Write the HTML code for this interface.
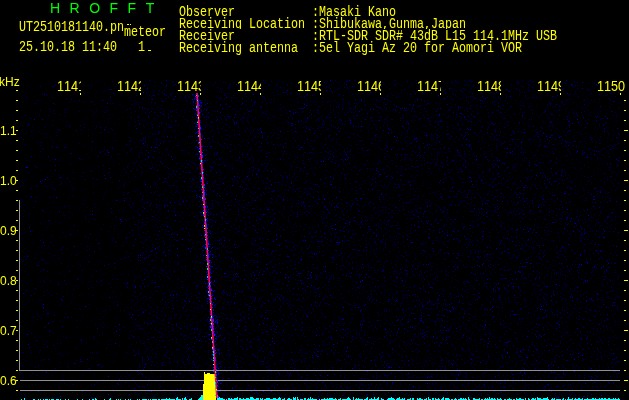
<!DOCTYPE html>
<html lang="en"><head><meta charset="utf-8"><title>HROFFT</title>
<style>
html,body{margin:0;padding:0;background:#000}
body{position:relative;width:629px;height:400px;overflow:hidden;color:#ff0;font-family:"Liberation Mono",monospace}
.m{position:absolute;height:13px;overflow:hidden;color:#ff0}
.m span{position:absolute;left:0;top:1px;display:block;white-space:pre;font:12px/12px "Liberation Mono",monospace;transform:scale(0.9722,1.2651);transform-origin:0 0}
#txt{position:absolute;left:0;top:0;width:629px;height:400px;will-change:transform}
.lb{background:#000;height:13px}
.lb span{font:14px/14px "Liberation Sans",sans-serif;font-kerning:none;transform:scale(.9,1);top:0}
.a{position:absolute;font:12px/12px "Liberation Sans",sans-serif;margin-top:-5px;white-space:pre}
.h{position:absolute;top:0;font:14px/16px "Liberation Sans",sans-serif;color:#0f0;letter-spacing:2.8px;white-space:pre;font-kerning:none}
.dot{position:absolute;height:1px;background:#ff0}
</style></head><body>
<svg width="629" height="400" viewBox="0 0 629 400" shape-rendering="crispEdges" style="position:absolute;left:0;top:0">
<g transform="translate(0,0.5)" fill="none" stroke-width="1">
<path d="M141 80h1m3 0h1m45 0h1m110 0h1m62 0h1m7 0h1m20 0h1m26 0h1m2 0h1m30 0h1m15 0h1m11 0h1m4 0h1m33 0h1m21 0h1m57 0h1m13 0h1M117 81h1m19 0h1m16 0h1m18 0h1m2 0h1m73 0h1m128 0h1m34 0h1m8 0h1m69 0h1m25 0h1m3 0h1m27 0h1m19 0h1m28 0h1M178 82h1m86 0h1m32 0h1m14 0h1m22 0h1m40 0h1m57 0h1m12 0h1m22 0h1m8 0h1m83 0h1m50 0h1M69 83h1m127 0h1m80 0h1m47 0h1m84 0h1m19 0h1m74 0h1m97 0h1M91 84h1m44 0h1m52 0h1m10 0h1m75 0h1m67 0h1m13 0h1m30 0h1m105 0h1m1 0h1M163 85h1m86 0h1m36 0h1m240 0h1m9 0h1m30 0h1m37 0h1m7 0h1m2 0h1M76 86h1m38 0h1m28 0h1m20 0h1m25 0h1m13 0h1m42 0h1m46 0h1m44 0h1m68 0h1m33 0h1m2 0h1m3 0h1m9 0h1m12 0h1m98 0h1M279 87h1m3 0h1m18 0h1m189 0h1m18 0h1m11 0h1m8 0h1m41 0h1m19 0h1m15 0h1M27 88h1m50 0h1m9 0h1m155 0h1m45 0h1m57 0h1m122 0h1m117 0h1M114 89h1m81 0h1m77 0h1m170 0h1m8 0h1m64 0h1m81 0h1M214 90h1m47 0h1m14 0h1m138 0h1m38 0h1m15 0h1m8 0h1m98 0h1M54 91h1m13 0h1m40 0h1m41 0h1m37 0h1m2 0h1m8 0h1m15 0h1m39 0h1m45 0h1m14 0h1m44 0h1m56 0h1m14 0h1m16 0h1m16 0h1m78 0h1m15 0h1m37 0h1M221 92h1m30 0h1m23 0h1m43 0h1m54 0h1m3 0h1m47 0h1m96 0h1m12 0h1m21 0h1m51 0h1m1 0h1M103 93h1m49 0h1m92 0h1m5 0h1m6 0h1m26 0h1m31 0h1m34 0h1m37 0h1m7 0h1m93 0h1m4 0h1m48 0h1m27 0h1m14 0h1M178 94h1m112 0h1m7 0h1m23 0h1m72 0h1m14 0h1m43 0h1m4 0h1m11 0h1m3 0h1m63 0h1m35 0h1m30 0h1M39 95h1m112 0h1m157 0h1m39 0h1m55 0h1m75 0h1m36 0h1m26 0h1m35 0h1m20 0h1M95 96h1m55 0h1m16 0h1m77 0h1m113 0h1m50 0h1m54 0h1m5 0h1m33 0h1m47 0h1M130 97h1m101 0h1m1 0h1m39 0h1m23 0h1m1 0h1m3 0h1m10 0h1m66 0h1m91 0h1m20 0h1m2 0h1m7 0h1m25 0h1m8 0h1m35 0h1M23 98h1m77 0h1m118 0h1m27 0h1m16 0h1m38 0h1m67 0h1m70 0h1m32 0h1m20 0h1M221 99h1m56 0h1m61 0h1m42 0h1m2 0h1m66 0h1m18 0h1m54 0h1m56 0h1m9 0h1m22 0h1M133 100h1m51 0h1m36 0h1m23 0h1m112 0h1m16 0h1m5 0h1m93 0h1m28 0h1m54 0h1m1 0h1m47 0h1M93 101h1m94 0h1m42 0h1m5 0h1h1m92 0h1m45 0h1m117 0h1m9 0h1M45 102h1m88 0h1m13 0h1m112 0h1m50 0h1m25 0h1m6 0h1m141 0h1m78 0h1m31 0h1M113 103h1m9 0h1m17 0h1m144 0h1m17 0h1m134 0h1m76 0h1m34 0h1M119 104h1m158 0h1m1 0h1m29 0h1M150 105h1m129 0h1m13 0h1m16 0h1m71 0h1m55 0h1m30 0h1m6 0h1m17 0h1m35 0h1m23 0h1M156 106h1m163 0h1m96 0h1m131 0h1M34 107h1m116 0h1m15 0h1m228 0h1m65 0h1m89 0h1m32 0h1M207 108h1m53 0h1m45 0h1m35 0h1m4 0h1m53 0h1m5 0h1m49 0h1m88 0h1M56 109h1m72 0h1m104 0h1m8 0h1m121 0h1m28 0h1h1m62 0h1m8 0h1m30 0h1m32 0h1m55 0h1m7 0h1M159 110h1m8 0h1m5 0h1m80 0h1m57 0h1m4 0h1m73 0h1m16 0h1m26 0h1m56 0h1m77 0h1M64 111h1m37 0h1m2 0h1m75 0h1m31 0h1m88 0h1h1m9 0h1m41 0h1m15 0h1m24 0h1m127 0h1m29 0h1m19 0h1M155 112h1m50 0h1m2 0h1m59 0h1m74 0h1m9 0h1m188 0h1M33 113h1m5 0h1m225 0h1m235 0h1h1m46 0h1m56 0h1M103 114h1m37 0h1m4 0h1m60 0h1m20 0h1m15 0h1m16 0h1m18 0h1m47 0h1m2 0h1m78 0h1m85 0h1m49 0h1m40 0h1M96 115h1m83 0h1m92 0h1m25 0h1m39 0h1m13 0h1m33 0h1m26 0h1m47 0h1m45 0h1m28 0h1m31 0h1m49 0h1M64 116h1m28 0h1m110 0h1m15 0h1m15 0h1m12 0h1m1 0h1m20 0h1m21 0h1m60 0h1m11 0h1m13 0h1m5 0h1m24 0h1m3 0h1m33 0h1m18 0h1m68 0h1M143 117h1m94 0h1m2 0h1m26 0h1m94 0h1m91 0h1m32 0h1h1m6 0h1m5 0h1m7 0h1m28 0h1m29 0h1M244 118h1m22 0h1m3 0h1m16 0h1m30 0h1m2 0h1m34 0h1m61 0h1m1 0h1m49 0h1m98 0h1M119 119h1m14 0h1m106 0h1m176 0h1m181 0h1M144 120h1m81 0h1m20 0h1m53 0h1m17 0h1m55 0h1h1m165 0h1m25 0h1h1M63 121h1m41 0h1m128 0h1m59 0h1m6 0h1m12 0h1m14 0h1m113 0h1m14 0h1m8 0h1m40 0h1m85 0h1M128 122h1m35 0h1m78 0h1m13 0h1m21 0h1m69 0h1m53 0h1m73 0h1m9 0h1h1m39 0h1m53 0h1M166 123h1m118 0h1m53 0h1m1 0h1m9 0h1m6 0h1m78 0h1h1m37 0h1m22 0h1m53 0h1M136 124h1m34 0h1m12 0h1m3 0h1m20 0h1m25 0h1m2 0h1m78 0h1m186 0h1m27 0h1M135 125h1m11 0h1m56 0h1m2 0h1m9 0h1m107 0h1m15 0h1m27 0h1m50 0h1m36 0h1m102 0h1M27 126h1m144 0h1m16 0h1m15 0h1m17 0h1m6 0h1m8 0h1m64 0h1m50 0h1m125 0h1m17 0h1m40 0h1m13 0h1M44 127h1m99 0h1m18 0h1m28 0h1m85 0h1m3 0h1m12 0h1m22 0h1m32 0h1m15 0h1h1m11 0h1m27 0h1m13 0h1m26 0h1m4 0h1m12 0h1m20 0h1h1m119 0h1M152 128h1m124 0h1m34 0h1h1m3 0h1h1m85 0h1m12 0h1m39 0h1m3 0h1m37 0h1m9 0h1m8 0h1M22 129h1m143 0h1m22 0h1m54 0h1m83 0h1m25 0h1m11 0h1m38 0h1m61 0h1m25 0h1m11 0h1m17 0h1m26 0h1M164 130h1m9 0h1m70 0h1m27 0h1m19 0h1m20 0h1m4 0h1m71 0h1m15 0h1m87 0h1m66 0h1m5 0h1M26 131h1m130 0h1m52 0h1m30 0h1m47 0h1m6 0h1m3 0h1m13 0h1m47 0h1m48 0h1m40 0h1m86 0h1m24 0h1M219 132h1m148 0h1m38 0h1m16 0h1m75 0h1M41 133h1m8 0h1m29 0h1m11 0h1m56 0h1m4 0h1m82 0h1m110 0h1m1 0h1m36 0h1m10 0h1m68 0h1m89 0h1M320 134h1m84 0h1m6 0h1m85 0h1m59 0h1m41 0h1M73 135h1m104 0h1m10 0h1m44 0h1m133 0h1m16 0h1m75 0h1h1m14 0h1m96 0h1M148 136h1m15 0h1m65 0h1m2 0h1m14 0h1m8 0h1m9 0h1h1m12 0h1m46 0h1m29 0h1m80 0h1m3 0h1m142 0h1m8 0h1M20 137h1m91 0h1m95 0h1m26 0h1m65 0h1m15 0h1m30 0h1m11 0h1m51 0h1m3 0h1m14 0h1m46 0h1m114 0h1m13 0h1M32 138h1m98 0h1m144 0h1m9 0h1m46 0h1m37 0h1m61 0h1m21 0h1m2 0h1m93 0h1m9 0h1m25 0h1m13 0h1M157 139h1m54 0h1m11 0h1m18 0h1m92 0h1m196 0h1m1 0h1m54 0h1m8 0h1M52 140h1m64 0h1m55 0h1m56 0h1m4 0h1m55 0h1m9 0h1m110 0h1m4 0h1m51 0h1m4 0h1m90 0h1m41 0h1M215 141h1m43 0h1m145 0h1h1m34 0h1m11 0h1m10 0h1m14 0h1m19 0h1m33 0h1m27 0h1m22 0h1m11 0h1M145 142h1m17 0h1m14 0h1m77 0h1m2 0h1m11 0h1m28 0h1m126 0h1m57 0h1m53 0h1m39 0h1M163 143h1m14 0h1m15 0h1m53 0h1m18 0h1m53 0h1m52 0h1m32 0h1m59 0h1m28 0h1M27 144h1m37 0h1m118 0h1m85 0h1m78 0h1m27 0h1m74 0h1m38 0h1m29 0h1M20 145h1m31 0h1m166 0h1m8 0h1m111 0h1m190 0h1m29 0h1m10 0h1h1M104 146h1m7 0h1m22 0h1h1m166 0h1m90 0h1m68 0h1m33 0h1m18 0h1m89 0h1M139 147h1m7 0h1m6 0h1m69 0h1m26 0h1m8 0h1m14 0h1m21 0h1m2 0h1m156 0h1m2 0h1m85 0h1h1m22 0h1M155 148h1m26 0h1m120 0h1m23 0h1m47 0h1m26 0h1m7 0h1m145 0h1m21 0h1M233 149h1m74 0h1m35 0h1m23 0h1m88 0h1M59 150h1m107 0h1m13 0h1m66 0h1m48 0h1m30 0h1m189 0h1m88 0h1M265 151h1m27 0h1m43 0h1m5 0h1m93 0h1m20 0h1m63 0h1m24 0h1m34 0h1M142 152h1m50 0h1m27 0h1m17 0h1m30 0h1m26 0h1m22 0h1m118 0h1m2 0h1m63 0h1m63 0h1m20 0h1M98 153h1m63 0h1m22 0h1m121 0h1m5 0h1m14 0h1m15 0h1m93 0h1m17 0h1m7 0h1m27 0h1m18 0h1m28 0h1m8 0h1M214 154h1m1 0h1m41 0h1m25 0h1m59 0h1m24 0h1m5 0h1m25 0h1m58 0h1m3 0h1m34 0h1m14 0h1m72 0h1m14 0h1m10 0h1M147 155h1m20 0h1m47 0h1m30 0h1m21 0h1m31 0h1m15 0h1m105 0h1m7 0h1m11 0h1m21 0h1m8 0h1m71 0h1m40 0h1M98 156h1m12 0h1m30 0h1m16 0h1m15 0h1m91 0h1m26 0h1m20 0h1m5 0h1m2 0h1m11 0h1m124 0h1m12 0h1m19 0h1m25 0h1m28 0h1m11 0h1m4 0h1m14 0h1m31 0h1M71 157h1m38 0h1m50 0h1m60 0h1m80 0h1m19 0h1m18 0h1m53 0h1m40 0h1m47 0h1m32 0h1m13 0h1m22 0h1m41 0h1m7 0h1M119 158h1m33 0h1m251 0h1m18 0h1m26 0h1m18 0h1m27 0h1m57 0h1M45 159h1m86 0h1m32 0h1m41 0h1h1m17 0h1m51 0h1m4 0h1m40 0h1m1 0h1m51 0h1m5 0h1m28 0h1m22 0h1h1m31 0h1m52 0h1m51 0h1m1 0h1m14 0h1M238 160h1m23 0h1m6 0h1m44 0h1m5 0h1m71 0h1m28 0h1m15 0h1m13 0h1m13 0h1h1m56 0h1m5 0h1m6 0h1m12 0h1m1 0h1m4 0h1m30 0h1M61 161h1m8 0h1m86 0h1m65 0h1m63 0h1m117 0h1m40 0h1m135 0h1m14 0h1m21 0h1M113 162h1m27 0h1m18 0h1m21 0h1m6 0h1m61 0h1m53 0h1m82 0h1m41 0h1m5 0h1m31 0h1m70 0h1m14 0h1m50 0h1M134 163h1m12 0h1m28 0h1m16 0h1m81 0h1m67 0h1m48 0h1m22 0h1m28 0h1m37 0h1m48 0h1m75 0h1M194 164h1m22 0h1m2 0h1m49 0h1m17 0h1m2 0h1m116 0h1m59 0h1m35 0h1m55 0h1M69 165h1m112 0h1m35 0h1m202 0h1m26 0h1m64 0h1m23 0h1M86 166h1m94 0h1m6 0h1m20 0h1m14 0h1m38 0h1m2 0h1m40 0h1m29 0h1m17 0h1m72 0h1m25 0h1m1 0h1m10 0h1M25 167h1m115 0h1m45 0h1m25 0h1m82 0h1m28 0h1m208 0h1m9 0h1m64 0h1m6 0h1M137 168h1m31 0h1m103 0h1m82 0h1m20 0h1m30 0h1m20 0h1m43 0h1m14 0h1m23 0h1m62 0h1m4 0h1m17 0h1M21 169h1h1m50 0h1m62 0h1m137 0h1m15 0h1m11 0h1m32 0h1m54 0h1m30 0h1m36 0h1m2 0h1m77 0h1m22 0h1m37 0h1M131 170h1m79 0h1m3 0h1m23 0h1m11 0h1m29 0h1m43 0h1h1m16 0h1m23 0h1m12 0h1m8 0h1m57 0h1m49 0h1m29 0h1m50 0h1M166 171h1m14 0h1m75 0h1m40 0h1m35 0h1m65 0h1m27 0h1m2 0h1m45 0h1m111 0h1m4 0h1M98 172h1m89 0h1m31 0h1m37 0h1m71 0h1m54 0h1m72 0h1m1 0h1m143 0h1m10 0h1M103 173h1m49 0h1m59 0h1m16 0h1m12 0h1m9 0h1m26 0h1m82 0h1m44 0h1m22 0h1m43 0h1m101 0h1M114 174h1m41 0h1m6 0h1m4 0h1m178 0h1m93 0h1m51 0h1m7 0h1m2 0h1m56 0h1m54 0h1M120 175h1m49 0h1m24 0h1m90 0h1m91 0h1m49 0h1m57 0h1m78 0h1m15 0h1m11 0h1M51 176h1m76 0h1m43 0h1m40 0h1m27 0h1m50 0h1m13 0h1m26 0h1m39 0h1m37 0h1m151 0h1M33 177h1m25 0h1m268 0h1m15 0h1m10 0h1m59 0h1m43 0h1m13 0h1m33 0h1m62 0h1m5 0h1M164 178h1m60 0h1m23 0h1m5 0h1m27 0h1m2 0h1h1m97 0h1m140 0h1M26 179h1m106 0h1m56 0h1m1 0h1m52 0h1m2 0h1m96 0h1m111 0h1m5 0h1m17 0h1m3 0h1m30 0h1m11 0h1M21 180h1m101 0h1m91 0h1m45 0h1m34 0h1m8 0h1m87 0h1m6 0h1m100 0h1m73 0h1M20 181h1m40 0h1m78 0h1m13 0h1m2 0h1m98 0h1m1 0h1m32 0h1m41 0h1m28 0h1m50 0h1m113 0h1m12 0h1m8 0h1m3 0h1h1m33 0h1M65 182h1m154 0h1m66 0h1m39 0h1m26 0h1m53 0h1m20 0h1m140 0h1M49 183h1m217 0h1m36 0h1m5 0h1m5 0h1m29 0h1m30 0h1m23 0h1m13 0h1m65 0h1m18 0h1m71 0h1M51 184h1m166 0h1m5 0h1m30 0h1m25 0h1m39 0h1m80 0h1m2 0h1m25 0h1m62 0h1m1 0h1m107 0h1M48 185h1m18 0h1m129 0h1m13 0h1m82 0h1m29 0h1m76 0h1m60 0h1m25 0h1m23 0h1m66 0h1m34 0h1M120 186h1m145 0h1m60 0h1m16 0h1m30 0h1m8 0h1m69 0h1m15 0h1m147 0h1M172 187h1m15 0h1m7 0h1m72 0h1m4 0h1m72 0h1m45 0h1m88 0h1m10 0h1m46 0h1M73 188h1h1m44 0h1m56 0h1m119 0h1m17 0h1m73 0h1m24 0h1m156 0h1m24 0h1M111 189h1m193 0h1m3 0h1m148 0h1m41 0h1m82 0h1m17 0h1m9 0h1m4 0h1M37 190h1m68 0h1m84 0h1m20 0h1m71 0h1m1 0h1m18 0h1m45 0h1m5 0h1m12 0h1m8 0h1m21 0h1h1m17 0h1m102 0h1m59 0h1M80 191h1m57 0h1m16 0h1m16 0h1m125 0h1m138 0h1h1m12 0h1m40 0h1m50 0h1m4 0h1M179 192h1m133 0h1m25 0h1m94 0h1m1 0h1m115 0h1m9 0h1m25 0h1h1M31 193h1m13 0h1m107 0h1m57 0h1m85 0h1m5 0h1m3 0h1m50 0h1m23 0h1m3 0h1m53 0h1m15 0h1m13 0h1m11 0h1m27 0h1m59 0h1m6 0h1h1m12 0h1M53 194h1m15 0h1m70 0h1m119 0h1h1m8 0h1m27 0h1m27 0h1m112 0h1h1m143 0h1M26 195h1m204 0h1m4 0h1m17 0h1m79 0h1m128 0h1m27 0h1m11 0h1m66 0h1m12 0h1m14 0h1M38 196h1m44 0h1m189 0h1m9 0h1m26 0h1m7 0h1m60 0h1m18 0h1m81 0h1m30 0h1M85 197h1m103 0h1m67 0h1m42 0h1m91 0h1m24 0h1m22 0h1m15 0h1m23 0h1m1 0h1m59 0h1m62 0h1m1 0h1m9 0h1M117 198h1m6 0h1m14 0h1m135 0h1m137 0h1m1 0h1M97 199h1m49 0h1m17 0h1m217 0h1m73 0h1m84 0h1M83 200h1m33 0h1m44 0h1m4 0h1m15 0h1m31 0h1m135 0h1m35 0h1m48 0h1m23 0h1m2 0h1h1m17 0h1m37 0h1m10 0h1m7 0h1M119 201h1m58 0h1m37 0h1m12 0h1m30 0h1m149 0h1m6 0h1m11 0h1m31 0h1h1m14 0h1m42 0h1m9 0h1m14 0h1m7 0h1m56 0h1M107 202h1m75 0h1m47 0h1m77 0h1m134 0h1m6 0h1m11 0h1m74 0h1m53 0h1M48 203h1m10 0h1m213 0h1m80 0h1m52 0h1m50 0h1m2 0h1m39 0h1m51 0h1M63 204h1m43 0h1m104 0h1m33 0h1m55 0h1m15 0h1m34 0h1m24 0h1m20 0h1m87 0h1m4 0h1m5 0h1m120 0h1M25 205h1m57 0h1m68 0h1m81 0h1h1m11 0h1m1 0h1m55 0h1m9 0h1m101 0h1m54 0h1m70 0h1m5 0h1m20 0h1M61 206h1m79 0h1m46 0h1m95 0h1m7 0h1m18 0h1m27 0h1m22 0h1m41 0h1m21 0h1m54 0h1M53 207h1m11 0h1m21 0h1m68 0h1m63 0h1m23 0h1m84 0h1m33 0h1m57 0h1m119 0h1m5 0h1m33 0h1M70 208h1m67 0h1m144 0h1m40 0h1m15 0h1m36 0h1m39 0h1m100 0h1m72 0h1m6 0h1M140 209h1m10 0h1m8 0h1m103 0h1m61 0h1m30 0h1m78 0h1m16 0h1m32 0h1m23 0h1m50 0h1m57 0h1M85 210h1m4 0h1m176 0h1m67 0h1m37 0h1m67 0h1m135 0h1M122 211h1m49 0h1m74 0h1m1 0h1m28 0h1m2 0h1m17 0h1m7 0h1m15 0h1m68 0h1m35 0h1m15 0h1m108 0h1m9 0h1m15 0h1m26 0h1M57 212h1m90 0h1m71 0h1m31 0h1m40 0h1m30 0h1m66 0h1m19 0h1m29 0h1m98 0h1m30 0h1m18 0h1M219 213h1m25 0h1m4 0h1m14 0h1m16 0h1m22 0h1m2 0h1h1m33 0h1m36 0h1m16 0h1m60 0h1m20 0h1m1 0h1m12 0h1m19 0h1m10 0h1m31 0h1M72 214h1m153 0h1m66 0h1m64 0h1m19 0h1m69 0h1m25 0h1m55 0h1m2 0h1m26 0h1m4 0h1m6 0h1m35 0h1m4 0h1M146 215h1m51 0h1m15 0h1m45 0h1m46 0h1m9 0h1h1m25 0h1m125 0h1m5 0h1m14 0h1m16 0h1m3 0h1m33 0h1m2 0h1m19 0h1m29 0h1m17 0h1M115 216h1m65 0h1m79 0h1m8 0h1m13 0h1m107 0h1m84 0h1m9 0h1m91 0h1m36 0h1M30 217h1m115 0h1m1 0h1m113 0h1m21 0h1m55 0h1m106 0h1m8 0h1m56 0h1m7 0h1m85 0h1M65 218h1m28 0h1m163 0h1m29 0h1m52 0h1m11 0h1m56 0h1h1m1 0h1m22 0h1m170 0h1M122 219h1m29 0h1m4 0h1m9 0h1m91 0h1m12 0h1m58 0h1m5 0h1m74 0h1m40 0h1m161 0h1M150 220h1m85 0h1m49 0h1m68 0h1m80 0h1m119 0h1m4 0h1m8 0h1m40 0h1m1 0h1M55 221h1m124 0h1m4 0h1m40 0h1m18 0h1m18 0h1m153 0h1m28 0h1m26 0h1m81 0h1m3 0h1M157 222h1m39 0h1m13 0h1m56 0h1m20 0h1m128 0h1m8 0h1m26 0h1m88 0h1m62 0h1M20 223h1m179 0h1m27 0h1m16 0h1m19 0h1m57 0h1m22 0h1m13 0h1m8 0h1m127 0h1m3 0h1M49 224h1m84 0h1m98 0h1m39 0h1m9 0h1m9 0h1m86 0h1m7 0h1m25 0h1m48 0h1m61 0h1m20 0h1m3 0h1m10 0h1M152 225h1m11 0h1m7 0h1m61 0h1m55 0h1m40 0h1m42 0h1m11 0h1m131 0h1m29 0h1m17 0h1m28 0h1m5 0h1M186 226h1m43 0h1m15 0h1m3 0h1m61 0h1m163 0h1m26 0h1m20 0h1m84 0h1m4 0h1M140 227h1m1 0h1m14 0h1m53 0h1m128 0h1m43 0h1m115 0h1m4 0h1m67 0h1m7 0h1m5 0h1m22 0h1M236 228h1m2 0h1m82 0h1m6 0h1m38 0h1m15 0h1m12 0h1m86 0h1m19 0h1m76 0h1m17 0h1m11 0h1M190 229h1m62 0h1m4 0h1m17 0h1m26 0h1h1m66 0h1m15 0h1m18 0h1m30 0h1m16 0h1m70 0h1m2 0h1M177 230h1m106 0h1m35 0h1m68 0h1m49 0h1m148 0h1m3 0h1M52 231h1m113 0h1m17 0h1m76 0h1m8 0h1m4 0h1m20 0h1m11 0h1m19 0h1m78 0h1m22 0h1m23 0h1m26 0h1m67 0h1m6 0h1m35 0h1M24 232h1m14 0h1m58 0h1m33 0h1m60 0h1m4 0h1m91 0h1m22 0h1m2 0h1m13 0h1m6 0h1m1 0h1m162 0h1m10 0h1m10 0h1m1 0h1m37 0h1m16 0h1m4 0h1M22 233h1m151 0h1m37 0h1m57 0h1m52 0h1m37 0h1m23 0h1m30 0h1m146 0h1m2 0h1m8 0h1m19 0h1M21 234h1m29 0h1m66 0h1m48 0h1m31 0h1m156 0h1m8 0h1m20 0h1m9 0h1m9 0h1m11 0h1m41 0h1m7 0h1m111 0h1h1m6 0h1m12 0h1M108 235h1m129 0h1m27 0h1m189 0h1m7 0h1m6 0h1m47 0h1m9 0h1m5 0h1m82 0h1M64 236h1h1m8 0h1m67 0h1m102 0h1m137 0h1m5 0h1m6 0h1m5 0h1m56 0h1m26 0h1m82 0h1m5 0h1M85 237h1m43 0h1m19 0h1m74 0h1m31 0h1m3 0h1m12 0h1m67 0h1m56 0h1m42 0h1m94 0h1m19 0h1m2 0h1m20 0h1h1M96 238h1m213 0h1m5 0h1m48 0h1m27 0h1m44 0h1m19 0h1m7 0h1m36 0h1m91 0h1M308 239h1m77 0h1m30 0h1m39 0h1m18 0h1m6 0h1m39 0h1m87 0h1m6 0h1M173 240h1m40 0h1m36 0h1m34 0h1m231 0h1m4 0h1m18 0h1m16 0h1M22 241h1m148 0h1m24 0h1m38 0h1m4 0h1h1m2 0h1m27 0h1m67 0h1m27 0h1m24 0h1m66 0h1m7 0h1m31 0h1m47 0h1M42 242h1m44 0h1m22 0h1m23 0h1m115 0h1m10 0h1m42 0h1m8 0h1m83 0h1m43 0h1m7 0h1m16 0h1m49 0h1m47 0h1m22 0h1m20 0h1M80 243h1m111 0h1m26 0h1m69 0h1m37 0h1m53 0h1m1 0h1m55 0h1m45 0h1m50 0h1m6 0h1m22 0h1M81 244h1m89 0h1m63 0h1m21 0h1m79 0h1m21 0h1m14 0h1m25 0h1m67 0h1m3 0h1m29 0h1m6 0h1m59 0h1M153 245h1m64 0h1m49 0h1m16 0h1m51 0h1m31 0h1m1 0h1m121 0h1m32 0h1m19 0h1m36 0h1M100 246h1m47 0h1m78 0h1m10 0h1m54 0h1m60 0h1m15 0h1m114 0h1m42 0h1m4 0h1m20 0h1m7 0h1M27 247h1m33 0h1m105 0h1m69 0h1m71 0h1m16 0h1m21 0h1m22 0h1m46 0h1m6 0h1m36 0h1m16 0h1m85 0h1m28 0h1M133 248h1m13 0h1m119 0h1h1m12 0h1m97 0h1m3 0h1m29 0h1m121 0h1m42 0h1m11 0h1M185 249h1m2 0h1m61 0h1h1m92 0h1m85 0h1m33 0h1m7 0h1m19 0h1m27 0h1m33 0h1m36 0h1M107 250h1m30 0h1m38 0h1m41 0h1m55 0h1m99 0h1m21 0h1m41 0h1m21 0h1m45 0h1m51 0h1m3 0h1m53 0h1M59 251h1m85 0h1m13 0h1m61 0h1m9 0h1m34 0h1m69 0h1m143 0h1m7 0h1m14 0h1m10 0h1m8 0h1m1 0h1m8 0h1m25 0h1m16 0h1m7 0h1m25 0h1M110 252h1m16 0h1m43 0h1m19 0h1m106 0h1m4 0h1m53 0h1m105 0h1m42 0h1m25 0h1m23 0h1m58 0h1M36 253h1m104 0h1m23 0h1m2 0h1m30 0h1m71 0h1h1m21 0h1m8 0h1m75 0h1m40 0h1h1m97 0h1M26 254h1m9 0h1m34 0h1m72 0h1m6 0h1m61 0h1m1 0h1m40 0h1m74 0h1m2 0h1m2 0h1m18 0h1m137 0h1m89 0h1M55 255h1m267 0h1h1m98 0h1m35 0h1m49 0h1m4 0h1m47 0h1m42 0h1M60 256h1m167 0h1m16 0h1m12 0h1m1 0h1m13 0h1m14 0h1m46 0h1m5 0h1m137 0h1m33 0h1m16 0h1m23 0h1m60 0h1M143 257h1m13 0h1m68 0h1m286 0h1m20 0h1M35 258h1m51 0h1m25 0h1m6 0h1m68 0h1m25 0h1m81 0h1m34 0h1m18 0h1m10 0h1m35 0h1m8 0h1m71 0h1m29 0h1m53 0h1m12 0h1m13 0h1M25 259h1m218 0h1m96 0h1m156 0h1m84 0h1m18 0h1m4 0h1m1 0h1M168 260h1m82 0h1m114 0h1m3 0h1m42 0h1m55 0h1m18 0h1m18 0h1m13 0h1m52 0h1m11 0h1M116 261h1m101 0h1m81 0h1m51 0h1m7 0h1m90 0h1h1m25 0h1m23 0h1m74 0h1m30 0h1M38 262h1m10 0h1m164 0h1m34 0h1m41 0h1m41 0h1m46 0h1m27 0h1m33 0h1m136 0h1M100 263h1m9 0h1m109 0h1m131 0h1m15 0h1m64 0h1m72 0h1m16 0h1M50 264h1m28 0h1m14 0h1m188 0h1m29 0h1m36 0h1m50 0h1m11 0h1m41 0h1m11 0h1m82 0h1m56 0h1M123 265h1m44 0h1m9 0h1m110 0h1m76 0h1m77 0h1m13 0h1M67 266h1m92 0h1m4 0h1m3 0h1m103 0h1m49 0h1m197 0h1m52 0h1m4 0h1M84 267h1m69 0h1m1 0h1m60 0h1m13 0h1m33 0h1m6 0h1h1m49 0h1m49 0h1m97 0h1M78 268h1m63 0h1m4 0h1m4 0h1m4 0h1m24 0h1m37 0h1m92 0h1m4 0h1m59 0h1m103 0h1m127 0h1M91 269h1m49 0h1m18 0h1m89 0h1m106 0h1m19 0h1m33 0h1m89 0h1m91 0h1m12 0h1M164 270h1m84 0h1m68 0h1m85 0h1m15 0h1m116 0h1m27 0h1M25 271h1m37 0h1m77 0h1m12 0h1m15 0h1m81 0h1m6 0h1m13 0h1m14 0h1m35 0h1m58 0h1m43 0h1m10 0h1m36 0h1m9 0h1m3 0h1m102 0h1M38 272h1m120 0h1m5 0h1m50 0h1m13 0h1m159 0h1m9 0h1h1m75 0h1m17 0h1m62 0h1m34 0h1M133 273h1m23 0h1m9 0h1m33 0h1m48 0h1m12 0h1m62 0h1m75 0h1m13 0h1m54 0h1m5 0h1m3 0h1m48 0h1M120 274h1m50 0h1m19 0h1m63 0h1m63 0h1m37 0h1m24 0h1m11 0h1m96 0h1m36 0h1m18 0h1m24 0h1M112 275h1m26 0h1h1m49 0h1m37 0h1m61 0h1m16 0h1m14 0h1m3 0h1m15 0h1m27 0h1m50 0h1m26 0h1m72 0h1m71 0h1M251 276h1m47 0h1m11 0h1m57 0h1m21 0h1m2 0h1m41 0h1m165 0h1M234 277h1m57 0h1m8 0h1m18 0h1m1 0h1m148 0h1m12 0h1m25 0h1m10 0h1M138 278h1m94 0h1m76 0h1m28 0h1m10 0h1m4 0h1m41 0h1m3 0h1m74 0h1m5 0h1m17 0h1m20 0h1m2 0h1m26 0h1M102 279h1m32 0h1m138 0h1m3 0h1m175 0h1m61 0h1h1m5 0h1m80 0h1M133 280h1m21 0h1m100 0h1m60 0h1m36 0h1m38 0h1m27 0h1m52 0h1m34 0h1m43 0h1m20 0h1m38 0h1M30 281h1m151 0h1m38 0h1m39 0h1m5 0h1m34 0h1m19 0h1m79 0h1m182 0h1m3 0h1m2 0h1M152 282h1m3 0h1m14 0h1m167 0h1m61 0h1m26 0h1m65 0h1m40 0h1m14 0h1m36 0h1m13 0h1m8 0h1M123 283h1m18 0h1m58 0h1m50 0h1m138 0h1m36 0h1m86 0h1m6 0h1m96 0h1M132 284h1m29 0h1m7 0h1m134 0h1m3 0h1m59 0h1m13 0h1m49 0h1m72 0h1m51 0h1m8 0h1M61 285h1m73 0h1m111 0h1m167 0h1m54 0h1m2 0h1m29 0h1m59 0h1M91 286h1m97 0h1m6 0h1m27 0h1m11 0h1m97 0h1m78 0h1m51 0h1m8 0h1m128 0h1M176 287h1m52 0h1m124 0h1m7 0h1m15 0h1m20 0h1m14 0h1m57 0h1m88 0h1M107 288h1m33 0h1m106 0h1m18 0h1m26 0h1m13 0h1m50 0h1m2 0h1m107 0h1m16 0h1m5 0h1m12 0h1m11 0h1M234 289h1m27 0h1m2 0h1m67 0h1m84 0h1m19 0h1m67 0h1m12 0h1m4 0h1m13 0h1m78 0h1M168 290h1m54 0h1m19 0h1m82 0h1m119 0h1m38 0h1m89 0h1m37 0h1M24 291h1m144 0h1m27 0h1m38 0h1m17 0h1h1m31 0h1m59 0h1m53 0h1m62 0h1m26 0h1m42 0h1m4 0h1m40 0h1m31 0h1M61 292h1m99 0h1m18 0h1m4 0h1m129 0h1m21 0h1m21 0h1m24 0h1m32 0h1m15 0h1m73 0h1m37 0h1m59 0h1m3 0h1M185 293h1m12 0h1m29 0h1m48 0h1m15 0h1m9 0h1m77 0h1m9 0h1m21 0h1m14 0h1m90 0h1m3 0h1m11 0h1m55 0h1m4 0h1h1M104 294h1m57 0h1m11 0h1m105 0h1m52 0h1m73 0h1m74 0h1m11 0h1m85 0h1m12 0h1m13 0h1m4 0h1M29 295h1m49 0h1m102 0h1m127 0h1m73 0h1m149 0h1M204 296h1h1m49 0h1m25 0h1m33 0h1m10 0h1m36 0h1m84 0h1m29 0h1m81 0h1m19 0h1m5 0h1M179 297h1m36 0h1m43 0h1m70 0h1m12 0h1m93 0h1m54 0h1m44 0h1m80 0h1M149 298h1m12 0h1m9 0h1m167 0h1m134 0h1m29 0h1m2 0h1m99 0h1M40 299h1m126 0h1m57 0h1m10 0h1m120 0h1m2 0h1m31 0h1m104 0h1m71 0h1m6 0h1m22 0h1M32 300h1m18 0h1m97 0h1m133 0h1m54 0h1m90 0h1m7 0h1m70 0h1m56 0h1h1m35 0h1M28 301h1m256 0h1m15 0h1m42 0h1m52 0h1m8 0h1m6 0h1h1m32 0h1m6 0h1m31 0h1m11 0h1m6 0h1m75 0h1M137 302h1m47 0h1m58 0h1m162 0h1m3 0h1m119 0h1m11 0h1m8 0h1m49 0h1M40 303h1m51 0h1m27 0h1m14 0h1m36 0h1m13 0h1m9 0h1m137 0h1m47 0h1m17 0h1m42 0h1m1 0h1m6 0h1m10 0h1m53 0h1m8 0h1m10 0h1m2 0h1m26 0h1M117 304h1m48 0h1m62 0h1m32 0h1m15 0h1m69 0h1m7 0h1m52 0h1m16 0h1M77 305h1m69 0h1m7 0h1m72 0h1m60 0h1m21 0h1m29 0h1m11 0h1m9 0h1m26 0h1M61 306h1m78 0h1m50 0h1m29 0h1m83 0h1m8 0h1m21 0h1m147 0h1m39 0h1m2 0h1m58 0h1M127 307h1m40 0h1m63 0h1m40 0h1m6 0h1m122 0h1m38 0h1m3 0h1m13 0h1m106 0h1m17 0h1M239 308h1m180 0h1m109 0h1m17 0h1M140 309h1m81 0h1m69 0h1m41 0h1m21 0h1m27 0h1m67 0h1m17 0h1m16 0h1m11 0h1m28 0h1M35 310h1m103 0h1m17 0h1m4 0h1m16 0h1m2 0h1m3 0h1m113 0h1m4 0h1m91 0h1m111 0h1m26 0h1m58 0h1m3 0h1M49 311h1m152 0h1m87 0h1m93 0h1m19 0h1m34 0h1m122 0h1M157 312h1m70 0h1m9 0h1m33 0h1m158 0h1m15 0h1m59 0h1m51 0h1m43 0h1M221 313h1m33 0h1m55 0h1m32 0h1m17 0h1m18 0h1M175 314h1m42 0h1m5 0h1m1 0h1m10 0h1m45 0h1m51 0h1m48 0h1m142 0h1m6 0h1m19 0h1m10 0h1m3 0h1m33 0h1M133 315h1m34 0h1m93 0h1m44 0h1m175 0h1m15 0h1m13 0h1M386 316h1m32 0h1m85 0h1m51 0h1m15 0h1M115 317h1m9 0h1m49 0h1m145 0h1m45 0h1m9 0h1m12 0h1m12 0h1m17 0h1m109 0h1m35 0h1h1M41 318h1m136 0h1m24 0h1m19 0h1m67 0h1m3 0h1m56 0h1m9 0h1h1m127 0h1m16 0h1m14 0h1m3 0h1m14 0h1m17 0h1m21 0h1m35 0h1M74 319h1m23 0h1m1 0h1m92 0h1m40 0h1m79 0h1m35 0h1m34 0h1m24 0h1m14 0h1m15 0h1m12 0h1m41 0h1m3 0h1m12 0h1m7 0h1m15 0h1m70 0h1M76 320h1m14 0h1m58 0h1m112 0h1m15 0h1m83 0h1m46 0h1m49 0h1m28 0h1M80 321h1m56 0h1m7 0h1m11 0h1m43 0h1m3 0h1m1 0h1m37 0h1m49 0h1m148 0h1m2 0h1m38 0h1m46 0h1m21 0h1m50 0h1M288 322h1m8 0h1m68 0h1m1 0h1m19 0h1m13 0h1m32 0h1m18 0h1m21 0h1m52 0h1M99 323h1m37 0h1m23 0h1m70 0h1m62 0h1m9 0h1m68 0h1m83 0h1m50 0h1m99 0h1M104 324h1m30 0h1m12 0h1m47 0h1m67 0h1m84 0h1m91 0h1m10 0h1m22 0h1m41 0h1h1m2 0h1m64 0h1m4 0h1m5 0h1m19 0h1M267 325h1m31 0h1m14 0h1m47 0h1m34 0h1m4 0h1m8 0h1m4 0h1m110 0h1m30 0h1m56 0h1M125 326h1m21 0h1m17 0h1m10 0h1m2 0h1m50 0h1h1m40 0h1m16 0h1m10 0h1m59 0h1m54 0h1m8 0h1m17 0h1m7 0h1m25 0h1m8 0h1m19 0h1m49 0h1m6 0h1m31 0h1M44 327h1m42 0h1m34 0h1h1m32 0h1m33 0h1m29 0h1m86 0h1m212 0h1m14 0h1m1 0h1h1m45 0h1M90 328h1m33 0h1m26 0h1m18 0h1m175 0h1m38 0h1m33 0h1m28 0h1m28 0h1m5 0h1h1m68 0h1M187 329h1m58 0h1m27 0h1m29 0h1m37 0h1m80 0h1m18 0h1h1m36 0h1M174 330h1m2 0h1m156 0h1m18 0h1m203 0h1M74 331h1m286 0h1m2 0h1m43 0h1m79 0h1m91 0h1M20 332h1m81 0h1m41 0h1m255 0h1m3 0h1m54 0h1m100 0h1m27 0h1M33 333h1m19 0h1m95 0h1m30 0h1m10 0h1m57 0h1m1 0h1m29 0h1m32 0h1m77 0h1m17 0h1m12 0h1m80 0h1m12 0h1M171 334h1m8 0h1h1h1m1 0h1m14 0h1m6 0h1m20 0h1m39 0h1m24 0h1m3 0h1m6 0h1m18 0h1m90 0h1m6 0h1h1m41 0h1m22 0h1m11 0h1m67 0h1m29 0h1M99 335h1m63 0h1m176 0h1m3 0h1m19 0h1m1 0h1m88 0h1m15 0h1m3 0h1m19 0h1m38 0h1m5 0h1m74 0h1M63 336h1m68 0h1m50 0h1m11 0h1m3 0h1m104 0h1m42 0h1m67 0h1m2 0h1m17 0h1m30 0h1m24 0h1m47 0h1m62 0h1m8 0h1M42 337h1m108 0h1m46 0h1m30 0h1m29 0h1m18 0h1m72 0h1m7 0h1m39 0h1m71 0h1m57 0h1m57 0h1m11 0h1M93 338h1m99 0h1m69 0h1m104 0h1m63 0h1m183 0h1M79 339h1m67 0h1m98 0h1h1m5 0h1m3 0h1m1 0h1m24 0h1m45 0h1h1m32 0h1m95 0h1m94 0h1m44 0h1M293 340h1m13 0h1m50 0h1m41 0h1m29 0h1m14 0h1m60 0h1m10 0h1m42 0h1m20 0h1M108 341h1m148 0h1m18 0h1m45 0h1m19 0h1m23 0h1h1m142 0h1m5 0h1m23 0h1M30 342h1m153 0h1m160 0h1m21 0h1m21 0h1m33 0h1m21 0h1m34 0h1M86 343h1m54 0h1m9 0h1m83 0h1m52 0h1m99 0h1m23 0h1m38 0h1m15 0h1m11 0h1m56 0h1m52 0h1M111 344h1m19 0h1m18 0h1m52 0h1m42 0h1m75 0h1m97 0h1m63 0h1m5 0h1m14 0h1m35 0h1M307 345h1m3 0h1m12 0h1m71 0h1m75 0h1m10 0h1m25 0h1m66 0h1M54 346h1m105 0h1m81 0h1m18 0h1m27 0h1m66 0h1m115 0h1m62 0h1m6 0h1m2 0h1m12 0h1m9 0h1M40 347h1m181 0h1m2 0h1m41 0h1m5 0h1m41 0h1m127 0h1m25 0h1m21 0h1m14 0h1M146 348h1m1 0h1m7 0h1m74 0h1m64 0h1m4 0h1m26 0h1m18 0h1m68 0h1m20 0h1m97 0h1M46 349h1m98 0h1m45 0h1m2 0h1m95 0h1m34 0h1m28 0h1m23 0h1m45 0h1m92 0h1m64 0h1M85 350h1m53 0h1m7 0h1m3 0h1m17 0h1m7 0h1m2 0h1m54 0h1m22 0h1m7 0h1m24 0h1m27 0h1m12 0h1m34 0h1m72 0h1m48 0h1m54 0h1m28 0h1M135 351h1m9 0h1m11 0h1m4 0h1m10 0h1m89 0h1m79 0h1m94 0h1m102 0h1M31 352h1m7 0h1m76 0h1m68 0h1m42 0h1m5 0h1m34 0h1m13 0h1m8 0h1m7 0h1m219 0h1m15 0h1m14 0h1m27 0h1m18 0h1M31 353h1m97 0h1m6 0h1m12 0h1m22 0h1m3 0h1m4 0h1m39 0h1m8 0h1m26 0h1m10 0h1h1m17 0h1m14 0h1m4 0h1m12 0h1m23 0h1m15 0h1m130 0h1m23 0h1m51 0h1m8 0h1m9 0h1m4 0h1M137 354h1m18 0h1m32 0h1m130 0h1m1 0h1m4 0h1m36 0h1m36 0h1m27 0h1m26 0h1m76 0h1M208 355h1m13 0h1m26 0h1m24 0h1m28 0h1h1m78 0h1m41 0h1m23 0h1m44 0h1m24 0h1m80 0h1M157 356h1m16 0h1m9 0h1m197 0h1m56 0h1h1m13 0h1m1 0h1m17 0h1m70 0h1m8 0h1m36 0h1M229 357h1m25 0h1m30 0h1m73 0h1m29 0h1m11 0h1h1m27 0h1m48 0h1m41 0h1m75 0h1m15 0h1M125 358h1m20 0h1m32 0h1m3 0h1m18 0h1m40 0h1m13 0h1m6 0h1m34 0h1m179 0h1m8 0h1M23 359h1m18 0h1m107 0h1m30 0h1m117 0h1m19 0h1m36 0h1m23 0h1m80 0h1m77 0h1m61 0h1M50 360h1m25 0h1m48 0h1m51 0h1m11 0h1m61 0h1m84 0h1m49 0h1m7 0h1m18 0h1m29 0h1m23 0h1m4 0h1m26 0h1m10 0h1m7 0h1m1 0h1m82 0h1m8 0h1M196 361h1m61 0h1m161 0h1m33 0h1m57 0h1m56 0h1M57 362h1m77 0h1m9 0h1m36 0h1m21 0h1m78 0h1m11 0h1m17 0h1m70 0h1m38 0h1m22 0h1m58 0h1M67 363h1m18 0h1m58 0h1m1 0h1m22 0h1m16 0h1m32 0h1m3 0h1m8 0h1m17 0h1m9 0h1m26 0h1m47 0h1m49 0h1m7 0h1m2 0h1m55 0h1m33 0h1m18 0h1M22 364h1m78 0h1m119 0h1m8 0h1m60 0h1m66 0h1m23 0h1m25 0h1m61 0h1m36 0h1M79 365h1m113 0h1m7 0h1m8 0h1m83 0h1m9 0h1m1 0h1m12 0h1m76 0h1m44 0h1m6 0h1m8 0h1m39 0h1m5 0h1m34 0h1M22 366h1m154 0h1m43 0h1m81 0h1m99 0h1m13 0h1m3 0h1h1m17 0h1m1 0h1h1M60 367h1m13 0h1m26 0h1m38 0h1m51 0h1m4 0h1m27 0h1m26 0h1m101 0h1m39 0h1m20 0h1m34 0h1m22 0h1m26 0h1m7 0h1m13 0h1m28 0h1m21 0h1m4 0h1m9 0h1M190 368h1m86 0h1m55 0h1m150 0h1m2 0h1m10 0h1m12 0h1m9 0h1m31 0h1m41 0h1M77 369h1m64 0h1m79 0h1m30 0h1m41 0h1m13 0h1m182 0h1m6 0h1m48 0h1m39 0h1m20 0h1M194 370h1m3 0h1m23 0h1m48 0h1m32 0h1m1 0h1m14 0h1m16 0h1m24 0h1m30 0h1m23 0h1m22 0h1m8 0h1m52 0h1m4 0h1m29 0h1m2 0h1m29 0h1M45 371h1m36 0h1m68 0h1m10 0h1m72 0h1m68 0h1m11 0h1m234 0h1m14 0h1m12 0h1m10 0h1M118 372h1m19 0h1m34 0h1m1 0h1m108 0h1m12 0h1m91 0h1m31 0h1m6 0h1m27 0h1m55 0h1m18 0h1m12 0h1M37 373h1m153 0h1m68 0h1m10 0h1m3 0h1m3 0h1m52 0h1m47 0h1m226 0h1m8 0h1m2 0h1M105 374h1m54 0h1m12 0h1m69 0h1m126 0h1m16 0h1m5 0h1h1m57 0h1m4 0h1h1m1 0h1m155 0h1M31 375h1m20 0h1m69 0h1m69 0h1m29 0h1m36 0h1m29 0h1m83 0h1m13 0h1m15 0h1m99 0h1m3 0h1M112 376h1m30 0h1m8 0h1m129 0h1m1 0h1m37 0h1m38 0h1m50 0h1m42 0h1m54 0h1M23 377h1m22 0h1m81 0h1m50 0h1m193 0h1m6 0h1m32 0h1m161 0h1M181 378h1m54 0h1m30 0h1m49 0h1m119 0h1m28 0h1m73 0h1m10 0h1m27 0h1M103 379h1m28 0h1m14 0h1m7 0h1m127 0h1m2 0h1m1 0h1m8 0h1m12 0h1m51 0h1m97 0h1m35 0h1m10 0h1M35 380h1m140 0h1m14 0h1m32 0h1m24 0h1m15 0h1m22 0h1m14 0h1m23 0h1m38 0h1m4 0h1m26 0h1m13 0h1m10 0h1m19 0h1m30 0h1m27 0h1m6 0h1m14 0h1M141 381h1m45 0h1m42 0h1m53 0h1m79 0h1m30 0h1m100 0h1m7 0h1m26 0h1h1m26 0h1M61 382h1m89 0h1m11 0h1m24 0h1m18 0h1m18 0h1m39 0h1m2 0h1m88 0h1m41 0h1m83 0h1m114 0h1M103 383h1m31 0h1m60 0h1m50 0h1m48 0h1m12 0h1m1 0h1m20 0h1m28 0h1m17 0h1m7 0h1m17 0h1m51 0h1m11 0h1m67 0h1m41 0h1m3 0h1M32 384h1m34 0h1m125 0h1m6 0h1m1 0h1m56 0h1m50 0h1m45 0h1m74 0h1m17 0h1m3 0h1m74 0h1m22 0h1m54 0h1M58 385h1m53 0h1m28 0h1m52 0h1m103 0h1m36 0h1m20 0h1m5 0h1m73 0h1m50 0h1m3 0h1m38 0h1m26 0h1m4 0h1m4 0h1m13 0h1M145 386h1m48 0h1m10 0h1m30 0h1m34 0h1m69 0h1m8 0h1m61 0h1m5 0h1m74 0h1m81 0h1m12 0h1M57 387h1m113 0h1m14 0h1m240 0h1m13 0h1m22 0h1m25 0h1m15 0h1M93 388h1m133 0h1m11 0h1m10 0h1m47 0h1m47 0h1m3 0h1m57 0h1m26 0h1m15 0h1m32 0h1m3 0h1m31 0h1m16 0h1M133 389h1m54 0h1m105 0h1m36 0h1m72 0h1m23 0h1m83 0h1m19 0h1M108 390h1m152 0h1m47 0h1m100 0h1m33 0h1m8 0h1m37 0h1m3 0h1m118 0h1M148 391h1m176 0h1m1 0h1m86 0h1m59 0h1m5 0h1m12 0h1m7 0h1m41 0h1M137 392h1m48 0h1m78 0h1m46 0h1m6 0h1m16 0h1m46 0h1m30 0h1m61 0h1m44 0h1m37 0h1M147 393h1m30 0h1m21 0h1m44 0h1m76 0h1m4 0h1m97 0h1m44 0h1m1 0h1m25 0h1m96 0h1M125 394h1m98 0h1m75 0h1m2 0h1m16 0h1m40 0h1m213 0h1M175 395h1m4 0h1m49 0h1m26 0h1m72 0h1m54 0h1m88 0h1m2 0h1m3 0h1m45 0h1m12 0h1m16 0h1m7 0h1h1m2 0h1M115 396h1m85 0h1m5 0h1m19 0h1m4 0h1m6 0h1m13 0h1m56 0h1m210 0h1m87 0h1M176 397h1m120 0h1m33 0h1m98 0h1m26 0h1m36 0h1m80 0h1M130 398h1m127 0h1m18 0h1m102 0h1m9 0h1m177 0h1m29 0h1M72 399h1m112 0h1m82 0h1m3 0h1m255 0h1m8 0h1" stroke="#000030"/>
<path d="M98 80h1m26 0h1m44 0h1m92 0h1m61 0h1m1 0h1m88 0h1m85 0h1M21 81h1m32 0h1m10 0h1m68 0h1m85 0h1m22 0h1m34 0h1m39 0h1m31 0h1m15 0h1m85 0h1m3 0h1m21 0h1m49 0h1m31 0h1m13 0h1M124 82h1m84 0h1m54 0h1m32 0h1m5 0h1m35 0h1m4 0h1m106 0h1m4 0h1m135 0h1m25 0h1M124 83h1m12 0h1m113 0h1m3 0h1m128 0h1m31 0h1m49 0h1m30 0h1m48 0h1m15 0h1M55 84h1m48 0h1m27 0h1m1 0h1m11 0h1m19 0h1m14 0h1m14 0h1m32 0h1m38 0h1m8 0h1m24 0h1m58 0h1m106 0h1m42 0h1m22 0h1m45 0h1m5 0h1m9 0h1m14 0h1m2 0h1M55 85h1m32 0h1m64 0h1m95 0h1m72 0h1m6 0h1m28 0h1m42 0h1m26 0h1m41 0h1m16 0h1m14 0h1m74 0h1m18 0h1M166 86h1m66 0h1m10 0h1m21 0h1m10 0h1m18 0h1m26 0h1m30 0h1m31 0h1m25 0h1m27 0h1m82 0h1m13 0h1m30 0h1M147 87h1m17 0h1m88 0h1m71 0h1m1 0h1m97 0h1m3 0h1m97 0h1m86 0h1M146 88h1m40 0h1m1 0h1m15 0h1m22 0h1m118 0h1m136 0h1m28 0h1m14 0h1m34 0h1m13 0h1m8 0h1M107 89h1m69 0h1h1m18 0h1m6 0h1m2 0h1m31 0h1m9 0h1m32 0h1m63 0h1m79 0h1m34 0h1m2 0h1m25 0h1m16 0h1m47 0h1M46 90h1m30 0h1m26 0h1m222 0h1m128 0h1m24 0h1m11 0h1m12 0h1m12 0h1m19 0h1m30 0h1m19 0h1M57 91h1m38 0h1m5 0h1m69 0h1m15 0h1m61 0h1m47 0h1m11 0h1m38 0h1m45 0h1m25 0h1m3 0h1m63 0h1m43 0h1m11 0h1M27 92h1m215 0h1m46 0h1m110 0h1m67 0h1m50 0h1m69 0h1M60 93h1m75 0h1m27 0h1m17 0h1m43 0h1m2 0h1m15 0h1m14 0h1m106 0h1m12 0h1m26 0h1m23 0h1m62 0h1m24 0h1m21 0h1M42 94h1m4 0h1m99 0h1m41 0h1m67 0h1m29 0h1m8 0h1m59 0h1m95 0h1m12 0h1m66 0h1m41 0h1m16 0h1M46 95h1m94 0h1m12 0h1m16 0h1m13 0h1m38 0h1m41 0h1m7 0h1m180 0h1m50 0h1m18 0h1m79 0h1h1M25 96h1m84 0h1m35 0h1m31 0h1m5 0h1m119 0h1m82 0h1m50 0h1m18 0h1m15 0h1m34 0h1m27 0h1M27 97h1m23 0h1m76 0h1m39 0h1m66 0h1m28 0h1m201 0h1m1 0h1m24 0h1m40 0h1M142 98h1h1m21 0h1m52 0h1m5 0h1m6 0h1m59 0h1m50 0h1h1m20 0h1m93 0h1m3 0h1m20 0h1m42 0h1m1 0h1m7 0h1m34 0h1m15 0h1m21 0h1M26 99h1m121 0h1m110 0h1m5 0h1m30 0h1m90 0h1m21 0h1m30 0h1m11 0h1m7 0h1m18 0h1m72 0h1m14 0h1h1M135 100h1m43 0h1m25 0h1m1 0h1m134 0h1h1m29 0h1m50 0h1m128 0h1m29 0h1h1m6 0h1M70 101h1m3 0h1m9 0h1m177 0h1m35 0h1m11 0h1m22 0h1m27 0h1m41 0h1m33 0h1m82 0h1m41 0h1m31 0h1M68 102h1m179 0h1m3 0h1m14 0h1m6 0h1m17 0h1m4 0h1m19 0h1m18 0h1m6 0h1m30 0h1m8 0h1m3 0h1m52 0h1m121 0h1M112 103h1m21 0h1m20 0h1m70 0h1m27 0h1m11 0h1m35 0h1m45 0h1m7 0h1m70 0h1h1m7 0h1m13 0h1m32 0h1m23 0h1m15 0h1m65 0h1M54 104h1m39 0h1m25 0h1m17 0h1m38 0h1m7 0h1m39 0h1h1m19 0h1m19 0h1m23 0h1m58 0h1m14 0h1m10 0h1m18 0h1m15 0h1m2 0h1m12 0h1m1 0h1m26 0h1m108 0h1m46 0h1M161 105h1m20 0h1m53 0h1m118 0h1h1m37 0h1m24 0h1m51 0h1m48 0h1m1 0h1m40 0h1m12 0h1m10 0h1M102 106h1m31 0h1m52 0h1m58 0h1m3 0h1m51 0h1m30 0h1m146 0h1m72 0h1m1 0h1m4 0h1m24 0h1M105 107h1m51 0h1m51 0h1m139 0h1m49 0h1m2 0h1m10 0h1m44 0h1m7 0h1m14 0h1m18 0h1m23 0h1m3 0h1m90 0h1M115 108h1m14 0h1m13 0h1m7 0h1m79 0h1m7 0h1m83 0h1m14 0h1m41 0h1m4 0h1m46 0h1m33 0h1m40 0h1m109 0h1M90 109h1m36 0h1m15 0h1m3 0h1h1m6 0h1m7 0h1m71 0h1m17 0h1m19 0h1m4 0h1m6 0h1m56 0h1m8 0h1m12 0h1m21 0h1m24 0h1m8 0h1m27 0h1m1 0h1m6 0h1m19 0h1m8 0h1m79 0h1m5 0h1m9 0h1M125 110h1m86 0h1m54 0h1m27 0h1m21 0h1m59 0h1m4 0h1m7 0h1m13 0h1m1 0h1m84 0h1m4 0h1m9 0h1m37 0h1m16 0h1m36 0h1m6 0h1M50 111h1m41 0h1m96 0h1m2 0h1m45 0h1m26 0h1m31 0h1m52 0h1m60 0h1m2 0h1m10 0h1h1m26 0h1m13 0h1m4 0h1m121 0h1m5 0h1m11 0h1M149 112h1m20 0h1m13 0h1m61 0h1m54 0h1m7 0h1m7 0h1m29 0h1m31 0h1m40 0h1m36 0h1m30 0h1m35 0h1m44 0h1m45 0h1M53 113h1m1 0h1m106 0h1h1m100 0h1m88 0h1m8 0h1m43 0h1m70 0h1m41 0h1m31 0h1M109 114h1m180 0h1m44 0h1m100 0h1m6 0h1h1m69 0h1h1m25 0h1m40 0h1M39 115h1m52 0h1m20 0h1m43 0h1m20 0h1m44 0h1m57 0h1m40 0h1m38 0h1m53 0h1m7 0h1m48 0h1m17 0h1m122 0h1m2 0h1M78 116h1m151 0h1m13 0h1m20 0h1m43 0h1m43 0h1m60 0h1m23 0h1m49 0h1m36 0h1m73 0h1M137 117h1h1m65 0h1m24 0h1m45 0h1m12 0h1m18 0h1m63 0h1m30 0h1m28 0h1m41 0h1m57 0h1m17 0h1m4 0h1m43 0h1M221 118h1m6 0h1m63 0h1m36 0h1m10 0h1m46 0h1m39 0h1m12 0h1m64 0h1m18 0h1m23 0h1m8 0h1m45 0h1m6 0h1M156 119h1m34 0h1m34 0h1m5 0h1m7 0h1m11 0h1m64 0h1m21 0h1m42 0h1m72 0h1m47 0h1m59 0h1m24 0h1M53 120h1m133 0h1m31 0h1m41 0h1m76 0h1m9 0h1m65 0h1m27 0h1m36 0h1M141 121h1m8 0h1m36 0h1m5 0h1m48 0h1m4 0h1m5 0h1m32 0h1m19 0h1h1m17 0h1m19 0h1m24 0h1m15 0h1m43 0h1m8 0h1m30 0h1m9 0h1m9 0h1m77 0h1m16 0h1m27 0h1M67 122h1m138 0h1m12 0h1m2 0h1m59 0h1m74 0h1m26 0h1m27 0h1m21 0h1m1 0h1m34 0h1m33 0h1m37 0h1m1 0h1m3 0h1M129 123h1m29 0h1m76 0h1m21 0h1m6 0h1m37 0h1m38 0h1m7 0h1m149 0h1m13 0h1m3 0h1m4 0h1m70 0h1m8 0h1m2 0h1m11 0h1M20 124h1m25 0h1m92 0h1m11 0h1h1m17 0h1m34 0h1m18 0h1m75 0h1m57 0h1m10 0h1m26 0h1m97 0h1m86 0h1M128 125h1m46 0h1m93 0h1m67 0h1m4 0h1m10 0h1m29 0h1m18 0h1m55 0h1m3 0h1m8 0h1m2 0h1m32 0h1h1m20 0h1m84 0h1M93 126h1m12 0h1m27 0h1m34 0h1m42 0h1m61 0h1m31 0h1m49 0h1m6 0h1m28 0h1m41 0h1m12 0h1m80 0h1m70 0h1m6 0h1M45 127h1m122 0h1m2 0h1m57 0h1m8 0h1m12 0h1m51 0h1m2 0h1m16 0h1m14 0h1m64 0h1m31 0h1m11 0h1m22 0h1m10 0h1m22 0h1h1M95 128h1m53 0h1m67 0h1h1m2 0h1h1m24 0h1m47 0h1m10 0h1m21 0h1m42 0h1m8 0h1m27 0h1m29 0h1m14 0h1m5 0h1m55 0h1m50 0h1M88 129h1m123 0h1m114 0h1m62 0h1m37 0h1m66 0h1m28 0h1m11 0h1m60 0h1M175 130h1m36 0h1m19 0h1m1 0h1m25 0h1m17 0h1m12 0h1m31 0h1m44 0h1m44 0h1m45 0h1m75 0h1m34 0h1m9 0h1m32 0h1M31 131h1m7 0h1m124 0h1m74 0h1m8 0h1m2 0h1m35 0h1m22 0h1m187 0h1m1 0h1m32 0h1m6 0h1m17 0h1m43 0h1M21 132h1m137 0h1m45 0h1m46 0h1m6 0h1m2 0h1m8 0h1m24 0h1m91 0h1m3 0h1m9 0h1m11 0h1m7 0h1m19 0h1m23 0h1m56 0h1m12 0h1m6 0h1m11 0h1m11 0h1m8 0h1M214 133h1m48 0h1m90 0h1m52 0h1m18 0h1m8 0h1m39 0h1m15 0h1m32 0h1m44 0h1M46 134h1m67 0h1m119 0h1m226 0h1m22 0h1m25 0h1m25 0h1h1m3 0h1m3 0h1h1m4 0h1h1m55 0h1m4 0h1M56 135h1m31 0h1m74 0h1m137 0h1m14 0h1m40 0h1m66 0h1m2 0h1m22 0h1m48 0h1M149 136h1m38 0h1m3 0h1m62 0h1m84 0h1m37 0h1m35 0h1m11 0h1m29 0h1m46 0h1m30 0h1M21 137h1m24 0h1m115 0h1m4 0h1m3 0h1m16 0h1m33 0h1m6 0h1m41 0h1m6 0h1m37 0h1m11 0h1m48 0h1m31 0h1m163 0h1m17 0h1M250 138h1m26 0h1h1m94 0h1m53 0h1m22 0h1m12 0h1m75 0h1m52 0h1M59 139h1m94 0h1m4 0h1m331 0h1m4 0h1m15 0h1m9 0h1m17 0h1M143 140h1m12 0h1m7 0h1m161 0h1m132 0h1m37 0h1m31 0h1m9 0h1m22 0h1M37 141h1m175 0h1m98 0h1m42 0h1m81 0h1m31 0h1m34 0h1m35 0h1m41 0h1m9 0h1M40 142h1m93 0h1m59 0h1m22 0h1m175 0h1m17 0h1m23 0h1m19 0h1m45 0h1m28 0h1m17 0h1M155 143h1m62 0h1m192 0h1m24 0h1m65 0h1m12 0h1m42 0h1m11 0h1m29 0h1M142 144h1m4 0h1m79 0h1m2 0h1h1m23 0h1m21 0h1m46 0h1m38 0h1m77 0h1m28 0h1m38 0h1h1m23 0h1m5 0h1m11 0h1m63 0h1M40 145h1m104 0h1m1 0h1m29 0h1m45 0h1m10 0h1m44 0h1m29 0h1m64 0h1m56 0h1m37 0h1m1 0h1m46 0h1m5 0h1m29 0h1m56 0h1M195 146h1m51 0h1m17 0h1m19 0h1m25 0h1m11 0h1m8 0h1m82 0h1m28 0h1m25 0h1m46 0h1m26 0h1m18 0h1m2 0h1m18 0h1m26 0h1h1M58 147h1m7 0h1m24 0h1m18 0h1m46 0h1m8 0h1m5 0h1m16 0h1m32 0h1m63 0h1m36 0h1m68 0h1m91 0h1m11 0h1m4 0h1M95 148h1m119 0h1m19 0h1m22 0h1m76 0h1m11 0h1m13 0h1m41 0h1m29 0h1m9 0h1m66 0h1m41 0h1m36 0h1M42 149h1m61 0h1m18 0h1m34 0h1m186 0h1m52 0h1m6 0h1m22 0h1m8 0h1m6 0h1m122 0h1m4 0h1M91 150h1m93 0h1m149 0h1m60 0h1m112 0h1m4 0h1m15 0h1m52 0h1m9 0h1m6 0h1M103 151h1m66 0h1m110 0h1m167 0h1m34 0h1m4 0h1m62 0h1m41 0h1m4 0h1M159 152h1m82 0h1m84 0h1h1m4 0h1m111 0h1m12 0h1h1m60 0h1h1m3 0h1M69 153h1m156 0h1m20 0h1m38 0h1m22 0h1m30 0h1m17 0h1m26 0h1m45 0h1m33 0h1m7 0h1m38 0h1m2 0h1m74 0h1m8 0h1M25 154h1m20 0h1m39 0h1m102 0h1m5 0h1m14 0h1m6 0h1m29 0h1h1m2 0h1m38 0h1m23 0h1m35 0h1m44 0h1m8 0h1h1h1h1m3 0h1m6 0h1m6 0h1m11 0h1m31 0h1m36 0h1m5 0h1m5 0h1m3 0h1m68 0h1M166 155h1m115 0h1m58 0h1m11 0h1m10 0h1m74 0h1m17 0h1m3 0h1m71 0h1m13 0h1m19 0h1M41 156h1m55 0h1m132 0h1m1 0h1m102 0h1m11 0h1m5 0h1m24 0h1m40 0h1m56 0h1m110 0h1M88 157h1m130 0h1m23 0h1m7 0h1h1m77 0h1m58 0h1m30 0h1m2 0h1m40 0h1m40 0h1m78 0h1m1 0h1M158 158h1m94 0h1m18 0h1m55 0h1m23 0h1m110 0h1m72 0h1m61 0h1m2 0h1M52 159h1m8 0h1m20 0h1m64 0h1m68 0h1m21 0h1m56 0h1m36 0h1m9 0h1m43 0h1m15 0h1m6 0h1m24 0h1m29 0h1m33 0h1m98 0h1M26 160h1m31 0h1m82 0h1m181 0h1m13 0h1m8 0h1m20 0h1m32 0h1m32 0h1m13 0h1m41 0h1m3 0h1m56 0h1m15 0h1M50 161h1m56 0h1m83 0h1m33 0h1m26 0h1m48 0h1m7 0h1m131 0h1m15 0h1m66 0h1m26 0h1M135 162h1m57 0h1m140 0h1m2 0h1m5 0h1m91 0h1m1 0h1m3 0h1m23 0h1m8 0h1m30 0h1m37 0h1m12 0h1M119 163h1m8 0h1m39 0h1m8 0h1m6 0h1m2 0h1m6 0h1m28 0h1m5 0h1m12 0h1m25 0h1m48 0h1m43 0h1m93 0h1m7 0h1m107 0h1m30 0h1M41 164h1m177 0h1m12 0h1m88 0h1m17 0h1m24 0h1m56 0h1m2 0h1m18 0h1m33 0h1m5 0h1m8 0h1m24 0h1m2 0h1m78 0h1m10 0h1m6 0h1M113 165h1m42 0h1m2 0h1m31 0h1m32 0h1m3 0h1m38 0h1m74 0h1m53 0h1m9 0h1m28 0h1h1m43 0h1m11 0h1m28 0h1m41 0h1M35 166h1m54 0h1m38 0h1m19 0h1m14 0h1m65 0h1m34 0h1m147 0h1m4 0h1m15 0h1m7 0h1m22 0h1m49 0h1m23 0h1M127 167h1m12 0h1m26 0h1m6 0h1m57 0h1m18 0h1m67 0h1m33 0h1m35 0h1m25 0h1m26 0h1m23 0h1m26 0h1m4 0h1m9 0h1m3 0h1m58 0h1m2 0h1m13 0h1m21 0h1M133 168h1m45 0h1m13 0h1m18 0h1m102 0h1m82 0h1m39 0h1m51 0h1m16 0h1m40 0h1m32 0h1M154 169h1m55 0h1m42 0h1m4 0h1m101 0h1m12 0h1m7 0h1m87 0h1M40 170h1m9 0h1m85 0h1m105 0h1m51 0h1m122 0h1m33 0h1m90 0h1m15 0h1m5 0h1M90 171h1m136 0h1m5 0h1m29 0h1m39 0h1m74 0h1m18 0h1m61 0h1m56 0h1m44 0h1m18 0h1m30 0h1M173 172h1m75 0h1m148 0h1m58 0h1m34 0h1m17 0h1m11 0h1m17 0h1m10 0h1M25 173h1m143 0h1m9 0h1m47 0h1m28 0h1m20 0h1m30 0h1m87 0h1m33 0h1m124 0h1m47 0h1h1M34 174h1m28 0h1m2 0h1m190 0h1m15 0h1m15 0h1m16 0h1m37 0h1m29 0h1m27 0h1m32 0h1m9 0h1m90 0h1m15 0h1m34 0h1m9 0h1m7 0h1M58 175h1m64 0h1m96 0h1m27 0h1m3 0h1m36 0h1m25 0h1m9 0h1m8 0h1m53 0h1m22 0h1m130 0h1m1 0h1m8 0h1M237 176h1m37 0h1m6 0h1m85 0h1m9 0h1m130 0h1m18 0h1m8 0h1m72 0h1M61 177h1m184 0h1m20 0h1m14 0h1h1m77 0h1m83 0h1m66 0h1m94 0h1M92 178h1m76 0h1m27 0h1m21 0h1m3 0h1m6 0h1m15 0h1m42 0h1m1 0h1m3 0h1m76 0h1m71 0h1m39 0h1m45 0h1m26 0h1m3 0h1m42 0h1M159 179h1m74 0h1m106 0h1m48 0h1m55 0h1m47 0h1m55 0h1m43 0h1m20 0h1M108 180h1m35 0h1m49 0h1m41 0h1m46 0h1m236 0h1M24 181h1m94 0h1m9 0h1m47 0h1m5 0h1m7 0h1m5 0h1m35 0h1m3 0h1m68 0h1m32 0h1m14 0h1m20 0h1m76 0h1m115 0h1m18 0h1M52 182h1m59 0h1m11 0h1h1m28 0h1m12 0h1m29 0h1m16 0h1m23 0h1m27 0h1m14 0h1m9 0h1m39 0h1m24 0h1m12 0h1m5 0h1m13 0h1m72 0h1h1m1 0h1m19 0h1m6 0h1m22 0h1M23 183h1m150 0h1m75 0h1m12 0h1m108 0h1m17 0h1m3 0h1m58 0h1m68 0h1m36 0h1M124 184h1m30 0h1m37 0h1m18 0h1m148 0h1m22 0h1m19 0h1m5 0h1m65 0h1m37 0h1m42 0h1m28 0h1M42 185h1m28 0h1m21 0h1h1m52 0h1m22 0h1m19 0h1m29 0h1m72 0h1m16 0h1m48 0h1m20 0h1h1m102 0h1m4 0h1m55 0h1m7 0h1m59 0h1M20 186h1m16 0h1m7 0h1m1 0h1m129 0h1m61 0h1m52 0h1m31 0h1m77 0h1m70 0h1M51 187h1m98 0h1m39 0h1m61 0h1m1 0h1m12 0h1m32 0h1m7 0h1m2 0h1m27 0h1m34 0h1m8 0h1m11 0h1m34 0h1m42 0h1m12 0h1m21 0h1m18 0h1m7 0h1m33 0h1m13 0h1m12 0h1m4 0h1M145 188h1m161 0h1m51 0h1h1m56 0h1m1 0h1m8 0h1m15 0h1m71 0h1m19 0h1m8 0h1m10 0h1m61 0h1M82 189h1m3 0h1m137 0h1m5 0h1m17 0h1m37 0h1m6 0h1m2 0h1m15 0h1m5 0h1m33 0h1m50 0h1m6 0h1m1 0h1m85 0h1m24 0h1m6 0h1m44 0h1M72 190h1m64 0h1m8 0h1m30 0h1m32 0h1m3 0h1m58 0h1m82 0h1m37 0h1m189 0h1m3 0h1m16 0h1m9 0h1M157 191h1m8 0h1m59 0h1m18 0h1m4 0h1m20 0h1m1 0h1m4 0h1m20 0h1m7 0h1m54 0h1m52 0h1m43 0h1m4 0h1m24 0h1m88 0h1m17 0h1M150 192h1h1m2 0h1m15 0h1m4 0h1m54 0h1m19 0h1m76 0h1m53 0h1m50 0h1m27 0h1m1 0h1m5 0h1m9 0h1m40 0h1m41 0h1M179 193h1m29 0h1m16 0h1m5 0h1m123 0h1m52 0h1m56 0h1m5 0h1m4 0h1m10 0h1m25 0h1m9 0h1m24 0h1m47 0h1m7 0h1m1 0h1M136 194h1m23 0h1m11 0h1m137 0h1m74 0h1m1 0h1m11 0h1m35 0h1m71 0h1m27 0h1m26 0h1M143 195h1m179 0h1m77 0h1m7 0h1m13 0h1m55 0h1m12 0h1m62 0h1m40 0h1M103 196h1m85 0h1m7 0h1m22 0h1m21 0h1m7 0h1m171 0h1m33 0h1m66 0h1m15 0h1m41 0h1M291 197h1m31 0h1m82 0h1m43 0h1m24 0h1m103 0h1m13 0h1m8 0h1M123 198h1m18 0h1m39 0h1m73 0h1m47 0h1m12 0h1m18 0h1m29 0h1m22 0h1m119 0h1m3 0h1m13 0h1m81 0h1M103 199h1m38 0h1m13 0h1m36 0h1m66 0h1m62 0h1m49 0h1m37 0h1m1 0h1m3 0h1m53 0h1m51 0h1m23 0h1m3 0h1m66 0h1M140 200h1m30 0h1m59 0h1m55 0h1m122 0h1m18 0h1m57 0h1m23 0h1m14 0h1m82 0h1h1M130 201h1m18 0h1m9 0h1m27 0h1m48 0h1m30 0h1m64 0h1m119 0h1m91 0h1m59 0h1M43 202h1m8 0h1m89 0h1m38 0h1m37 0h1m3 0h1m14 0h1m32 0h1m32 0h1m24 0h1m15 0h1m57 0h1m7 0h1m13 0h1m87 0h1m28 0h1m57 0h1h1M81 203h1m50 0h1m46 0h1m29 0h1m41 0h1m12 0h1m27 0h1m3 0h1m6 0h1m37 0h1m89 0h1m28 0h1m21 0h1m44 0h1m15 0h1M164 204h1m15 0h1m8 0h1m52 0h1m178 0h1m29 0h1m17 0h1m37 0h1m4 0h1m26 0h1m1 0h1m18 0h1m12 0h1M68 205h1m73 0h1m7 0h1m8 0h1m4 0h1m7 0h1m12 0h1m24 0h1m7 0h1m12 0h1m60 0h1m3 0h1m7 0h1m19 0h1m24 0h1m9 0h1m4 0h1m4 0h1m57 0h1m95 0h1m14 0h1m5 0h1M68 206h1m61 0h1m2 0h1m56 0h1m21 0h1m28 0h1m41 0h1m13 0h1m6 0h1m3 0h1m3 0h1m12 0h1m5 0h1m4 0h1m9 0h1m68 0h1m49 0h1m63 0h1m70 0h1M33 207h1m61 0h1m35 0h1m105 0h1m18 0h1m9 0h1m38 0h1m72 0h1m120 0h1m103 0h1M122 208h1m64 0h1m22 0h1m36 0h1m6 0h1m50 0h1m38 0h1m44 0h1m54 0h1m69 0h1m34 0h1m6 0h1m5 0h1m32 0h1M97 209h1m35 0h1m95 0h1h1m13 0h1m28 0h1m10 0h1m50 0h1m79 0h1h1m63 0h1m1 0h1m22 0h1m77 0h1M119 210h1m17 0h1m5 0h1m128 0h1m55 0h1m54 0h1m7 0h1h1m20 0h1m14 0h1m60 0h1m24 0h1m8 0h1m27 0h1m1 0h1m33 0h1M24 211h1m117 0h1m56 0h1m106 0h1m1 0h1m69 0h1m32 0h1h1m12 0h1h1m10 0h1m4 0h1m29 0h1h1m13 0h1m22 0h1m2 0h1m15 0h1m47 0h1m22 0h1M70 212h1m140 0h1m43 0h1m53 0h1m18 0h1m33 0h1m20 0h1m1 0h1m22 0h1m26 0h1m7 0h1m3 0h1m28 0h1m5 0h1m13 0h1m2 0h1m16 0h1m12 0h1m11 0h1m7 0h1m17 0h1m33 0h1m10 0h1M29 213h1m245 0h1m39 0h1m102 0h1m27 0h1m71 0h1m15 0h1m35 0h1m6 0h1M90 214h1m64 0h1m9 0h1m12 0h1m46 0h1m38 0h1m7 0h1m9 0h1m23 0h1m15 0h1m100 0h1m21 0h1m116 0h1M62 215h1m20 0h1m92 0h1m19 0h1m66 0h1m71 0h1m43 0h1m112 0h1m68 0h1M23 216h1m81 0h1m10 0h1m131 0h1m4 0h1m34 0h1m45 0h1m13 0h1m68 0h1m45 0h1m17 0h1m43 0h1m14 0h1m36 0h1m37 0h1M108 217h1m50 0h1m54 0h1m24 0h1m4 0h1m12 0h1m119 0h1m8 0h1m4 0h1m18 0h1m37 0h1m103 0h1m66 0h1M132 218h1m13 0h1m36 0h1m38 0h1m52 0h1m38 0h1m46 0h1m56 0h1m61 0h1m38 0h1m56 0h1M125 219h1m72 0h1m144 0h1m97 0h1m36 0h1m10 0h1m39 0h1m14 0h1m29 0h1m3 0h1m5 0h1m26 0h1M48 220h1m71 0h1m5 0h1m11 0h1m15 0h1m4 0h1m56 0h1m5 0h1m91 0h1m6 0h1m12 0h1m27 0h1m8 0h1m104 0h1m33 0h1m5 0h1m32 0h1m26 0h1m1 0h1m3 0h1m5 0h1m2 0h1M188 221h1m35 0h1m4 0h1m123 0h1m33 0h1m5 0h1m40 0h1h1m84 0h1m57 0h1m6 0h1m18 0h1m5 0h1M44 222h1m89 0h1m31 0h1m21 0h1m26 0h1m55 0h1m55 0h1m9 0h1m18 0h1m30 0h1m167 0h1m29 0h1m30 0h1M40 223h1m20 0h1m58 0h1m77 0h1m28 0h1m46 0h1m20 0h1m34 0h1m17 0h1m29 0h1m5 0h1m22 0h1m43 0h1m10 0h1m40 0h1m44 0h1m16 0h1m17 0h1m12 0h1m10 0h1M103 224h1m31 0h1m46 0h1m62 0h1m21 0h1m50 0h1m43 0h1m3 0h1m9 0h1m9 0h1m59 0h1m4 0h1m48 0h1M129 225h1m13 0h1m117 0h1m15 0h1m55 0h1m42 0h1m1 0h1m19 0h1m74 0h1m3 0h1m30 0h1m3 0h1m87 0h1m10 0h1M160 226h1m19 0h1m58 0h1m56 0h1m21 0h1m5 0h1m44 0h1m48 0h1h1m23 0h1m19 0h1m135 0h1M148 227h1m138 0h1m21 0h1m68 0h1h1m42 0h1m21 0h1m4 0h1m28 0h1m48 0h1m10 0h1m2 0h1m51 0h1m13 0h1M24 228h1m193 0h1m5 0h1m10 0h1m28 0h1m44 0h1m2 0h1m18 0h1m38 0h1m39 0h1m43 0h1m15 0h1m15 0h1m24 0h1M171 229h1m10 0h1m41 0h1m20 0h1m15 0h1m75 0h1m158 0h1m5 0h1m31 0h1M46 230h1m23 0h1m2 0h1m79 0h1m11 0h1m33 0h1m98 0h1m51 0h1m30 0h1m28 0h1m23 0h1m12 0h1m100 0h1m32 0h1m16 0h1m6 0h1M32 231h1m75 0h1m13 0h1m24 0h1m64 0h1m79 0h1m2 0h1m24 0h1m21 0h1m51 0h1m44 0h1m18 0h1m48 0h1m39 0h1m3 0h1m32 0h1m24 0h1M172 232h1m69 0h1m144 0h1m52 0h1m13 0h1m26 0h1m34 0h1m18 0h1m9 0h1m12 0h1m26 0h1M172 233h1m2 0h1m39 0h1m19 0h1m6 0h1m67 0h1m23 0h1m1 0h1m61 0h1m29 0h1h1m53 0h1m46 0h1m27 0h1m10 0h1m10 0h1m21 0h1h1M154 234h1m14 0h1m3 0h1m2 0h1m99 0h1m16 0h1m41 0h1m172 0h1m40 0h1M41 235h1m57 0h1m58 0h1m85 0h1h1m1 0h1m67 0h1m46 0h1m52 0h1m32 0h1h1m33 0h1m32 0h1m63 0h1M52 236h1m93 0h1m154 0h1h1m10 0h1m80 0h1m14 0h1m80 0h1m20 0h1m87 0h1m1 0h1M51 237h1m8 0h1m111 0h1m50 0h1m241 0h1m37 0h1m79 0h1M108 238h1m153 0h1m27 0h1m40 0h1m29 0h1m8 0h1m3 0h1m22 0h1m56 0h1m25 0h1m23 0h1m63 0h1M42 239h1m145 0h1m2 0h1m147 0h1m43 0h1m11 0h1m86 0h1m26 0h1M112 240h1m33 0h1m30 0h1h1m94 0h1m29 0h1m33 0h1m6 0h1m2 0h1h1h1m8 0h1m6 0h1m24 0h1m19 0h1m22 0h1m36 0h1m1 0h1m17 0h1m36 0h1h1m22 0h1m17 0h1m10 0h1m11 0h1M218 241h1m92 0h1m7 0h1m10 0h1m1 0h1m9 0h1m10 0h1m26 0h1m57 0h1m8 0h1m29 0h1m4 0h1M115 242h1m7 0h1m18 0h1m14 0h1m35 0h1m150 0h1m36 0h1m16 0h1m60 0h1m11 0h1M33 243h1m58 0h1m120 0h1m54 0h1m12 0h1m60 0h1m25 0h1m53 0h1m77 0h1m31 0h1m49 0h1M164 244h1m86 0h1m97 0h1m5 0h1m88 0h1m20 0h1m11 0h1m26 0h1M146 245h1m105 0h1m24 0h1m44 0h1h1m56 0h1m39 0h1m47 0h1m3 0h1m3 0h1m38 0h1M41 246h1m6 0h1m61 0h1m5 0h1m106 0h1m35 0h1m2 0h1m69 0h1m75 0h1m22 0h1m72 0h1m17 0h1m2 0h1m35 0h1m47 0h1M38 247h1m104 0h1m48 0h1m21 0h1m10 0h1m34 0h1m41 0h1m62 0h1m165 0h1m1 0h1m23 0h1m24 0h1M66 248h1m16 0h1m117 0h1m27 0h1m28 0h1m42 0h1m39 0h1m157 0h1m7 0h1m25 0h1m16 0h1M44 249h1m44 0h1m65 0h1m2 0h1m40 0h1m19 0h1m43 0h1h1m61 0h1m25 0h1h1m39 0h1m39 0h1m7 0h1m54 0h1m20 0h1m53 0h1M226 250h1m29 0h1m126 0h1m130 0h1M150 251h1m1 0h1m120 0h1m39 0h1m169 0h1h1m39 0h1m71 0h1M41 252h1m83 0h1m127 0h1m17 0h1m140 0h1m96 0h1M49 253h1m92 0h1m31 0h1m11 0h1m54 0h1m9 0h1m57 0h1m34 0h1m5 0h1m23 0h1m133 0h1m33 0h1m32 0h1M200 254h1m47 0h1m1 0h1m16 0h1m3 0h1m15 0h1m5 0h1m81 0h1m39 0h1m146 0h1M89 255h1m64 0h1m24 0h1m16 0h1m16 0h1m54 0h1m10 0h1m42 0h1m35 0h1m2 0h1m100 0h1m22 0h1m32 0h1m94 0h1m2 0h1M106 256h1m58 0h1m31 0h1m2 0h1m15 0h1m84 0h1m10 0h1m35 0h1m27 0h1m49 0h1m51 0h1m8 0h1m28 0h1m19 0h1M142 257h1m86 0h1m59 0h1m27 0h1m14 0h1m20 0h1m2 0h1m9 0h1m63 0h1m42 0h1m10 0h1m4 0h1m1 0h1m20 0h1m45 0h1m5 0h1M171 258h1m266 0h1m4 0h1m141 0h1M26 259h1m13 0h1m11 0h1m92 0h1m56 0h1m44 0h1m25 0h1m4 0h1m21 0h1m31 0h1m40 0h1m118 0h1m46 0h1h1m57 0h1M59 260h1m71 0h1m19 0h1m3 0h1m135 0h1m9 0h1m15 0h1m24 0h1m54 0h1m87 0h1m3 0h1m33 0h1M54 261h1m43 0h1m99 0h1m21 0h1m65 0h1m45 0h1m14 0h1m29 0h1m84 0h1m14 0h1m37 0h1m58 0h1m11 0h1m7 0h1M47 262h1m30 0h1m10 0h1m84 0h1m67 0h1m17 0h1m37 0h1m47 0h1m108 0h1m129 0h1M203 263h1m187 0h1m27 0h1m111 0h1m4 0h1m2 0h1m75 0h1M24 264h1m152 0h1m36 0h1m17 0h1m19 0h1m22 0h1m26 0h1m71 0h1m5 0h1m180 0h1m13 0h1m21 0h1M39 265h1m179 0h1m70 0h1m3 0h1m48 0h1m12 0h1m3 0h1m45 0h1m11 0h1M73 266h1m92 0h1m72 0h1m11 0h1m24 0h1m87 0h1m20 0h1m18 0h1m13 0h1m12 0h1m33 0h1m22 0h1m18 0h1m15 0h1m46 0h1m18 0h1M114 267h1h1m17 0h1m19 0h1m153 0h1m36 0h1m25 0h1m36 0h1m45 0h1m4 0h1m7 0h1m23 0h1m4 0h1m23 0h1m10 0h1m32 0h1M136 268h1m199 0h1m65 0h1m145 0h1m46 0h1h1M82 269h1m95 0h1m6 0h1m13 0h1m21 0h1m45 0h1m81 0h1m9 0h1m45 0h1m30 0h1m69 0h1m4 0h1m42 0h1m14 0h1M82 270h1m11 0h1m5 0h1m29 0h1m38 0h1m208 0h1m18 0h1m28 0h1m18 0h1m63 0h1m12 0h1m29 0h1m1 0h1m38 0h1M190 271h1m42 0h1m29 0h1m84 0h1m63 0h1m33 0h1m68 0h1m3 0h1h1m16 0h1m10 0h1m12 0h1m42 0h1m1 0h1M60 272h1m84 0h1m27 0h1m8 0h1m14 0h1m130 0h1m46 0h1m72 0h1m68 0h1m42 0h1m51 0h1M20 273h1m84 0h1m55 0h1m4 0h1m99 0h1m10 0h1m21 0h1m46 0h1m2 0h1m6 0h1m20 0h1m15 0h1m5 0h1m115 0h1m38 0h1m53 0h1M102 274h1m20 0h1m101 0h1m3 0h1m15 0h1m40 0h1m6 0h1m13 0h1m9 0h1m43 0h1m43 0h1m26 0h1m78 0h1m48 0h1m1 0h1h1M64 275h1m16 0h1m135 0h1m28 0h1m22 0h1m59 0h1m75 0h1m7 0h1h1m4 0h1m16 0h1m18 0h1m47 0h1m18 0h1m23 0h1m71 0h1M146 276h1m12 0h1m8 0h1m18 0h1m7 0h1m31 0h1m5 0h1m16 0h1m68 0h1m11 0h1m16 0h1m10 0h1m46 0h1m19 0h1m51 0h1m49 0h1m38 0h1m17 0h1M78 277h1m58 0h1m10 0h1m184 0h1m25 0h1m22 0h1m14 0h1m12 0h1m26 0h1m14 0h1m28 0h1M38 278h1m8 0h1m129 0h1m10 0h1m64 0h1m79 0h1h1m181 0h1m19 0h1m2 0h1m22 0h1m10 0h1m7 0h1m16 0h1M78 279h1m33 0h1m47 0h1m17 0h1m22 0h1m33 0h1m4 0h1m54 0h1m76 0h1m23 0h1m118 0h1m19 0h1m22 0h1m44 0h1m5 0h1m7 0h1M50 280h1m99 0h1m1 0h1m107 0h1m36 0h1m39 0h1m46 0h1m16 0h1m35 0h1m45 0h1m46 0h1M40 281h1m9 0h1m37 0h1m45 0h1m64 0h1m129 0h1m22 0h1m42 0h1m27 0h1m43 0h1m116 0h1M39 282h1m17 0h1h1m243 0h1m25 0h1m68 0h1m145 0h1m19 0h1M27 283h1m41 0h1m55 0h1m17 0h1m33 0h1m67 0h1m22 0h1m28 0h1m165 0h1h1m24 0h1m4 0h1m123 0h1M198 284h1m54 0h1m2 0h1m32 0h1m139 0h1m55 0h1m69 0h1m8 0h1m7 0h1m40 0h1M167 285h1m52 0h1m34 0h1m11 0h1m85 0h1m7 0h1m23 0h1m8 0h1M38 286h1m3 0h1m116 0h1m28 0h1m84 0h1m86 0h1m2 0h1m32 0h1h1m92 0h1m3 0h1m15 0h1m13 0h1m13 0h1m11 0h1m4 0h1M62 287h1m29 0h1m18 0h1m43 0h1m25 0h1m66 0h1m45 0h1m24 0h1m37 0h1m12 0h1m35 0h1m24 0h1h1m17 0h1m44 0h1m1 0h1m6 0h1M88 288h1m40 0h1m119 0h1m78 0h1m23 0h1m79 0h1m9 0h1m31 0h1m81 0h1M289 289h1m65 0h1m22 0h1m11 0h1m32 0h1m33 0h1m16 0h1M47 290h1m108 0h1m81 0h1m24 0h1m54 0h1m19 0h1m10 0h1m20 0h1m24 0h1m1 0h1m107 0h1m2 0h1m31 0h1m17 0h1m14 0h1m26 0h1h1M66 291h1m68 0h1m15 0h1m35 0h1m38 0h1m101 0h1m16 0h1m60 0h1m51 0h1m36 0h1m11 0h1m7 0h1m46 0h1m32 0h1M43 292h1m127 0h1m5 0h1m8 0h1m16 0h1m37 0h1m68 0h1m5 0h1m80 0h1m22 0h1m46 0h1m56 0h1m17 0h1m25 0h1m15 0h1m2 0h1M25 293h1m23 0h1m114 0h1m5 0h1m20 0h1m149 0h1m17 0h1m1 0h1m79 0h1m36 0h1m53 0h1M67 294h1m4 0h1m16 0h1m30 0h1m31 0h1m20 0h1m14 0h1m41 0h1m44 0h1m20 0h1h1m97 0h1m17 0h1m36 0h1m3 0h1m98 0h1M44 295h1m36 0h1m97 0h1m43 0h1m20 0h1m56 0h1m14 0h1m35 0h1m105 0h1m40 0h1m1 0h1m18 0h1m10 0h1m15 0h1m69 0h1M73 296h1m41 0h1m19 0h1m1 0h1m53 0h1m43 0h1m16 0h1m9 0h1m44 0h1m19 0h1m138 0h1m33 0h1m36 0h1m70 0h1m8 0h1h1M143 297h1m29 0h1m2 0h1m9 0h1m32 0h1m57 0h1m6 0h1m18 0h1m21 0h1m9 0h1m6 0h1m64 0h1m17 0h1m59 0h1m107 0h1m6 0h1m1 0h1m3 0h1M147 298h1m21 0h1m4 0h1m14 0h1m1 0h1m91 0h1m19 0h1m18 0h1m20 0h1m18 0h1m33 0h1m8 0h1m89 0h1m36 0h1m50 0h1m5 0h1m21 0h1M29 299h1m107 0h1m102 0h1m3 0h1m9 0h1m114 0h1m19 0h1m3 0h1m8 0h1m20 0h1m5 0h1m19 0h1m49 0h1m5 0h1m95 0h1M39 300h1m1 0h1m88 0h1m2 0h1m11 0h1m25 0h1m47 0h1m40 0h1m12 0h1m22 0h1m72 0h1m89 0h1m130 0h1m3 0h1M132 301h1m66 0h1m24 0h1m3 0h1m23 0h1m49 0h1m20 0h1m39 0h1m23 0h1m34 0h1m7 0h1m1 0h1m76 0h1m35 0h1h1m9 0h1m20 0h1M113 302h1m38 0h1m28 0h1m49 0h1m5 0h1m25 0h1m25 0h1m56 0h1m20 0h1m3 0h1m56 0h1m2 0h1m18 0h1m8 0h1m10 0h1m24 0h1m19 0h1m1 0h1m26 0h1m67 0h1M142 303h1m74 0h1m46 0h1m52 0h1m30 0h1m42 0h1m9 0h1m37 0h1m106 0h1m66 0h1M88 304h1m59 0h1m76 0h1m14 0h1m6 0h1m42 0h1m39 0h1m20 0h1m7 0h1m18 0h1m57 0h1m8 0h1m56 0h1m17 0h1m19 0h1m12 0h1m33 0h1M68 305h1m65 0h1m29 0h1m37 0h1m85 0h1m25 0h1m8 0h1m33 0h1m66 0h1m16 0h1m93 0h1M109 306h1m67 0h1m18 0h1m26 0h1m24 0h1m12 0h1m41 0h1m29 0h1m120 0h1m162 0h1M163 307h1m2 0h1m27 0h1m61 0h1m8 0h1m100 0h1m43 0h1m6 0h1m115 0h1m48 0h1m16 0h1m8 0h1M75 308h1m3 0h1m9 0h1m7 0h1m44 0h1m20 0h1m34 0h1m7 0h1m14 0h1h1m2 0h1m22 0h1m121 0h1m26 0h1m26 0h1m17 0h1m12 0h1m25 0h1m3 0h1m87 0h1m5 0h1h1m5 0h1m30 0h1M110 309h1m76 0h1m7 0h1m8 0h1m84 0h1m71 0h1m40 0h1m3 0h1m49 0h1m29 0h1m79 0h1M120 310h1m127 0h1m3 0h1m16 0h1h1m9 0h1m71 0h1m36 0h1m6 0h1m23 0h1m32 0h1m11 0h1m10 0h1m35 0h1m34 0h1m63 0h1M43 311h1m59 0h1m68 0h1m20 0h1m49 0h1m313 0h1m27 0h1h1m11 0h1M129 312h1m12 0h1m55 0h1m42 0h1m2 0h1m16 0h1m46 0h1m2 0h1m9 0h1m89 0h1m148 0h1m11 0h1M37 313h1m61 0h1m56 0h1m79 0h1m54 0h1m30 0h1m100 0h1m44 0h1m59 0h1m67 0h1M54 314h1m86 0h1m24 0h1m67 0h1m68 0h1m64 0h1m106 0h1m43 0h1m97 0h1M37 315h1m8 0h1m85 0h1m23 0h1m4 0h1m18 0h1m4 0h1m7 0h1m12 0h1m38 0h1m49 0h1m83 0h1m29 0h1m17 0h1m1 0h1m8 0h1m48 0h1m2 0h1m43 0h1m59 0h1m12 0h1M71 316h1m30 0h1m118 0h1m100 0h1m1 0h1m13 0h1m23 0h1m38 0h1m2 0h1m89 0h1m99 0h1h1M64 317h1m152 0h1m14 0h1m11 0h1m11 0h1m31 0h1m26 0h1m131 0h1m15 0h1m41 0h1m30 0h1m2 0h1m4 0h1m31 0h1M116 318h1m16 0h1m34 0h1m5 0h1m106 0h1m10 0h1m75 0h1m46 0h1m2 0h1m10 0h1m7 0h1h1m24 0h1m28 0h1m29 0h1m90 0h1M37 319h1m97 0h1m27 0h1m23 0h1m3 0h1m37 0h1m3 0h1m10 0h1m163 0h1m43 0h1m22 0h1m43 0h1m68 0h1m6 0h1m11 0h1M200 320h1m5 0h1m12 0h1m13 0h1m18 0h1m29 0h1m95 0h1m1 0h1m5 0h1m13 0h1M32 321h1m27 0h1m91 0h1m160 0h1m27 0h1m21 0h1m57 0h1m8 0h1m3 0h1h1m3 0h1m1 0h1m43 0h1m28 0h1m6 0h1M102 322h1m89 0h1m30 0h1m77 0h1h1m15 0h1m41 0h1m102 0h1m98 0h1m38 0h1M144 323h1m14 0h1m24 0h1m53 0h1m13 0h1m26 0h1m5 0h1h1m56 0h1m40 0h1m120 0h1m30 0h1m11 0h1m13 0h1m13 0h1m15 0h1M95 324h1m67 0h1m26 0h1m76 0h1m19 0h1m35 0h1m9 0h1m56 0h1m12 0h1m61 0h1M46 325h1m129 0h1m10 0h1m2 0h1m27 0h1m34 0h1m86 0h1m39 0h1m65 0h1m25 0h1m7 0h1m58 0h1m10 0h1m68 0h1M168 326h1m18 0h1m4 0h1m4 0h1m20 0h1m51 0h1m99 0h1m135 0h1m40 0h1m19 0h1M107 327h1m32 0h1m37 0h1m39 0h1m9 0h1m35 0h1m54 0h1m5 0h1m35 0h1m6 0h1m39 0h1m66 0h1m28 0h1m78 0h1m26 0h1M140 328h1m20 0h1m2 0h1m21 0h1m129 0h1m31 0h1m40 0h1m4 0h1m20 0h1m31 0h1m61 0h1m16 0h1m37 0h1M135 329h1m44 0h1m20 0h1m108 0h1m28 0h1m80 0h1m48 0h1m51 0h1m9 0h1m1 0h1m14 0h1m58 0h1m2 0h1M50 330h1m114 0h1m34 0h1m23 0h1m7 0h1m31 0h1m44 0h1m7 0h1m22 0h1m4 0h1m10 0h1m86 0h1m22 0h1m12 0h1m14 0h1m64 0h1m37 0h1m5 0h1M168 331h1m30 0h1m65 0h1m46 0h1m42 0h1m9 0h1m18 0h1m22 0h1m18 0h1m1 0h1m39 0h1m67 0h1m60 0h1M239 332h1m39 0h1m2 0h1m47 0h1m11 0h1m16 0h1m81 0h1m11 0h1m18 0h1m12 0h1m3 0h1m90 0h1M199 333h1m28 0h1m74 0h1m44 0h1m55 0h1m15 0h1m22 0h1m20 0h1m67 0h1M102 334h1m43 0h1m15 0h1m2 0h1m32 0h1m30 0h1m10 0h1m27 0h1m4 0h1m43 0h1m27 0h1m68 0h1h1m2 0h1m85 0h1m16 0h1m32 0h1m23 0h1M49 335h1m172 0h1m8 0h1m11 0h1m2 0h1m51 0h1m3 0h1m16 0h1m2 0h1m66 0h1m134 0h1m14 0h1m23 0h1m5 0h1m7 0h1M93 336h1m39 0h1h1m3 0h1m46 0h1m20 0h1m98 0h1m24 0h1m92 0h1m98 0h1m64 0h1M133 337h1m27 0h1m5 0h1m7 0h1m49 0h1m64 0h1m71 0h1m5 0h1m18 0h1m34 0h1m25 0h1m167 0h1M190 338h1m91 0h1m6 0h1m36 0h1m25 0h1m2 0h1m16 0h1m36 0h1m32 0h1m161 0h1M80 339h1m58 0h1m40 0h1m102 0h1m9 0h1m16 0h1m52 0h1m13 0h1m8 0h1m32 0h1m38 0h1m12 0h1m8 0h1m2 0h1m42 0h1m4 0h1m1 0h1m23 0h1M42 340h1m17 0h1m50 0h1m50 0h1h1m57 0h1m15 0h1m26 0h1m17 0h1m41 0h1m27 0h1m113 0h1m87 0h1m14 0h1m10 0h1M140 341h1m20 0h1m88 0h1m8 0h1m25 0h1m55 0h1m20 0h1m10 0h1m1 0h1m14 0h1m12 0h1m64 0h1m30 0h1m9 0h1m50 0h1M81 342h1m108 0h1m29 0h1m7 0h1m13 0h1m8 0h1m15 0h1m54 0h1m46 0h1m9 0h1m10 0h1m175 0h1M57 343h1m39 0h1m154 0h1m42 0h1m94 0h1m18 0h1m5 0h1m71 0h1m18 0h1m53 0h1m41 0h1M44 344h1m63 0h1m49 0h1m77 0h1m71 0h1m4 0h1h1m12 0h1m1 0h1m37 0h1m5 0h1m78 0h1m79 0h1m16 0h1M144 345h1m41 0h1m64 0h1m18 0h1m6 0h1m105 0h1m3 0h1m11 0h1m7 0h1m10 0h1m32 0h1m24 0h1m29 0h1m50 0h1M89 346h1m38 0h1m22 0h1m203 0h1m136 0h1m14 0h1m5 0h1m20 0h1m20 0h1m3 0h1M43 347h1m2 0h1m135 0h1m6 0h1m68 0h1m74 0h1m59 0h1m32 0h1m34 0h1m131 0h1m6 0h1M55 348h1m130 0h1m3 0h1m58 0h1m128 0h1m13 0h1m13 0h1m61 0h1m41 0h1m46 0h1M59 349h1m117 0h1m1 0h1m40 0h1m8 0h1m17 0h1m66 0h1m102 0h1m35 0h1m66 0h1m31 0h1h1m62 0h1M167 350h1m40 0h1h1m125 0h1m79 0h1m12 0h1m15 0h1m78 0h1m4 0h1m52 0h1M39 351h1m146 0h1m18 0h1m26 0h1m37 0h1m233 0h1m11 0h1m35 0h1m8 0h1h1m31 0h1m10 0h1M21 352h1m38 0h1m29 0h1m6 0h1m110 0h1m86 0h1m2 0h1m93 0h1m55 0h1m22 0h1m24 0h1m103 0h1M67 353h1m28 0h1m47 0h1m7 0h1m42 0h1m89 0h1m28 0h1m18 0h1m35 0h1m1 0h1m15 0h1m59 0h1m37 0h1m52 0h1m34 0h1m35 0h1m1 0h1M59 354h1m105 0h1m5 0h1m21 0h1m32 0h1m56 0h1m32 0h1m17 0h1m11 0h1m32 0h1m50 0h1m22 0h1m4 0h1m12 0h1h1m15 0h1m108 0h1M115 355h1m23 0h1m38 0h1m47 0h1m74 0h1m104 0h1m49 0h1m3 0h1m11 0h1m13 0h1m14 0h1m78 0h1M150 356h1m86 0h1m16 0h1h1m1 0h1m44 0h1m47 0h1m7 0h1m1 0h1m15 0h1m4 0h1m7 0h1m148 0h1m68 0h1M36 357h1m114 0h1m4 0h1m25 0h1m74 0h1m15 0h1m92 0h1m61 0h1m41 0h1m5 0h1m1 0h1m40 0h1m51 0h1M163 358h1m30 0h1m94 0h1m87 0h1m38 0h1m23 0h1h1m72 0h1m58 0h1m41 0h1M148 359h1m143 0h1m98 0h1m1 0h1m39 0h1m35 0h1m19 0h1m36 0h1m36 0h1m19 0h1m13 0h1m14 0h1h1M113 360h1m33 0h1m87 0h1m32 0h1m11 0h1m59 0h1m21 0h1m7 0h1m3 0h1m27 0h1m22 0h1m23 0h1m95 0h1m44 0h1M25 361h1m125 0h1m22 0h1m2 0h1m42 0h1m19 0h1m19 0h1m67 0h1m29 0h1m45 0h1m7 0h1m13 0h1m49 0h1m14 0h1m5 0h1m27 0h1m29 0h1M59 362h1m96 0h1m12 0h1h1m21 0h1h1m122 0h1m108 0h1m6 0h1m31 0h1m6 0h1m36 0h1m26 0h1m3 0h1m7 0h1m64 0h1M139 363h1m52 0h1m41 0h1m31 0h1m9 0h1m65 0h1m32 0h1m8 0h1m31 0h1m37 0h1m9 0h1m20 0h1m30 0h1M29 364h1m169 0h1m49 0h1m95 0h1m9 0h1m159 0h1m14 0h1m17 0h1m1 0h1h1m10 0h1m44 0h1m6 0h1M68 365h1m85 0h1m10 0h1m88 0h1m40 0h1m62 0h1h1m45 0h1m3 0h1m14 0h1m7 0h1m43 0h1m49 0h1m45 0h1M157 366h1m40 0h1m10 0h1m292 0h1m45 0h1m25 0h1m38 0h1M38 367h1m145 0h1m36 0h1m2 0h1m41 0h1m64 0h1m171 0h1m104 0h1m3 0h1M130 368h1m19 0h1m56 0h1m99 0h1m5 0h1m26 0h1m30 0h1m10 0h1m40 0h1m20 0h1m8 0h1m80 0h1m4 0h1m44 0h1M41 369h1m10 0h1m35 0h1m50 0h1m22 0h1m70 0h1h1m34 0h1m27 0h1m23 0h1m10 0h1m25 0h1m13 0h1m14 0h1m13 0h1m95 0h1m32 0h1m68 0h1m5 0h1m7 0h1M140 370h1m17 0h1m43 0h1m18 0h1m32 0h1m8 0h1m12 0h1m10 0h1m9 0h1m4 0h1m14 0h1m9 0h1m76 0h1m39 0h1h1m135 0h1m2 0h1m5 0h1M31 371h1m10 0h1m127 0h1m13 0h1m20 0h1m34 0h1m56 0h1m58 0h1m12 0h1m45 0h1m123 0h1h1m9 0h1M20 372h1m130 0h1m42 0h1m48 0h1m77 0h1m73 0h1m70 0h1m16 0h1m110 0h1m7 0h1M28 373h1m86 0h1m36 0h1m36 0h1m62 0h1m34 0h1m31 0h1m28 0h1m27 0h1m6 0h1m37 0h1m5 0h1m23 0h1m18 0h1m14 0h1m63 0h1M63 374h1m115 0h1h1m22 0h1m37 0h1m3 0h1m53 0h1m13 0h1m30 0h1m20 0h1m1 0h1m59 0h1m4 0h1m4 0h1m15 0h1m2 0h1m32 0h1m26 0h1m46 0h1M83 375h1m45 0h1m41 0h1m72 0h1m109 0h1m21 0h1m2 0h1m8 0h1m62 0h1m14 0h1m19 0h1m88 0h1m37 0h1M121 376h1m3 0h1m32 0h1m76 0h1m2 0h1m28 0h1m21 0h1m12 0h1m37 0h1m38 0h1m98 0h1m11 0h1m57 0h1m7 0h1m40 0h1m3 0h1M148 377h1m26 0h1m33 0h1m11 0h1m40 0h1m148 0h1m8 0h1m46 0h1m5 0h1m44 0h1m37 0h1m2 0h1m9 0h1m22 0h1h1M72 378h1m156 0h1m33 0h1m95 0h1h1m2 0h1h1m2 0h1m8 0h1m18 0h1m26 0h1m172 0h1M62 379h1m124 0h1m60 0h1m46 0h1m31 0h1m137 0h1m25 0h1h1m11 0h1h1m2 0h1m7 0h1m6 0h1m72 0h1m14 0h1M94 380h1m36 0h1m1 0h1m125 0h1m92 0h1m3 0h1m5 0h1m41 0h1m11 0h1m2 0h1m12 0h1m39 0h1m18 0h1m12 0h1m17 0h1m3 0h1m78 0h1M41 381h1m36 0h1m84 0h1m40 0h1m71 0h1m35 0h1m10 0h1m24 0h1m10 0h1m23 0h1m18 0h1m9 0h1m20 0h1m30 0h1m15 0h1m3 0h1m13 0h1m13 0h1m5 0h1m29 0h1m29 0h1m24 0h1M59 382h1m75 0h1m195 0h1m104 0h1m17 0h1m31 0h1m9 0h1M154 383h1m101 0h1m17 0h1m42 0h1m31 0h1m75 0h1m6 0h1m92 0h1m66 0h1m7 0h1M185 384h1m98 0h1m7 0h1m44 0h1m33 0h1m4 0h1m9 0h1m24 0h1m29 0h1m41 0h1M136 385h1m89 0h1m9 0h1m48 0h1m78 0h1m6 0h1m15 0h1m36 0h1m73 0h1m12 0h1m2 0h1m11 0h1m50 0h1m28 0h1m9 0h1M138 386h1m49 0h1m57 0h1m51 0h1m7 0h1m2 0h1m14 0h1m19 0h1m20 0h1m69 0h1m13 0h1m5 0h1m47 0h1m34 0h1m2 0h1m17 0h1M144 387h1m148 0h1m1 0h1m11 0h1m7 0h1m20 0h1m13 0h1m18 0h1m59 0h1m58 0h1m11 0h1m2 0h1m21 0h1m25 0h1m14 0h1m16 0h1M154 388h1m16 0h1m76 0h1m4 0h1m13 0h1m21 0h1m31 0h1m26 0h1m17 0h1m11 0h1m1 0h1m24 0h1m13 0h1m10 0h1m3 0h1m18 0h1m25 0h1m25 0h1M112 389h1m60 0h1m26 0h1m45 0h1m34 0h1m5 0h1m71 0h1m80 0h1m5 0h1m26 0h1m1 0h1M135 390h1m10 0h1m80 0h1m13 0h1m8 0h1h1m136 0h1m36 0h1m14 0h1m21 0h1m19 0h1m10 0h1m23 0h1m12 0h1m11 0h1m39 0h1M160 391h1m11 0h1m52 0h1m13 0h1m43 0h1m161 0h1m57 0h1h1m17 0h1M62 392h1m22 0h1m4 0h1m44 0h1m5 0h1m23 0h1m150 0h1m12 0h1m15 0h1m6 0h1m48 0h1h1m33 0h1m87 0h1m41 0h1M59 393h1m43 0h1m65 0h1h1m83 0h1m17 0h1m17 0h1m85 0h1m51 0h1m15 0h1m110 0h1m31 0h1m17 0h1M120 394h1m17 0h1m47 0h1m8 0h1m14 0h1m25 0h1m21 0h1m16 0h1m18 0h1m14 0h1m20 0h1m59 0h1m90 0h1m6 0h1m16 0h1M177 395h1m3 0h1m15 0h1m7 0h1m18 0h1m35 0h1m19 0h1m16 0h1m4 0h1m12 0h1m26 0h1h1m29 0h1m69 0h1m21 0h1m22 0h1m13 0h1m47 0h1m4 0h1m5 0h1m26 0h1m18 0h1M112 396h1m32 0h1m7 0h1m26 0h1m22 0h1m104 0h1m22 0h1m12 0h1m2 0h1m2 0h1m83 0h1m5 0h1m7 0h1m8 0h1m104 0h1m16 0h1M210 397h1m247 0h1m40 0h1m23 0h1M54 398h1m109 0h1m59 0h1m55 0h1h1m221 0h1m72 0h1M125 399h1m22 0h1m109 0h1m127 0h1" stroke="#00003e"/>
<path d="M265 80h1m37 0h1m31 0h1m11 0h1m26 0h1m20 0h1m68 0h1m4 0h1m60 0h1m30 0h1M112 81h1m37 0h1m181 0h1m13 0h1h1m95 0h1m11 0h1M161 82h1m61 0h1m1 0h1m7 0h1m27 0h1m21 0h1m36 0h1m3 0h1m151 0h1m19 0h1m19 0h1m29 0h1m27 0h1M161 83h1m171 0h1m62 0h1m55 0h1m5 0h1m67 0h1m30 0h1m36 0h1M230 84h1m8 0h1m47 0h1m11 0h1m94 0h1m16 0h1m10 0h1m5 0h1m99 0h1m19 0h1m10 0h1m2 0h1M166 85h1m134 0h1m152 0h1m12 0h1m18 0h1m2 0h1m105 0h1M28 86h1m23 0h1m38 0h1m63 0h1m74 0h1m44 0h1m50 0h1m54 0h1m38 0h1m79 0h1m20 0h1m39 0h1m54 0h1M72 87h1m113 0h1m30 0h1m86 0h1m42 0h1M195 88h1m26 0h1m166 0h1m26 0h1m34 0h1m11 0h1m26 0h1m25 0h1m25 0h1m58 0h1m6 0h1M126 89h1m124 0h1h1m84 0h1m127 0h1m50 0h1m71 0h1M153 90h1m28 0h1m77 0h1m44 0h1m243 0h1m37 0h1M154 91h1m66 0h1m38 0h1m73 0h1m77 0h1m49 0h1m45 0h1m13 0h1m18 0h1m33 0h1m35 0h1M89 92h1m56 0h1m15 0h1m110 0h1m150 0h1m37 0h1m63 0h1M170 93h1m53 0h1m74 0h1m32 0h1m25 0h1m4 0h1m89 0h1m18 0h1m15 0h1m12 0h1m108 0h1h1m2 0h1M170 94h1m74 0h1m93 0h1m12 0h1m16 0h1m124 0h1M225 95h1m7 0h1m72 0h1m80 0h1m122 0h1m46 0h1M301 96h1m145 0h1m3 0h1m46 0h1m26 0h1m52 0h1m36 0h1M110 97h1m69 0h1m8 0h1m27 0h1m315 0h1m21 0h1M66 98h1m317 0h1m65 0h1m49 0h1m39 0h1M151 99h1m9 0h1m24 0h1m84 0h1m34 0h1m69 0h1m4 0h1m2 0h1m214 0h1m9 0h1M37 100h1m3 0h1m59 0h1m8 0h1m163 0h1m60 0h1m52 0h1m38 0h1m138 0h1M165 101h1m148 0h1m7 0h1m92 0h1m8 0h1m57 0h1m131 0h1M82 102h1m53 0h1m2 0h1m15 0h1m60 0h1m90 0h1m19 0h1m233 0h1m11 0h1m45 0h1M110 103h1m79 0h1m19 0h1m269 0h1m49 0h1M254 104h1m60 0h1m6 0h1m16 0h1m154 0h1m52 0h1M252 105h1m77 0h1m12 0h1m179 0h1m12 0h1M122 106h1m163 0h1m43 0h1m24 0h1m98 0h1m92 0h1m11 0h1m49 0h1M378 107h1m5 0h1m75 0h1m15 0h1m104 0h1M68 108h1m73 0h1m18 0h1m118 0h1m18 0h1m42 0h1m37 0h1m25 0h1m31 0h1m126 0h1M176 109h1m50 0h1m19 0h1m45 0h1m23 0h1m12 0h1m22 0h1m39 0h1m43 0h1M96 110h1m109 0h1m74 0h1m28 0h1m38 0h1m114 0h1m33 0h1m33 0h1M79 111h1m90 0h1m44 0h1m20 0h1m14 0h1m332 0h1M104 112h1m26 0h1m22 0h1m21 0h1m31 0h1m121 0h1m20 0h1m47 0h1m105 0h1m16 0h1m21 0h1m36 0h1m8 0h1M244 113h1m18 0h1m54 0h1m59 0h1m99 0h1M59 114h1m108 0h1m79 0h1m18 0h1m2 0h1m156 0h1m34 0h1M48 115h1m162 0h1m102 0h1m42 0h1m219 0h1m12 0h1M102 116h1m45 0h1m9 0h1m5 0h1m6 0h1m11 0h1m40 0h1m2 0h1h1m30 0h1m31 0h1m13 0h1m15 0h1m126 0h1m8 0h1m6 0h1m3 0h1m53 0h1m51 0h1m22 0h1M122 117h1m120 0h1m86 0h1m41 0h1m73 0h1m169 0h1M108 118h1m138 0h1m7 0h1m12 0h1m49 0h1m30 0h1m35 0h1m16 0h1m17 0h1m60 0h1m22 0h1m96 0h1M206 119h1m133 0h1m8 0h1m35 0h1m5 0h1h1m26 0h1m45 0h1m65 0h1M138 120h1m36 0h1h1m154 0h1m46 0h1m21 0h1m10 0h1m17 0h1m10 0h1M82 121h1m10 0h1m41 0h1m35 0h1m3 0h1m111 0h1m147 0h1m2 0h1m1 0h1m19 0h1m7 0h1m2 0h1m144 0h1M99 122h1m110 0h1m37 0h1m39 0h1m218 0h1m49 0h1m47 0h1M147 123h1m13 0h1m162 0h1m104 0h1m27 0h1m4 0h1m32 0h1m76 0h1M114 124h1m119 0h1m58 0h1m1 0h1m48 0h1m63 0h1m29 0h1m19 0h1m94 0h1m49 0h1M52 125h1m90 0h1m24 0h1m123 0h1m159 0h1M32 126h1m33 0h1m243 0h1m7 0h1m68 0h1m37 0h1m56 0h1m66 0h1m2 0h1M69 127h1m14 0h1m20 0h1m99 0h1m129 0h1m205 0h1M111 128h1m52 0h1m89 0h1m85 0h1m201 0h1m51 0h1M326 129h1m49 0h1m179 0h1m16 0h1M33 130h1m78 0h1m112 0h1h1m133 0h1m75 0h1m10 0h1m32 0h1m31 0h1m38 0h1m17 0h1M159 131h1m13 0h1m71 0h1m11 0h1m3 0h1m145 0h1m73 0h1m125 0h1M57 132h1m50 0h1m101 0h1m7 0h1m73 0h1m52 0h1m45 0h1m187 0h1m28 0h1M25 133h1m18 0h1m117 0h1m18 0h1m68 0h1m23 0h1m46 0h1m123 0h1m32 0h1m26 0h1m7 0h1m24 0h1M152 134h1m125 0h1m78 0h1m18 0h1m54 0h1m4 0h1m23 0h1m7 0h1m150 0h1M230 135h1m31 0h1m9 0h1m128 0h1m31 0h1m31 0h1m30 0h1m14 0h1m22 0h1m17 0h1M375 136h1m31 0h1m56 0h1m95 0h1h1m38 0h1M253 137h1m1 0h1m42 0h1m81 0h1m24 0h1m57 0h1m18 0h1m71 0h1m35 0h1M51 138h1m273 0h1m110 0h1m181 0h1M144 139h1m188 0h1m41 0h1m55 0h1m1 0h1m6 0h1m57 0h1m12 0h1m6 0h1m9 0h1m83 0h1M114 140h1m24 0h1m106 0h1m84 0h1m27 0h1m18 0h1m1 0h1m101 0h1m66 0h1M105 141h1m51 0h1m5 0h1m21 0h1m56 0h1m196 0h1m38 0h1m30 0h1m11 0h1m43 0h1m1 0h1m49 0h1M53 142h1m99 0h1m154 0h1m27 0h1m49 0h1m13 0h1m38 0h1m64 0h1m64 0h1m26 0h1M79 143h1m111 0h1m32 0h1m185 0h1m92 0h1m82 0h1m12 0h1M129 144h1m26 0h1m52 0h1m10 0h1m59 0h1m44 0h1m13 0h1m89 0h1m32 0h1m52 0h1m98 0h1M84 145h1m197 0h1m15 0h1m22 0h1m29 0h1m67 0h1m15 0h1m25 0h1m26 0h1m7 0h1m42 0h1m4 0h1m20 0h1m43 0h1m5 0h1M240 146h1m146 0h1m30 0h1m119 0h1m8 0h1m47 0h1M142 147h1m13 0h1m145 0h1m116 0h1m8 0h1m15 0h1M210 148h1m147 0h1m26 0h1m54 0h1m63 0h1m9 0h1m98 0h1m3 0h1M43 149h1m97 0h1m64 0h1m143 0h1m18 0h1m10 0h1m1 0h1m19 0h1m31 0h1m61 0h1m58 0h1m12 0h1m19 0h1m13 0h1M349 150h1m70 0h1m104 0h1m68 0h1m17 0h1M101 151h1m242 0h1m2 0h1m2 0h1m113 0h1m4 0h1m99 0h1m28 0h1M127 152h1m11 0h1m48 0h1m79 0h1m41 0h1h1h1m8 0h1m93 0h1m3 0h1m17 0h1m69 0h1m68 0h1M141 153h1m72 0h1m59 0h1m8 0h1m201 0h1m97 0h1m24 0h1M168 154h1m37 0h1m96 0h1m26 0h1m152 0h1m86 0h1M108 155h1m292 0h1m9 0h1m60 0h1m7 0h1m61 0h1m60 0h1M34 156h1m256 0h1m92 0h1M139 157h1m120 0h1m68 0h1m55 0h1m100 0h1m37 0h1m65 0h1M221 158h1m27 0h1m38 0h1m35 0h1m23 0h1m61 0h1m50 0h1m53 0h1m101 0h1M80 159h1m168 0h1m78 0h1m75 0h1m135 0h1m15 0h1m15 0h1M29 160h1m156 0h1m8 0h1m40 0h1m16 0h1m49 0h1m39 0h1m46 0h1m20 0h1m4 0h1m7 0h1m35 0h1m15 0h1M136 161h1m23 0h1m79 0h1h1m16 0h1m58 0h1m147 0h1m22 0h1M151 162h1m61 0h1m79 0h1m178 0h1m67 0h1m38 0h1M70 163h1m144 0h1m48 0h1m2 0h1m105 0h1m3 0h1h1m51 0h1m10 0h1m51 0h1m8 0h1m13 0h1m22 0h1m16 0h1M152 164h1m35 0h1h1m31 0h1m39 0h1m23 0h1m19 0h1m19 0h1m19 0h1m19 0h1m112 0h1m35 0h1M34 165h1m110 0h1m131 0h1m108 0h1m197 0h1M98 166h1m28 0h1m127 0h1m98 0h1m41 0h1m4 0h1m38 0h1m53 0h1m3 0h1M152 167h1m58 0h1h1m102 0h1m101 0h1m47 0h1m12 0h1m35 0h1M149 168h1m82 0h1m22 0h1m2 0h1m6 0h1m44 0h1m32 0h1m84 0h1m97 0h1M118 169h1m109 0h1m122 0h1m10 0h1m85 0h1M90 170h1m98 0h1m29 0h1m38 0h1m16 0h1m238 0h1M92 171h1m48 0h1m79 0h1m31 0h1m250 0h1M126 172h1m15 0h1m46 0h1h1m201 0h1m172 0h1m53 0h1M108 173h1m112 0h1m91 0h1m70 0h1m59 0h1m98 0h1m68 0h1M141 174h1m29 0h1m142 0h1m31 0h1m10 0h1m63 0h1m22 0h1m52 0h1M276 175h1m67 0h1m55 0h1m16 0h1m60 0h1m90 0h1M82 176h1m52 0h1m32 0h1m218 0h1m61 0h1m33 0h1m14 0h1h1m31 0h1m29 0h1m22 0h1m6 0h1M139 177h1m39 0h1m2 0h1m143 0h1m65 0h1m132 0h1m61 0h1M73 178h1m19 0h1m65 0h1m29 0h1m5 0h1m25 0h1m103 0h1m66 0h1m58 0h1m75 0h1m7 0h1m13 0h1M49 179h1m143 0h1m38 0h1m48 0h1m91 0h1m22 0h1m3 0h1m42 0h1m9 0h1m39 0h1m65 0h1m47 0h1M42 180h1m76 0h1m128 0h1m14 0h1m100 0h1m117 0h1m61 0h1m9 0h1m34 0h1m11 0h1m8 0h1M69 181h1m94 0h1m64 0h1m100 0h1m49 0h1m100 0h1m11 0h1m26 0h1m34 0h1h1M144 182h1m67 0h1m92 0h1m103 0h1m13 0h1m67 0h1m13 0h1m74 0h1m10 0h1m12 0h1M155 183h1m58 0h1m22 0h1m86 0h1m25 0h1m14 0h1m132 0h1m2 0h1m61 0h1m48 0h1M217 184h1m28 0h1m66 0h1m81 0h1m136 0h1m18 0h1M123 185h1m33 0h1m10 0h1m102 0h1m10 0h1m105 0h1m33 0h1m115 0h1M188 186h1m2 0h1m377 0h1m5 0h1M72 187h1m83 0h1m56 0h1m16 0h1m124 0h1m41 0h1m120 0h1m4 0h1m6 0h1M116 188h1m93 0h1m87 0h1m5 0h1m212 0h1m19 0h1m65 0h1M311 189h1m56 0h1m74 0h1m6 0h1m60 0h1m59 0h1M184 190h1m192 0h1m87 0h1m4 0h1M176 191h1m15 0h1m257 0h1m2 0h1m111 0h1m34 0h1M93 192h1m29 0h1m139 0h1m4 0h1m35 0h1m13 0h1m289 0h1M104 193h1m35 0h1m111 0h1m95 0h1m81 0h1m90 0h1M123 194h1m39 0h1m33 0h1m164 0h1m1 0h1m92 0h1m58 0h1h1m5 0h1M216 195h1m44 0h1m16 0h1m264 0h1M26 196h1m26 0h1m18 0h1m73 0h1m32 0h1m77 0h1m20 0h1m21 0h1m82 0h1m34 0h1m22 0h1m6 0h1m45 0h1h1m1 0h1m2 0h1m40 0h1m51 0h1M284 197h1m60 0h1m33 0h1m69 0h1m15 0h1h1m4 0h1m31 0h1m12 0h1M68 198h1m98 0h1m54 0h1m105 0h1m26 0h1m44 0h1m92 0h1m29 0h1m2 0h1m16 0h1M20 199h1m159 0h1m91 0h1m19 0h1m26 0h1m21 0h1m43 0h1m40 0h1M165 200h1m73 0h1m3 0h1m54 0h1m100 0h1m86 0h1M22 201h1m253 0h1m26 0h1m49 0h1m164 0h1m51 0h1M270 202h1m30 0h1m1 0h1m42 0h1m18 0h1m3 0h1m101 0h1m46 0h1m50 0h1m37 0h1M84 203h1m48 0h1m10 0h1m5 0h1m61 0h1m65 0h1m54 0h1m4 0h1m8 0h1m4 0h1m15 0h1M94 204h1m66 0h1m17 0h1m31 0h1m6 0h1m19 0h1m113 0h1m36 0h1m104 0h1m20 0h1M149 205h1m15 0h1m135 0h1m91 0h1m61 0h1M64 206h1m159 0h1m66 0h1m32 0h1m77 0h1m35 0h1m94 0h1M143 207h1m13 0h1m85 0h1m25 0h1m126 0h1m22 0h1M174 208h1m37 0h1m161 0h1m23 0h1m99 0h1M79 209h1m79 0h1m100 0h1m49 0h1m39 0h1m35 0h1m91 0h1m16 0h1m25 0h1m91 0h1M168 210h1m52 0h1m20 0h1m48 0h1m55 0h1m10 0h1m22 0h1m54 0h1m79 0h1m67 0h1M44 211h1m47 0h1m54 0h1m6 0h1m3 0h1m68 0h1m93 0h1m58 0h1m27 0h1m7 0h1m54 0h1m7 0h1m13 0h1m28 0h1M50 212h1m60 0h1m167 0h1m22 0h1m1 0h1m115 0h1m9 0h1m11 0h1M22 213h1m40 0h1m49 0h1m279 0h1m29 0h1m63 0h1m19 0h1m1 0h1m9 0h1m11 0h1m68 0h1m11 0h1M28 214h1m181 0h1m54 0h1m61 0h1m8 0h1m6 0h1m60 0h1m27 0h1m120 0h1m40 0h1M64 215h1m115 0h1m8 0h1m171 0h1m9 0h1m106 0h1m77 0h1m23 0h1M152 216h1m270 0h1m20 0h1m131 0h1m31 0h1m1 0h1M222 217h1m20 0h1m80 0h1m41 0h1m6 0h1m18 0h1m33 0h1m111 0h1m30 0h1m23 0h1m14 0h1M119 218h1m9 0h1m26 0h1m165 0h1h1m175 0h1m67 0h1m21 0h1M85 219h1m150 0h1m19 0h1m178 0h1m109 0h1m8 0h1m4 0h1M199 220h1m12 0h1m75 0h1m50 0h1m44 0h1m4 0h1m50 0h1m50 0h1m104 0h1M88 221h1m258 0h1m2 0h1m101 0h1m117 0h1m34 0h1M59 222h1m87 0h1m31 0h1m142 0h1m59 0h1m14 0h1m98 0h1m56 0h1M258 223h1m18 0h1m145 0h1m13 0h1m130 0h1m5 0h1M162 224h1m3 0h1m54 0h1m83 0h1m52 0h1m52 0h1m18 0h1h1m46 0h1M114 225h1m22 0h1m18 0h1m55 0h1m179 0h1m183 0h1m11 0h1M110 226h1m86 0h1m33 0h1m22 0h1m60 0h1m74 0h1h1m41 0h1m30 0h1m29 0h1m5 0h1M47 227h1m90 0h1m141 0h1m63 0h1m127 0h1m47 0h1m16 0h1M183 228h1m197 0h1m59 0h1m23 0h1m3 0h1m42 0h1m69 0h1M138 229h1m23 0h1m116 0h1m66 0h1m22 0h1m69 0h1m52 0h1m17 0h1m66 0h1m25 0h1M77 230h1m275 0h1m79 0h1m19 0h1m4 0h1m48 0h1m25 0h1m33 0h1M343 231h1h1m3 0h1m20 0h1m55 0h1m153 0h1m10 0h1M62 232h1m66 0h1m185 0h1m32 0h1m18 0h1m6 0h1m72 0h1m24 0h1m16 0h1m8 0h1M145 233h1m19 0h1m70 0h1m28 0h1m88 0h1m21 0h1m22 0h1m44 0h1M243 234h1m82 0h1m28 0h1m95 0h1m95 0h1m22 0h1m11 0h1m12 0h1M138 235h1m141 0h1m102 0h1m23 0h1m34 0h1m81 0h1m13 0h1m19 0h1M149 236h1m161 0h1m23 0h1m35 0h1m31 0h1m66 0h1m18 0h1M118 237h1m7 0h1m35 0h1m55 0h1m88 0h1m29 0h1m13 0h1m14 0h1m23 0h1m106 0h1m15 0h1m90 0h1M22 238h1m65 0h1m135 0h1m27 0h1m2 0h1m4 0h1m73 0h1m3 0h1m14 0h1m91 0h1m75 0h1m9 0h1m9 0h1M159 239h1m9 0h1m31 0h1m27 0h1m29 0h1m67 0h1m50 0h1m70 0h1m19 0h1m75 0h1m38 0h1M40 240h1m176 0h1m67 0h1m44 0h1m50 0h1m54 0h1m11 0h1m28 0h1M144 241h1m141 0h1m2 0h1m9 0h1m22 0h1m80 0h1m19 0h1m85 0h1m43 0h1M126 242h1m13 0h1m268 0h1m59 0h1m49 0h1m5 0h1m69 0h1M143 243h1m20 0h1m87 0h1m61 0h1m274 0h1m1 0h1M152 244h1m185 0h1m27 0h1m9 0h1m15 0h1m2 0h1m26 0h1m99 0h1m61 0h1M53 245h1m68 0h1m47 0h1m2 0h1m9 0h1m39 0h1m73 0h1m11 0h1m19 0h1m186 0h1m2 0h1M89 246h1m79 0h1m24 0h1m92 0h1m31 0h1m40 0h1m43 0h1m151 0h1m6 0h1m33 0h1M152 247h1m140 0h1m153 0h1m42 0h1m48 0h1M25 248h1m20 0h1m53 0h1m90 0h1m184 0h1m55 0h1m131 0h1M373 249h1m158 0h1M152 250h1m17 0h1m130 0h1m33 0h1h1m86 0h1m52 0h1m63 0h1m3 0h1m15 0h1m4 0h1M146 251h1m17 0h1m128 0h1m25 0h1m54 0h1m96 0h1M228 252h1m34 0h1m55 0h1m50 0h1m28 0h1m38 0h1m8 0h1m51 0h1m2 0h1m5 0h1m34 0h1m21 0h1m18 0h1M62 253h1m15 0h1m188 0h1m48 0h1m23 0h1m116 0h1h1m19 0h1m131 0h1M169 254h1m75 0h1m34 0h1m85 0h1m18 0h1m23 0h1m19 0h1m5 0h1m53 0h1h1m67 0h1m30 0h1M28 255h1m24 0h1m200 0h1m39 0h1m54 0h1m51 0h1m4 0h1m173 0h1m36 0h1M24 256h1m60 0h1m42 0h1m27 0h1m21 0h1m36 0h1m261 0h1m87 0h1M50 257h1m279 0h1m11 0h1m5 0h1m47 0h1m100 0h1m103 0h1M34 258h1m23 0h1m64 0h1m54 0h1m6 0h1m324 0h1m88 0h1M137 259h1m95 0h1m253 0h1m53 0h1m24 0h1m23 0h1M23 260h1m226 0h1m2 0h1h1m35 0h1m168 0h1M22 261h1m247 0h1M143 262h1m26 0h1m63 0h1m117 0h1m3 0h1m27 0h1m226 0h1m3 0h1M45 263h1m132 0h1m89 0h1m10 0h1m19 0h1m25 0h1m23 0h1m209 0h1M149 264h1m145 0h1m16 0h1m82 0h1m40 0h1m53 0h1m51 0h1m29 0h1M80 265h1m165 0h1m121 0h1m14 0h1m28 0h1m50 0h1m24 0h1m2 0h1m1 0h1m87 0h1m13 0h1M181 266h1m75 0h1m138 0h1m36 0h1m14 0h1m5 0h1m19 0h1M237 267h1m75 0h1m38 0h1m10 0h1m4 0h1m23 0h1m111 0h1m28 0h1m11 0h1m62 0h1h1M161 268h1m31 0h1m21 0h1h1m49 0h1h1m14 0h1m88 0h1m42 0h1m2 0h1m153 0h1M43 269h1m150 0h1m98 0h1m89 0h1m31 0h1m15 0h1m60 0h1m16 0h1m50 0h1M151 270h1m104 0h1m46 0h1m64 0h1m138 0h1m61 0h1m7 0h1m1 0h1m35 0h1M40 271h1m55 0h1m100 0h1m29 0h1m2 0h1m33 0h1m31 0h1m60 0h1m36 0h1h1m24 0h1m148 0h1M188 272h1m81 0h1m1 0h1m198 0h1m43 0h1m3 0h1m19 0h1m51 0h1m12 0h1m10 0h1M144 273h1m3 0h1m171 0h1m30 0h1m44 0h1m10 0h1m4 0h1m21 0h1m55 0h1m32 0h1m27 0h1m52 0h1M128 274h1m278 0h1m11 0h1m10 0h1m49 0h1m50 0h1m5 0h1M92 275h1m165 0h1m40 0h1m15 0h1m44 0h1m85 0h1m39 0h1m69 0h1M148 276h1m18 0h1m53 0h1m16 0h1m51 0h1m245 0h1m14 0h1m6 0h1m45 0h1h1M228 277h1m45 0h1m148 0h1m120 0h1M216 278h1m15 0h1m72 0h1m25 0h1m42 0h1m25 0h1m20 0h1m81 0h1m22 0h1m38 0h1m24 0h1m15 0h1M117 279h1m67 0h1m18 0h1m228 0h1m11 0h1m44 0h1m10 0h1m53 0h1M43 280h1m182 0h1m3 0h1m2 0h1m17 0h1m49 0h1m76 0h1m78 0h1m18 0h1m133 0h1M82 281h1m7 0h1m9 0h1m80 0h1m95 0h1m1 0h1m33 0h1m14 0h1m56 0h1m77 0h1h1m1 0h1m1 0h1m143 0h1M127 282h1m23 0h1m42 0h1m256 0h1m6 0h1m25 0h1m69 0h1m28 0h1m1 0h1M109 283h1m193 0h1m161 0h1m75 0h1m23 0h1M266 284h1m212 0h1m64 0h1M74 285h1m2 0h1m23 0h1m80 0h1m51 0h1m93 0h1m75 0h1m134 0h1m19 0h1M156 286h1m1 0h1m3 0h1m39 0h1m111 0h1m63 0h1m24 0h1m10 0h1m129 0h1m20 0h1h1m26 0h1M182 287h1m127 0h1m2 0h1m9 0h1m86 0h1m8 0h1m98 0h1M196 288h1m101 0h1m19 0h1m179 0h1m14 0h1m56 0h1m3 0h1M73 289h1m112 0h1m88 0h1m39 0h1m146 0h1m71 0h1M224 290h1m138 0h1m38 0h1m95 0h1m71 0h1m41 0h1M157 291h1m81 0h1m1 0h1h1m47 0h1m19 0h1m55 0h1m4 0h1m93 0h1m111 0h1m32 0h1M113 292h1m207 0h1m27 0h1m31 0h1m119 0h1M34 293h1m21 0h1m106 0h1m107 0h1m98 0h1m186 0h1m2 0h1M186 294h1m48 0h1m56 0h1m26 0h1m20 0h1m30 0h1m4 0h1m16 0h1m9 0h1m39 0h1m29 0h1h1m64 0h1m4 0h1m1 0h1m16 0h1m19 0h1M51 295h1m80 0h1m62 0h1m129 0h1m63 0h1m15 0h1m6 0h1m138 0h1m28 0h1M145 296h1m87 0h1m43 0h1m5 0h1m84 0h1m46 0h1m1 0h1m25 0h1m12 0h1m1 0h1m31 0h1M102 297h1m9 0h1m52 0h1m30 0h1m56 0h1m70 0h1m7 0h1m121 0h1m53 0h1m5 0h1m55 0h1M140 298h1m152 0h1m75 0h1m195 0h1m11 0h1M182 299h1m190 0h1m141 0h1m22 0h1m2 0h1m49 0h1m11 0h1M177 300h1m96 0h1m14 0h1m82 0h1m43 0h1m58 0h1m24 0h1m60 0h1m31 0h1M117 301h1m42 0h1m11 0h1m46 0h1m10 0h1m27 0h1m143 0h1m42 0h1m13 0h1m113 0h1m12 0h1M71 302h1m93 0h1m154 0h1m58 0h1m77 0h1m43 0h1m8 0h1m45 0h1m23 0h1M251 303h1m13 0h1m17 0h1m3 0h1m39 0h1m26 0h1m19 0h1m52 0h1m10 0h1m12 0h1m10 0h1m5 0h1M59 304h1m138 0h1m46 0h1m103 0h1m44 0h1m24 0h1m2 0h1m7 0h1m38 0h1m1 0h1m103 0h1M246 305h1m14 0h1m57 0h1m80 0h1m22 0h1m23 0h1m122 0h1M420 306h1m36 0h1m35 0h1m103 0h1M151 307h1m83 0h1m54 0h1m207 0h1m63 0h1m38 0h1M43 308h1m139 0h1m13 0h1m32 0h1m18 0h1m57 0h1m4 0h1m95 0h1m22 0h1m5 0h1m31 0h1m81 0h1m22 0h1M80 309h1m198 0h1m18 0h1m14 0h1m7 0h1m29 0h1m13 0h1m20 0h1m16 0h1m40 0h1m8 0h1m163 0h1M134 310h1m2 0h1m12 0h1m39 0h1m75 0h1h1m93 0h1m22 0h1m17 0h1m39 0h1m4 0h1m39 0h1m30 0h1m15 0h1M143 311h1m17 0h1m151 0h1m150 0h1m27 0h1m9 0h1m8 0h1m39 0h1M377 312h1m25 0h1m47 0h1m76 0h1m15 0h1m41 0h1M65 313h1m39 0h1m117 0h1m25 0h1m55 0h1m72 0h1m32 0h1m73 0h1m12 0h1m61 0h1m54 0h1M43 314h1m132 0h1m54 0h1m16 0h1m114 0h1m106 0h1m46 0h1m53 0h1m28 0h1M54 315h1m98 0h1m33 0h1m95 0h1m121 0h1m35 0h1m68 0h1m43 0h1m57 0h1M39 316h1m42 0h1m220 0h1m2 0h1m115 0h1m40 0h1m9 0h1m1 0h1m103 0h1M171 317h1m8 0h1m38 0h1m23 0h1m7 0h1m82 0h1M148 318h1m10 0h1m67 0h1m15 0h1m57 0h1m117 0h1m21 0h1m17 0h1m9 0h1m49 0h1m23 0h1m41 0h1M170 319h1m60 0h1m62 0h1m45 0h1m242 0h1M154 320h1m7 0h1m58 0h1m19 0h1m54 0h1m20 0h1m78 0h1m106 0h1m110 0h1M153 321h1m75 0h1m10 0h1m31 0h1m88 0h1m7 0h1m52 0h1m13 0h1m121 0h1m7 0h1m51 0h1M133 322h1m10 0h1m52 0h1m194 0h1m7 0h1m116 0h1m13 0h1m24 0h1m58 0h1M151 323h1m24 0h1m125 0h1m29 0h1m2 0h1m8 0h1m166 0h1M274 324h1m9 0h1m116 0h1m49 0h1m33 0h1m3 0h1m13 0h1m77 0h1M101 325h1m37 0h1m65 0h1m86 0h1h1m49 0h1m27 0h1m173 0h1m13 0h1M115 326h1m22 0h1m45 0h1m53 0h1m5 0h1m85 0h1m109 0h1m142 0h1M45 327h1m31 0h1m25 0h1m119 0h1m86 0h1m26 0h1m72 0h1m39 0h1m7 0h1m25 0h1m58 0h1m15 0h1M139 328h1m2 0h1m30 0h1m18 0h1m43 0h1m36 0h1m51 0h1h1m6 0h1m42 0h1m220 0h1m2 0h1M141 329h1m1 0h1m50 0h1m50 0h1m15 0h1m8 0h1h1m28 0h1m46 0h1m13 0h1m52 0h1m35 0h1m9 0h1m23 0h1m25 0h1m32 0h1M133 330h1m102 0h1m107 0h1m5 0h1m36 0h1m46 0h1m55 0h1M29 331h1m100 0h1m27 0h1m115 0h1m181 0h1m71 0h1m8 0h1m49 0h1m2 0h1m21 0h1M159 332h1m33 0h1m6 0h1m6 0h1m76 0h1m62 0h1m2 0h1m69 0h1m21 0h1m71 0h1h1M31 333h1m82 0h1m90 0h1M189 334h1m99 0h1m74 0h1m31 0h1m28 0h1h1m112 0h1M131 335h1m149 0h1m9 0h1m98 0h1m2 0h1m149 0h1M202 336h1m55 0h1m125 0h1M34 337h1m59 0h1m100 0h1m104 0h1m12 0h1m27 0h1m14 0h1m12 0h1m14 0h1m29 0h1m2 0h1m12 0h1m6 0h1m56 0h1m5 0h1m37 0h1m70 0h1m4 0h1M254 338h1m199 0h1M156 339h1m65 0h1m130 0h1m59 0h1m134 0h1M159 340h1m9 0h1m77 0h1m252 0h1m99 0h1M47 341h1m180 0h1m164 0h1m208 0h1M136 342h1m7 0h1m3 0h1m75 0h1m59 0h1m44 0h1m74 0h1m7 0h1M60 343h1m82 0h1m64 0h1m51 0h1m110 0h1m1 0h1m199 0h1M169 344h1m57 0h1m41 0h1h1m94 0h1m44 0h1m197 0h1M35 345h1m143 0h1m83 0h1m101 0h1m38 0h1m94 0h1m13 0h1m12 0h1m10 0h1M164 346h1m136 0h1m97 0h1m38 0h1m117 0h1M157 347h1m29 0h1m40 0h1m22 0h1m29 0h1m62 0h1m26 0h1m83 0h1m73 0h1m39 0h1m11 0h1M371 348h1m145 0h1m19 0h1m80 0h1M152 349h1m23 0h1m104 0h1m120 0h1m52 0h1m6 0h1m13 0h1m49 0h1m1 0h1m48 0h1M30 350h1m9 0h1m97 0h1m170 0h1m60 0h1m23 0h1m32 0h1m35 0h1m57 0h1m15 0h1M262 351h1m55 0h1m2 0h1m82 0h1m29 0h1m30 0h1m67 0h1M166 352h1m54 0h1m116 0h1m78 0h1m104 0h1M58 353h1m217 0h1m50 0h1m214 0h1m71 0h1M228 354h1m1 0h1m14 0h1m25 0h1m87 0h1m20 0h1m7 0h1m204 0h1m19 0h1M135 355h1m46 0h1m5 0h1m40 0h1m112 0h1m159 0h1m22 0h1M155 356h1m49 0h1m29 0h1m138 0h1m26 0h1m4 0h1m98 0h1m14 0h1M199 357h1m40 0h1m68 0h1M242 358h1m27 0h1m42 0h1m51 0h1m80 0h1m23 0h1m27 0h1m35 0h1m20 0h1M224 359h1m11 0h1m54 0h1m45 0h1m13 0h1m22 0h1m67 0h1m79 0h1m19 0h1m42 0h1m10 0h1m17 0h1M292 360h1m1 0h1m2 0h1m41 0h1m61 0h1m27 0h1m18 0h1m4 0h1m28 0h1m39 0h1m43 0h1M152 361h1m35 0h1m47 0h1m26 0h1m40 0h1m7 0h1m51 0h1m19 0h1M142 362h1m19 0h1h1m64 0h1m23 0h1m14 0h1m16 0h1m163 0h1m88 0h1m13 0h1m64 0h1M157 363h1m49 0h1m55 0h1m10 0h1m74 0h1m69 0h1m14 0h1m6 0h1m29 0h1m139 0h1m3 0h1M140 364h1m3 0h1m39 0h1m19 0h1m56 0h1m12 0h1m118 0h1m18 0h1m14 0h1m46 0h1M383 365h1m24 0h1m47 0h1m119 0h1m16 0h1M139 366h1m185 0h1m28 0h1m8 0h1m12 0h1m12 0h1m49 0h1m60 0h1M67 367h1m113 0h1m46 0h1m1 0h1m10 0h1m25 0h1m97 0h1m36 0h1M314 368h1m2 0h1m23 0h1m17 0h1m175 0h1m6 0h1m5 0h1m16 0h1M69 369h1m101 0h1m25 0h1m26 0h1m12 0h1m16 0h1m29 0h1h1m43 0h1m110 0h1m49 0h1M358 370h1m22 0h1m64 0h1m116 0h1m11 0h1M270 371h1h1m2 0h1m12 0h1m111 0h1m56 0h1m56 0h1m49 0h1m9 0h1m39 0h1m1 0h1M127 372h1m212 0h1m121 0h1m22 0h1M32 373h1m131 0h1m30 0h1m25 0h1m66 0h1m112 0h1m97 0h1m118 0h1M138 374h1m109 0h1m49 0h1m85 0h1m39 0h1m6 0h1m12 0h1m14 0h1m23 0h1m41 0h1m38 0h1m42 0h1M286 375h1m4 0h1m54 0h1m66 0h1m40 0h1m110 0h1m18 0h1M201 376h1m74 0h1m96 0h1m3 0h1m87 0h1m122 0h1m7 0h1m20 0h1M145 377h1m37 0h1m58 0h1m7 0h1m20 0h1m104 0h1m52 0h1m2 0h1m12 0h1m26 0h1m22 0h1m48 0h1m17 0h1m21 0h1M43 378h1m78 0h1m3 0h1m6 0h1m89 0h1m9 0h1m84 0h1m27 0h1m55 0h1m181 0h1M63 379h1m129 0h1m3 0h1m107 0h1m62 0h1m11 0h1m99 0h1m59 0h1m53 0h1M73 380h1m107 0h1m224 0h1m11 0h1m17 0h1m2 0h1m91 0h1m15 0h1m45 0h1m19 0h1M70 381h1m58 0h1m65 0h1m26 0h1m132 0h1m28 0h1m137 0h1m22 0h1m21 0h1M211 382h1m55 0h1m119 0h1m5 0h1m57 0h1m50 0h1m10 0h1m23 0h1M64 383h1m142 0h1m133 0h1m29 0h1m20 0h1m42 0h1m69 0h1m9 0h1m57 0h1M362 384h1m5 0h1m11 0h1m11 0h1m7 0h1m8 0h1m52 0h1m16 0h1m67 0h1h1M129 385h1m19 0h1m246 0h1m56 0h1m55 0h1m14 0h1m22 0h1h1m15 0h1m3 0h1M59 386h1m82 0h1m108 0h1m80 0h1m42 0h1m65 0h1m37 0h1m64 0h1h1m11 0h1m5 0h1m23 0h1m7 0h1m4 0h1M26 387h1m173 0h1m2 0h1m28 0h1m84 0h1m40 0h1m32 0h1m65 0h1m23 0h1m46 0h1m16 0h1m51 0h1M243 388h1m24 0h1h1m72 0h1m25 0h1m13 0h1m142 0h1m17 0h1M134 389h1m331 0h1m28 0h1m48 0h1m4 0h1m22 0h1M113 390h1m125 0h1m7 0h1m22 0h1m26 0h1m75 0h1m20 0h1m78 0h1M113 391h1m110 0h1m5 0h1m49 0h1m38 0h1h1m50 0h1m105 0h1m22 0h1m96 0h1M164 392h1m41 0h1m49 0h1m53 0h1m62 0h1m23 0h1m37 0h1m48 0h1m87 0h1M146 393h1m41 0h1m53 0h1m25 0h1m24 0h1m8 0h1m103 0h1m74 0h1m106 0h1M154 394h1m106 0h1m88 0h1m220 0h1M152 395h1m174 0h1m80 0h1m166 0h1m11 0h1M25 396h1m74 0h1m47 0h1m37 0h1m70 0h1m10 0h1m20 0h1m100 0h1m33 0h1m162 0h1M20 397h1m31 0h1m4 0h1m102 0h1m299 0h1m90 0h1m27 0h1M45 398h1m129 0h1m119 0h1m22 0h1m127 0h1m15 0h1m76 0h1M248 399h1m267 0h1" stroke="#000052"/>
<path d="M133 80h1m15 0h1m204 0h1m84 0h1M271 81h1m48 0h1m86 0h1m59 0h1m2 0h1m62 0h1m5 0h1M172 82h1m42 0h1m166 0h1m149 0h1m16 0h1m2 0h1m24 0h1m25 0h1M291 83h1m134 0h1m2 0h1m135 0h1M175 84h1m37 0h1m340 0h1m58 0h1M269 85h1m44 0h1m80 0h1m69 0h1m7 0h1m55 0h1m29 0h1m12 0h1m2 0h1M40 86h1m12 0h1m131 0h1m186 0h1M228 87h1m51 0h1m63 0h1m199 0h1M338 88h1M109 89h1m110 0h1m77 0h1m105 0h1m101 0h1m53 0h1m1 0h1M159 90h1m4 0h1m18 0h1m142 0h1m74 0h1m42 0h1m15 0h1M198 91h1m180 0h1m129 0h1M262 92h1m23 0h1m203 0h1m5 0h1m50 0h1M113 93h1m58 0h1m24 0h1m92 0h1m276 0h1M114 94h1m43 0h1m34 0h1m3 0h1m80 0h1m59 0h1m71 0h1m188 0h1M136 95h1m12 0h1m3 0h1m12 0h1m25 0h1m4 0h1m114 0h1m30 0h1m49 0h1M188 96h1m281 0h1M220 97h1m160 0h1m105 0h1M242 98h1M71 99h1m101 0h1h1m21 0h1h1m163 0h1m138 0h1M79 100h1m23 0h1m91 0h1m55 0h1m214 0h1m13 0h1h1m33 0h1M186 101h1m68 0h1m73 0h1m34 0h1m25 0h1m103 0h1M151 102h1m118 0h1m77 0h1m119 0h1m80 0h1M35 103h1m162 0h1m155 0h1m143 0h1m51 0h1M132 104h1m87 0h1m20 0h1m167 0h1m140 0h1m5 0h1m27 0h1M220 105h1m144 0h1m54 0h1m82 0h1M201 106h1m58 0h1m115 0h1m41 0h1m32 0h1m33 0h1m43 0h1M142 107h1m54 0h1h1m84 0h1m20 0h1m31 0h1m42 0h1M145 108h1m58 0h1m145 0h1m49 0h1m23 0h1m77 0h1M49 109h1m145 0h1m2 0h1m202 0h1m118 0h1M40 110h1m12 0h1m53 0h1m77 0h1m15 0h1m1 0h1m46 0h1m82 0h1m61 0h1m9 0h1m153 0h1M135 111h1m15 0h1m11 0h1m8 0h1m75 0h1h1m40 0h1m145 0h1m174 0h1M65 112h1m79 0h1m14 0h1m37 0h1m63 0h1m34 0h1m40 0h1M94 113h1m191 0h1m173 0h1h1m70 0h1m43 0h1M345 114h1m110 0h1m94 0h1h1m45 0h1M25 115h1m330 0h1m46 0h1m29 0h1m125 0h1M138 116h1m135 0h1m185 0h1m106 0h1m27 0h1M131 117h1m60 0h1m4 0h1m2 0h1m15 0h1m118 0h1m44 0h1m43 0h1m158 0h1M30 118h1m55 0h1m67 0h1m43 0h1m26 0h1m16 0h1m111 0h1m45 0h1m60 0h1M185 119h1m343 0h1m37 0h1M216 120h1m99 0h1m6 0h1m17 0h1m30 0h1M198 121h1m12 0h1m149 0h1m45 0h1M108 122h1m52 0h1m50 0h1m92 0h1m17 0h1M28 123h1m170 0h1m91 0h1m114 0h1m85 0h1m77 0h1M84 124h1m81 0h1m59 0h1m147 0h1m12 0h1m42 0h1m168 0h1M69 125h1m10 0h1m97 0h1m152 0h1M96 126h1m113 0h1m122 0h1m107 0h1M100 127h1m51 0h1m17 0h1m150 0h1m247 0h1m15 0h1M198 128h1m2 0h1m58 0h1m76 0h1m50 0h1m78 0h1M57 129h1m23 0h1m112 0h1m62 0h1m1 0h1m200 0h1m26 0h1M105 130h1m95 0h1m51 0h1M513 131h1m4 0h1m50 0h1M197 132h1m66 0h1m200 0h1m8 0h1m39 0h1m6 0h1m15 0h1M141 133h1m246 0h1m59 0h1m94 0h1m42 0h1M155 134h1m197 0h1m138 0h1m88 0h1M227 135h1m209 0h1m113 0h1m13 0h1M202 136h1m9 0h1m277 0h1M129 137h1m45 0h1m23 0h1h1m1 0h1m234 0h1m56 0h1m54 0h1M156 138h1m136 0h1m155 0h1M23 139h1m176 0h1m25 0h1m39 0h1m227 0h1m35 0h1m16 0h1m7 0h1m35 0h1M130 140h1m10 0h1m110 0h1m57 0h1m3 0h1M129 141h1m39 0h1m342 0h1m32 0h1m34 0h1M41 142h1m158 0h1h1m46 0h1m18 0h1M160 143h1m37 0h1m1 0h1m60 0h1m42 0h1m118 0h1m194 0h1M126 144h1m111 0h1m117 0h1m112 0h1m31 0h1m51 0h1M25 145h1m133 0h1m18 0h1m24 0h1m182 0h1M205 146h1m1 0h1m3 0h1m47 0h1m146 0h1m114 0h1m54 0h1M227 147h1m65 0h1m84 0h1m8 0h1m36 0h1M131 148h1m63 0h1m116 0h1m49 0h1m56 0h1m51 0h1m8 0h1m40 0h1m82 0h1M197 149h1h1m5 0h1m108 0h1M146 150h1m35 0h1m18 0h1m160 0h1m128 0h1m45 0h1M40 151h1m243 0h1m40 0h1m61 0h1m24 0h1M217 152h1m86 0h1m40 0h1m78 0h1m98 0h1m58 0h1m1 0h1M196 153h1m4 0h1m14 0h1M105 154h1m95 0h1h1m129 0h1m158 0h1M138 155h1m75 0h1m202 0h1m2 0h1m38 0h1m75 0h1m29 0h1M48 156h1m99 0h1m50 0h1m3 0h1m129 0h1m120 0h1m30 0h1m6 0h1M297 157h1m50 0h1m56 0h1M205 158h1m290 0h1m29 0h1m92 0h1M145 159h1m73 0h1m121 0h1m5 0h1m139 0h1M207 160h1M214 161h1m164 0h1M133 162h1m69 0h1m177 0h1m147 0h1m18 0h1M303 163h1m31 0h1m167 0h1h1m105 0h1M262 164h1m173 0h1m10 0h1m47 0h1m39 0h1m71 0h1M103 165h1m35 0h1m198 0h1m124 0h1m33 0h1M210 166h1m176 0h1m24 0h1m4 0h1M36 167h1m148 0h1m11 0h1m99 0h1m6 0h1m202 0h1M109 168h1m58 0h1m31 0h1m48 0h1m50 0h1m66 0h1m2 0h1m5 0h1M124 169h1m77 0h1m180 0h1m17 0h1m58 0h1m148 0h1M173 170h1m30 0h1m54 0h1m7 0h1m32 0h1m58 0h1M131 171h1m51 0h1m277 0h1h1m20 0h1M28 172h1m44 0h1m35 0h1m76 0h1m98 0h1m92 0h1m91 0h1m91 0h1M203 173h1m33 0h1m69 0h1m201 0h1m30 0h1M175 174h1m4 0h1m22 0h1m175 0h1m176 0h1M202 175h1m77 0h1m120 0h1M199 176h1m86 0h1m10 0h1m93 0h1m219 0h1M47 177h1m62 0h1m113 0h1m14 0h1m18 0h1m28 0h1m191 0h1m62 0h1m2 0h1M192 178h1m10 0h1h1m170 0h1m85 0h1m28 0h1m4 0h1m7 0h1m63 0h1M84 179h1M201 180h1m67 0h1m144 0h1m66 0h1m80 0h1M166 181h1m37 0h1m2 0h1m7 0h1m26 0h1m114 0h1m50 0h1m2 0h1m64 0h1m94 0h1M163 182h1m37 0h1m42 0h1m198 0h1m105 0h1M41 183h1m19 0h1m144 0h1m276 0h1m29 0h1m30 0h1m73 0h1M59 184h1m255 0h1m1 0h1m53 0h1m118 0h1M22 185h1m13 0h1m248 0h1m249 0h1M150 186h1m53 0h1m114 0h1M123 187h1m75 0h1m42 0h1m89 0h1m2 0h1m50 0h1m120 0h1m59 0h1M31 188h1m21 0h1m149 0h1m15 0h1m26 0h1m22 0h1m40 0h1m260 0h1M55 189h1m109 0h1m78 0h1m232 0h1M188 190h1m5 0h1m4 0h1m88 0h1m179 0h1m27 0h1m103 0h1M134 191h1m60 0h1m17 0h1m58 0h1m22 0h1m21 0h1m140 0h1m139 0h1M128 192h1m126 0h1m259 0h1M127 193h1m181 0h1m210 0h1m44 0h1m8 0h1M201 194h1m62 0h1m42 0h1m179 0h1m80 0h1m22 0h1M159 195h1m238 0h1m15 0h1m139 0h1M142 196h1m324 0h1m126 0h1M36 197h1m13 0h1m145 0h1m84 0h1m192 0h1m59 0h1M126 198h1m3 0h1m41 0h1m79 0h1m71 0h1m35 0h1m123 0h1m101 0h1m23 0h1M204 199h1m113 0h1m123 0h1m100 0h1M186 200h1m25 0h1m40 0h1m103 0h1m130 0h1m8 0h1m34 0h1m52 0h1M203 201h1m111 0h1m64 0h1m101 0h1m24 0h1m47 0h1M174 202h1m30 0h1m11 0h1m104 0h1m47 0h1m37 0h1m18 0h1m138 0h1M151 203h1m53 0h1m92 0h1m3 0h1m70 0h1m29 0h1m83 0h1M129 204h1m72 0h1m128 0h1m5 0h1m19 0h1m77 0h1m46 0h1M336 205h1m112 0h1m1 0h1m22 0h1M20 206h1m178 0h1m13 0h1m95 0h1m179 0h1m7 0h1M205 207h1m118 0h1m49 0h1m7 0h1m2 0h1m9 0h1m48 0h1m50 0h1m28 0h1m37 0h1m36 0h1M111 208h1m113 0h1m194 0h1M238 209h1m28 0h1m172 0h1m6 0h1m49 0h1m61 0h1m27 0h1M203 210h1m195 0h1m43 0h1m96 0h1M168 211h1m36 0h1m251 0h1m12 0h1m24 0h1m43 0h1m9 0h1M137 212h1m44 0h1m39 0h1m46 0h1m147 0h1m93 0h1m9 0h1m40 0h1m48 0h1M210 213h1m164 0h1m12 0h1M139 214h1m35 0h1m37 0h1m24 0h1m22 0h1m39 0h1m213 0h1M140 215h1m60 0h1m88 0h1m123 0h1m68 0h1M153 216h1m167 0h1m96 0h1m67 0h1m120 0h1M69 217h1m15 0h1m47 0h1m87 0h1m104 0h1m12 0h1m251 0h1M371 218h1m34 0h1m115 0h1M94 219h1m47 0h1m131 0h1m171 0h1m3 0h1m84 0h1M204 220h1m4 0h1m30 0h1m15 0h1m97 0h1m10 0h1m1 0h1m12 0h1m7 0h1m39 0h1M207 221h1m7 0h1m56 0h1m88 0h1m110 0h1m28 0h1M138 222h1m3 0h1m66 0h1m39 0h1m111 0h1M427 223h1m10 0h1m45 0h1M145 224h1m57 0h1m145 0h1m217 0h1M74 225h1m321 0h1m47 0h1m56 0h1m32 0h1M203 226h1m7 0h1m88 0h1m30 0h1m13 0h1m228 0h1m5 0h1M169 227h1m122 0h1m253 0h1M114 228h1m92 0h1m37 0h1m97 0h1m246 0h1m24 0h1M101 229h1m78 0h1m102 0h1m92 0h1M229 230h1m185 0h1m100 0h1m27 0h1M168 231h1m41 0h1m105 0h1m279 0h1m16 0h1M143 232h1m44 0h1m343 0h1M309 233h1M30 234h1m59 0h1m66 0h1m194 0h1M133 235h1m55 0h1m21 0h1m151 0h1m218 0h1M85 236h1m119 0h1m3 0h1m70 0h1m95 0h1m87 0h1m139 0h1M140 237h1m171 0h1m12 0h1m24 0h1m85 0h1m162 0h1M113 238h1m12 0h1m329 0h1m123 0h1M135 239h1m10 0h1m9 0h1m17 0h1m32 0h1m258 0h1m120 0h1M176 240h1m12 0h1m39 0h1m72 0h1m39 0h1m116 0h1m93 0h1M115 241h1m83 0h1m117 0h1h1m55 0h1m7 0h1m151 0h1m46 0h1M50 242h1m153 0h1m131 0h1h1h1m55 0h1m30 0h1m17 0h1m56 0h1M98 243h1m162 0h1m56 0h1m66 0h1m35 0h1M254 244h1m130 0h1m113 0h1m26 0h1m71 0h1M44 245h1m249 0h1m242 0h1m1 0h1m73 0h1M63 246h1m23 0h1m71 0h1m126 0h1M157 247h1m208 0h1m18 0h1m12 0h1m67 0h1M520 248h1m40 0h1M260 249h1m34 0h1m58 0h1m153 0h1m13 0h1M86 250h1m115 0h1h1m72 0h1m79 0h1m65 0h1m17 0h1m29 0h1m101 0h1m27 0h1M207 251h1m19 0h1m44 0h1m49 0h1m66 0h1m88 0h1m123 0h1M143 252h1m62 0h1m23 0h1m80 0h1m93 0h1m151 0h1M131 253h1m24 0h1m53 0h1m101 0h1m28 0h1m111 0h1m38 0h1m81 0h1m18 0h1M210 254h1h1m301 0h1M76 255h1m61 0h1m10 0h1m69 0h1m119 0h1m118 0h1m85 0h1M209 256h1m78 0h1m21 0h1m92 0h1m139 0h1M148 257h1m76 0h1m18 0h1m211 0h1m60 0h1m10 0h1m10 0h1m17 0h1M415 258h1m84 0h1m15 0h1M21 259h1m20 0h1m78 0h1m94 0h1m117 0h1m110 0h1m27 0h1m52 0h1M43 260h1m96 0h1m68 0h1m176 0h1m166 0h1M88 261h1m103 0h1m3 0h1m97 0h1m83 0h1m8 0h1m219 0h1M177 262h1m17 0h1m58 0h1m2 0h1m12 0h1m256 0h1M61 263h1m220 0h1m147 0h1m89 0h1m66 0h1m26 0h1M108 264h1m227 0h1m86 0h1m2 0h1m71 0h1M205 265h1m3 0h1m27 0h1m104 0h1m210 0h1M208 266h1m1 0h1m18 0h1m110 0h1m71 0h1m44 0h1M234 267h1m22 0h1m59 0h1m43 0h1m95 0h1m14 0h1m119 0h1m1 0h1m6 0h1M202 268h1m4 0h1m87 0h1m20 0h1m35 0h1m248 0h1M340 269h1M43 270h1m102 0h1m63 0h1m49 0h1m113 0h1m8 0h1m120 0h1M47 271h1m21 0h1m136 0h1h1m2 0h1m2 0h1m227 0h1m11 0h1M209 272h1m43 0h1m5 0h1m20 0h1m40 0h1m29 0h1m69 0h1m2 0h1m95 0h1m57 0h1M225 273h1m50 0h1m196 0h1m96 0h1m15 0h1M237 274h1m47 0h1m57 0h1m15 0h1m86 0h1m54 0h1M154 275h1m8 0h1m69 0h1m63 0h1m35 0h1m12 0h1m218 0h1M210 276h1m14 0h1m10 0h1m79 0h1M368 277h1m2 0h1m152 0h1m53 0h1M209 278h1h1m74 0h1m21 0h1m8 0h1m21 0h1m96 0h1m52 0h1M77 279h1m128 0h1m108 0h1m108 0h1m87 0h1M64 280h1m36 0h1m40 0h1m334 0h1M96 281h1m296 0h1m11 0h1M44 282h1m109 0h1h1m57 0h1m60 0h1m85 0h1m11 0h1m95 0h1M277 283h1m4 0h1m150 0h1m79 0h1m10 0h1m82 0h1M66 284h1m179 0h1m249 0h1m105 0h1M126 285h1m20 0h1m48 0h1m11 0h1m5 0h1m110 0h1m158 0h1m52 0h1M207 286h1m2 0h1m20 0h1m109 0h1m40 0h1m40 0h1m62 0h1m25 0h1m5 0h1m27 0h1h1M127 287h1m230 0h1m95 0h1m91 0h1m64 0h1M281 288h1m11 0h1m205 0h1m4 0h1M277 289h1m189 0h1m31 0h1M208 290h1m2 0h1m40 0h1m121 0h1m10 0h1m22 0h1m86 0h1m24 0h1M174 291h1m31 0h1m107 0h1m178 0h1M134 292h1m89 0h1m171 0h1m31 0h1m178 0h1M199 293h1m237 0h1m41 0h1M271 294h1m6 0h1m136 0h1m155 0h1M31 295h1m60 0h1m120 0h1m15 0h1m51 0h1m127 0h1m51 0h1m92 0h1M63 296h1m255 0h1m142 0h1m88 0h1M198 297h1m51 0h1m106 0h1m9 0h1m3 0h1m20 0h1m10 0h1m47 0h1m65 0h1m25 0h1M259 298h1m13 0h1m8 0h1m279 0h1M162 299h1m43 0h1m79 0h1m36 0h1m64 0h1m48 0h1h1m5 0h1m99 0h1m70 0h1M184 300h1m14 0h1m68 0h1m11 0h1m138 0h1m152 0h1m19 0h1M268 301h1m126 0h1m33 0h1m95 0h1M168 302h1m24 0h1m40 0h1m186 0h1m5 0h1m9 0h1m52 0h1M325 303h1m109 0h1M212 304h1m2 0h1m95 0h1m16 0h1m36 0h1m83 0h1m32 0h1m63 0h1M172 305h1m11 0h1m16 0h1m90 0h1m62 0h1m187 0h1M149 306h1m61 0h1m68 0h1m20 0h1m14 0h1m120 0h1m58 0h1m28 0h1M131 307h1m25 0h1m44 0h1m12 0h1m139 0h1m146 0h1M426 308h1m26 0h1M238 309h1m173 0h1m16 0h1m16 0h1m15 0h1m57 0h1m41 0h1m26 0h1M105 310h1m18 0h1m217 0h1m17 0h1m196 0h1m6 0h1M153 311h1m31 0h1m25 0h1m62 0h1m85 0h1m151 0h1m82 0h1M421 312h1m130 0h1m14 0h1m11 0h1M459 313h1M129 314h1m2 0h1m107 0h1m50 0h1m14 0h1m46 0h1m156 0h1m35 0h1m5 0h1m54 0h1M138 315h1m26 0h1m8 0h1m40 0h1M195 316h1m200 0h1m47 0h1m124 0h1M33 317h1m174 0h1m333 0h1m18 0h1M211 318h1m14 0h1m112 0h1m2 0h1m195 0h1m68 0h1M207 319h1m1 0h1m30 0h1m41 0h1m59 0h1m235 0h1M211 320h1m5 0h1m19 0h1m1 0h1m157 0h1m22 0h1h1m20 0h1M364 321h1m129 0h1M214 322h1m31 0h1m103 0h1m56 0h1m92 0h1M169 323h1m248 0h1m16 0h1M172 324h1m3 0h1m359 0h1m22 0h1M137 325h1m79 0h1m14 0h1m40 0h1m100 0h1m19 0h1m40 0h1M239 326h1m5 0h1m164 0h1m49 0h1m21 0h1m120 0h1m2 0h1M216 327h1m85 0h1m72 0h1m51 0h1M194 328h1m2 0h1m13 0h1m23 0h1m162 0h1m66 0h1m127 0h1M119 329h1m35 0h1m35 0h1m4 0h1m16 0h1m61 0h1m21 0h1m75 0h1M254 330h1m46 0h1m120 0h1M235 331h1m31 0h1m60 0h1m62 0h1m46 0h1m67 0h1M161 332h1m49 0h1m1 0h1m52 0h1m119 0h1m37 0h1m140 0h1m1 0h1m7 0h1M194 333h1m17 0h1m109 0h1m112 0h1m53 0h1M208 334h1m150 0h1m130 0h1m44 0h1m57 0h1M119 335h1m95 0h1m3 0h1m204 0h1m160 0h1M161 336h1m190 0h1m69 0h1m4 0h1m21 0h1m111 0h1M188 337h1m139 0h1M129 338h1m86 0h1m143 0h1m18 0h1m44 0h1m11 0h1M176 339h1m7 0h1m11 0h1m3 0h1m131 0h1m62 0h1m175 0h1M223 340h1m41 0h1m208 0h1m69 0h1M201 341h1m4 0h1m144 0h1m132 0h1m4 0h1m106 0h1m1 0h1m9 0h1M176 342h1m60 0h1m198 0h1m3 0h1m91 0h1M424 343h1m9 0h1m6 0h1m5 0h1m139 0h1M216 344h1m200 0h1m77 0h1m118 0h1M53 345h1m65 0h1m309 0h1m9 0h1m106 0h1m32 0h1M47 346h1m192 0h1m9 0h1m236 0h1m41 0h1M29 347h1m46 0h1m88 0h1m35 0h1M106 348h1m105 0h1m375 0h1M246 349h1m26 0h1m42 0h1m266 0h1m27 0h1M228 350h1m30 0h1m71 0h1m137 0h1m128 0h1M214 351h1m102 0h1m45 0h1m55 0h1m56 0h1m94 0h1M23 352h1m68 0h1m33 0h1m88 0h1m75 0h1m22 0h1m19 0h1M138 353h1m16 0h1m150 0h1m306 0h1M197 354h1m200 0h1m74 0h1m98 0h1M62 355h1m152 0h1m38 0h1m61 0h1m201 0h1m37 0h1m47 0h1M147 356h1m69 0h1m341 0h1M91 357h1m74 0h1m97 0h1m17 0h1m29 0h1m68 0h1m144 0h1m51 0h1M503 358h1m104 0h1M44 359h1m3 0h1m31 0h1m61 0h1m69 0h1m131 0h1m66 0h1m45 0h1M41 360h1m100 0h1m72 0h1h1m350 0h1m14 0h1M80 361h1m140 0h1m159 0h1m104 0h1M183 362h1m59 0h1m102 0h1M161 363h1m27 0h1m103 0h1m94 0h1m15 0h1m46 0h1M145 364h1m66 0h1M38 365h1m58 0h1m53 0h1m157 0h1m45 0h1m19 0h1m10 0h1m65 0h1m95 0h1M102 366h1m113 0h1m3 0h1m48 0h1m175 0h1m69 0h1m83 0h1M35 367h1m159 0h1m18 0h1m2 0h1m72 0h1m42 0h1m50 0h1m173 0h1m4 0h1M55 368h1m158 0h1m308 0h1M244 369h1m23 0h1m109 0h1m95 0h1M89 370h1m103 0h1m26 0h1m34 0h1M189 371h1m269 0h1m154 0h1M180 372h1m37 0h1m47 0h1m57 0h1m186 0h1m12 0h1m28 0h1M139 373h1m1 0h1m105 0h1m42 0h1m167 0h1m59 0h1M94 374h1m96 0h1m14 0h1m31 0h1m15 0h1m24 0h1m9 0h1m116 0h1m131 0h1m19 0h1m29 0h1M37 375h1m269 0h1m32 0h1m117 0h1m63 0h1m56 0h1m15 0h1M160 376h1m54 0h1m33 0h1m178 0h1m106 0h1m55 0h1m18 0h1M215 377h1m128 0h1m42 0h1m173 0h1M208 378h1m98 0h1m53 0h1m80 0h1m14 0h1M22 379h1m126 0h1m72 0h1M153 380h1m65 0h1m7 0h1m164 0h1m121 0h1M148 381h1m7 0h1m61 0h1m99 0h1m153 0h1m20 0h1M97 382h1m27 0h1m75 0h1m143 0h1m159 0h1m107 0h1M216 383h1m87 0h1m163 0h1m140 0h1m3 0h1M147 384h1m65 0h1m219 0h1m136 0h1M91 385h1m120 0h1m35 0h1m23 0h1m189 0h1m5 0h1M160 386h1m74 0h1m183 0h1m57 0h1m78 0h1m35 0h1m11 0h1M159 387h1m166 0h1m20 0h1m11 0h1m55 0h1m76 0h1m11 0h1M189 388h1m323 0h1M164 389h1m52 0h1m144 0h1M172 390h1m96 0h1m147 0h1m2 0h1m82 0h1m23 0h1m51 0h1M149 391h1m70 0h1m172 0h1m17 0h1m82 0h1M72 392h1m315 0h1m58 0h1m53 0h1M175 393h1m81 0h1M24 394h1m260 0h1m81 0h1m5 0h1m143 0h1m51 0h1m21 0h1M266 395h1m128 0h1m15 0h1m16 0h1m10 0h1m18 0h1M189 396h1m26 0h1m379 0h1M405 398h1m32 0h1M214 399h1m9 0h1m82 0h1m7 0h1" stroke="#00006c"/>
<path d="M166 80h1m71 0h1m110 0h1m216 0h1M138 81h1m159 0h1m218 0h1M360 82h1m137 0h1m83 0h1m26 0h1M297 83h1m220 0h1M236 84h1m109 0h1M144 85h1m28 0h1M304 86h1m47 0h1M183 87h1m191 0h1M147 88h1m182 0h1m118 0h1m45 0h1m45 0h1m40 0h1M111 89h1M58 90h1m4 0h1m465 0h1M331 91h1M143 92h1m139 0h1m86 0h1m51 0h1m58 0h1M201 93h1m213 0h1m29 0h1M164 94h1m27 0h1m2 0h1m57 0h1m53 0h1m261 0h1M438 95h1M175 96h1m86 0h1m219 0h1m27 0h1m41 0h1M185 97h1m9 0h1m200 0h1M322 98h1m121 0h1m29 0h1m10 0h1M152 99h1m39 0h1m5 0h1m156 0h1m65 0h1M361 100h1M91 101h1m104 0h1m416 0h1M254 102h1m237 0h1M53 103h1m141 0h1m5 0h1M197 104h1h1m6 0h1m98 0h1m80 0h1m61 0h1M193 105h1m5 0h1m213 0h1M196 106h1m3 0h1m28 0h1m88 0h1m19 0h1m57 0h1m61 0h1m39 0h1m11 0h1m89 0h1M139 107h1m59 0h1m61 0h1M196 108h1m104 0h1m1 0h1m51 0h1m56 0h1m27 0h1m29 0h1M65 109h1m140 0h1m154 0h1m8 0h1m2 0h1M449 110h1M201 111h1m15 0h1m71 0h1m69 0h1m185 0h1M200 112h1m19 0h1m74 0h1m157 0h1m38 0h1m7 0h1M195 113h1m171 0h1m205 0h1M163 114h1m30 0h1m40 0h1m75 0h1m127 0h1m31 0h1M199 115h1m239 0h1m82 0h1M198 116h1m7 0h1m267 0h1m130 0h1M148 117h1m19 0h1m39 0h1m25 0h1m229 0h1m131 0h1M197 118h1m172 0h1m57 0h1M42 119h1m155 0h1m18 0h1m147 0h1M199 120h1m179 0h1m216 0h1M233 121h1m207 0h1m109 0h1m17 0h1M196 122h1m39 0h1m113 0h1m168 0h1m30 0h1M139 123h1m54 0h1m39 0h1m57 0h1m115 0h1m82 0h1M322 124h1m170 0h1M28 125h1m171 0h1m90 0h1m311 0h1M159 126h1m35 0h1m3 0h1m153 0h1m48 0h1m130 0h1M136 128h1m60 0h1m406 0h1m12 0h1M104 129h1m98 0h1m185 0h1m78 0h1M59 130h1m16 0h1m306 0h1M295 131h1m9 0h1m33 0h1m155 0h1m108 0h1M100 132h1m386 0h1m36 0h1M158 133h1m41 0h1m113 0h1m303 0h1M239 134h1m96 0h1m110 0h1M202 135h1m126 0h1m45 0h1M167 136h1m22 0h1m260 0h1m86 0h1m7 0h1M145 137h1m203 0h1m47 0h1m152 0h1m65 0h1M143 138h1m56 0h1m8 0h1m205 0h1h1M307 139h1m205 0h1M295 140h1m65 0h1m34 0h1M145 141h1m270 0h1m156 0h1m1 0h1M199 142h1m9 0h1m356 0h1M285 143h1m85 0h1m189 0h1M273 144h1m192 0h1M200 145h1m226 0h1m140 0h1M196 146h1m2 0h1m10 0h1m258 0h1m75 0h1M52 147h1m3 0h1m7 0h1m90 0h1m127 0h1m17 0h1M112 148h1m335 0h1M166 149h1m83 0h1m359 0h1M130 150h1m75 0h1m54 0h1m105 0h1M154 151h1m43 0h1m31 0h1m99 0h1m181 0h1m83 0h1M100 152h1m47 0h1M71 153h1m128 0h1m65 0h1m286 0h1M118 154h1m278 0h1m184 0h1M200 155h1h1m3 0h1M31 156h1m139 0h1m94 0h1m342 0h1M148 157h1m4 0h1m45 0h1m39 0h1m207 0h1m139 0h1M79 158h1m230 0h1M172 159h1m26 0h1m80 0h1m27 0h1m307 0h1M204 160h1m248 0h1m43 0h1m1 0h1m118 0h1M321 161h1m9 0h1m120 0h1M202 162h1m224 0h1M162 163h1m186 0h1M199 164h1M55 165h1m169 0h1m303 0h1m6 0h1m80 0h1M200 166h1m90 0h1M202 167h1m50 0h1M151 168h1m45 0h1m353 0h1M201 169h1m203 0h1M55 170h1m101 0h1m43 0h1h1m173 0h1m154 0h1m30 0h1M176 171h1m33 0h1m60 0h1M83 172h1m119 0h1m12 0h1m232 0h1m32 0h1M199 173h1m94 0h1m46 0h1M206 174h1m173 0h1M104 175h1m98 0h1m332 0h1m24 0h1M330 176h1m55 0h1M60 177h1m408 0h1h1M67 178h1m97 0h1m39 0h1m61 0h1m65 0h1m11 0h1M97 179h1m104 0h1m117 0h1m226 0h1M440 180h1m66 0h1M275 182h1m2 0h1m160 0h1M291 183h1M271 184h1m58 0h1h1m66 0h1m73 0h1M173 185h1m236 0h1m114 0h1M240 186h1m158 0h1m92 0h1M201 187h1m87 0h1m256 0h1M205 188h1m52 0h1m6 0h1m328 0h1M372 189h1M204 190h1m69 0h1M204 191h1m134 0h1M205 192h1m394 0h1M217 193h1m24 0h1M203 194h1m23 0h1m239 0h1M196 195h1m5 0h1m16 0h1m332 0h1M454 196h1M313 197h1m22 0h1m104 0h1m77 0h1M271 198h1m84 0h1m200 0h1M200 199h1m178 0h1m213 0h1M116 200h1m138 0h1m27 0h1M35 201h1m163 0h1m324 0h1m36 0h1m54 0h1M147 202h1m58 0h1m19 0h1m21 0h1m157 0h1m188 0h1M317 203h1m149 0h1m17 0h1m31 0h1m14 0h1M156 204h1M167 205h1m35 0h1m2 0h1m21 0h1m201 0h1m27 0h1M202 206h1m148 0h1m75 0h1m165 0h1M334 207h1M144 208h1m107 0h1m221 0h1m6 0h1M206 209h1m120 0h1m75 0h1m163 0h1M42 210h1m163 0h1m323 0h1M59 211h1m114 0h1m27 0h1m35 0h1m103 0h1m16 0h1m64 0h1M200 212h1h1m6 0h1m88 0h1M274 213h1m54 0h1M207 214h1m8 0h1m46 0h1m33 0h1m115 0h1m109 0h1M175 215h1m32 0h1m289 0h1M194 216h1m102 0h1M166 217h1m82 0h1m104 0h1m212 0h1M561 218h1M210 219h1m49 0h1m194 0h1m110 0h1M49 220h1m125 0h1m26 0h1m3 0h1h1M205 221h1m215 0h1m4 0h1M482 222h1m69 0h1m45 0h1M206 223h1m19 0h1m44 0h1M208 224h1M253 225h1m72 0h1m87 0h1M206 226h1m161 0h1M29 227h1m176 0h1h1m55 0h1m96 0h1m57 0h1M186 228h1m18 0h1m126 0h1m65 0h1m64 0h1M429 229h1m154 0h1M132 230h1m72 0h1h1m48 0h1m84 0h1M159 231h1m62 0h1m15 0h1m29 0h1m173 0h1m10 0h1m29 0h1m44 0h1M209 232h1m47 0h1m181 0h1m96 0h1m81 0h1M324 233h1m48 0h1m36 0h1M171 234h1m5 0h1m26 0h1m126 0h1M201 235h1m74 0h1m99 0h1M304 236h1m16 0h1m22 0h1M428 237h1m87 0h1m86 0h1M202 238h1m304 0h1M205 239h1h1m13 0h1m46 0h1m139 0h1m45 0h1m74 0h1M208 240h1m10 0h1m35 0h1m245 0h1M163 241h1m109 0h1m47 0h1m190 0h1M43 242h1m164 0h1m83 0h1m82 0h1m35 0h1h1M99 243h1m121 0h1m210 0h1M206 244h1m2 0h1h1m23 0h1m333 0h1m26 0h1M133 245h1m69 0h1m339 0h1M205 246h1M204 247h1h1m29 0h1m251 0h1m74 0h1M177 248h1m33 0h1m5 0h1m45 0h1m43 0h1m188 0h1M61 249h1M168 250h1m122 0h1m67 0h1m3 0h1m2 0h1m217 0h1m11 0h1M94 251h1m56 0h1m38 0h1m15 0h1m217 0h1m8 0h1m70 0h1m95 0h1M209 252h1m265 0h1M314 253h1m129 0h1m25 0h1m30 0h1m37 0h1m58 0h1M208 254h1m48 0h1m56 0h1M165 255h1m11 0h1m29 0h1M27 256h1m180 0h1m78 0h1m180 0h1M125 257h1m12 0h1m7 0h1m56 0h1m2 0h1m2 0h1m123 0h1m144 0h1M144 258h1m62 0h1m23 0h1m225 0h1M138 260h1m13 0h1m9 0h1m41 0h1m1 0h1m199 0h1M233 261h1m23 0h1m289 0h1M200 262h1m325 0h1m60 0h1M114 263h1m93 0h1m28 0h1m245 0h1m77 0h1M362 264h1m65 0h1m150 0h1m1 0h1M37 265h1m66 0h1m105 0h1m33 0h1m232 0h1M185 266h1m139 0h1m153 0h1m42 0h1m2 0h1m41 0h1m26 0h1M287 267h1m290 0h1M208 268h1M400 269h1m54 0h1m44 0h1M209 270h1m34 0h1m361 0h1M174 271h1m133 0h1m73 0h1m150 0h1M211 273h1m86 0h1m1 0h1m182 0h1m72 0h1M235 274h1m15 0h1m223 0h1M211 276h1m138 0h1M326 277h1m38 0h1m18 0h1m154 0h1m78 0h1M256 278h1m278 0h1M144 279h1m99 0h1m84 0h1m157 0h1M255 280h1m44 0h1m101 0h1m182 0h1m1 0h1M204 281h1m9 0h1m23 0h1m49 0h1M356 282h1M127 283h1m79 0h1m2 0h1m90 0h1m184 0h1m24 0h1M58 284h1m154 0h1m319 0h1M287 285h1m23 0h1M135 286h1m4 0h1m3 0h1m52 0h1m10 0h1m43 0h1m122 0h1m137 0h1M135 287h1M35 288h1m175 0h1m90 0h1m14 0h1m102 0h1M210 289h1m282 0h1m47 0h1M26 290h1m179 0h1m98 0h1m137 0h1M209 291h1m13 0h1m201 0h1m127 0h1M23 293h1m116 0h1m71 0h1m22 0h1m214 0h1m102 0h1M176 294h1m50 0h1M170 295h1m2 0h1m156 0h1m108 0h1m74 0h1M209 296h1m360 0h1M150 297h1m63 0h1m264 0h1m92 0h1M207 298h1m4 0h1m42 0h1m23 0h1m311 0h1M61 299h1m148 0h1m64 0h1m22 0h1m178 0h1m15 0h1m30 0h1m72 0h1M62 300h1m191 0h1m121 0h1m174 0h1M185 301h1m24 0h1m177 0h1M209 302h1m1 0h1m15 0h1M207 303h1m3 0h1h1m21 0h1M433 304h1m169 0h1M117 305h1m246 0h1m247 0h1M250 306h1m164 0h1m125 0h1M43 307h1m139 0h1m268 0h1m153 0h1M173 308h1m347 0h1M211 309h1m43 0h1m228 0h1m5 0h1m51 0h1M145 310h1m303 0h1m140 0h1M209 311h1m86 0h1m89 0h1M143 312h1m121 0h1M47 313h1h1m100 0h1m60 0h1m202 0h1M437 314h1m77 0h1m41 0h1M214 315h1m206 0h1m6 0h1m14 0h1M212 316h1m3 0h1m276 0h1m52 0h1M67 317h1m63 0h1m25 0h1m167 0h1M215 318h1m32 0h1m15 0h1m149 0h1m6 0h1M343 319h1m54 0h1m3 0h1M213 320h1m2 0h1m160 0h1m90 0h1m121 0h1m13 0h1M53 321h1m163 0h1m190 0h1M168 322h1m46 0h1m57 0h1m58 0h1m90 0h1M147 323h1m2 0h1m58 0h1m53 0h1m74 0h1M362 324h1m137 0h1m37 0h1m60 0h1M210 325h1m2 0h1m24 0h1M62 326h1m146 0h1h1M213 327h1m198 0h1M97 328h1m82 0h1m34 0h1m188 0h1m51 0h1m99 0h1M295 329h1m47 0h1m54 0h1M172 330h1m72 0h1m90 0h1m103 0h1M49 331h1m163 0h1m2 0h1M262 332h1m13 0h1m120 0h1M356 333h1m65 0h1M210 334h1m4 0h1m269 0h1m58 0h1M185 335h1m34 0h1m242 0h1M204 336h1m13 0h1m18 0h1m289 0h1m8 0h1m4 0h1M66 337h1m264 0h1m11 0h1m102 0h1m15 0h1M224 338h1m291 0h1M148 339h1m23 0h1m43 0h1m41 0h1m184 0h1m2 0h1m34 0h1M36 340h1m176 0h1m27 0h1m169 0h1M214 341h1m57 0h1m235 0h1M249 342h1m255 0h1m1 0h1M194 343h1m142 0h1m150 0h1M28 344h1m158 0h1m25 0h1m377 0h1M215 345h1m103 0h1m231 0h1M193 346h1M213 347h1m283 0h1M214 348h1h1m26 0h1m18 0h1m200 0h1m134 0h1M188 349h1m29 0h1m173 0h1m111 0h1m18 0h1m12 0h1m30 0h1M133 350h1m58 0h1m20 0h1m86 0h1m21 0h1m226 0h1M212 351h1m199 0h1M212 352h1m58 0h1m110 0h1m134 0h1M507 353h1M219 354h1m32 0h1m317 0h1M134 355h1m29 0h1m107 0h1m39 0h1m219 0h1m29 0h1M317 356h1h1m169 0h1M142 357h1m45 0h1m26 0h1m286 0h1m6 0h1m91 0h1m14 0h1M148 358h1m156 0h1M87 359h1m99 0h1M281 360h1m89 0h1m69 0h1m94 0h1M81 361h1m111 0h1m68 0h1m38 0h1m252 0h1m63 0h1M177 362h1M216 363h1m2 0h1M194 364h1m22 0h1m18 0h1m215 0h1m80 0h1M213 365h1m2 0h1M144 367h1m68 0h1m23 0h1m150 0h1h1m9 0h1M89 368h1m204 0h1M143 369h1m70 0h1m221 0h1m8 0h1m11 0h1m66 0h1M84 370h1m107 0h1m22 0h1m73 0h1m147 0h1M137 371h1m55 0h1m23 0h1m8 0h1m4 0h1m313 0h1m51 0h1M460 372h1m59 0h1m30 0h1m2 0h1M179 373h1m38 0h1m172 0h1m73 0h1m58 0h1M171 374h1m162 0h1m177 0h1M212 375h1m3 0h1m98 0h1m4 0h1m64 0h1m112 0h1M176 376h1m16 0h1m201 0h1m35 0h1m63 0h1M301 377h1m107 0h1m7 0h1m9 0h1m100 0h1M209 378h1m303 0h1m41 0h1M208 379h1m247 0h1m65 0h1M400 380h1M212 382h1m179 0h1m201 0h1m13 0h1M117 383h1m103 0h1m278 0h1M73 384h1m20 0h1m23 0h1m99 0h1m58 0h1m206 0h1M325 385h1M139 386h1m78 0h1m121 0h1m143 0h1M219 387h1m54 0h1M134 388h1m72 0h1m10 0h1M220 389h1m343 0h1m16 0h1M55 390h1m58 0h1m266 0h1m178 0h1M82 391h1m134 0h1h1h1m331 0h1m17 0h1M217 392h1m316 0h1M215 393h1M129 394h1M210 395h1m3 0h1m2 0h1m148 0h1m102 0h1M187 396h1m20 0h1m21 0h1m87 0h1m264 0h1h1M91 397h1m189 0h1m189 0h1m84 0h1m12 0h1M92 398h1m207 0h1m18 0h1" stroke="#000098"/>
<path d="M330 80h1M426 82h1M365 84h1m205 0h1M555 86h1M418 87h1M287 90h1m264 0h1M117 91h1m63 0h1M44 94h1m151 0h1M196 97h1h1m28 0h1M194 98h1M194 99h1m222 0h1M197 100h1m1 0h1h1M162 101h1m30 0h1M193 102h1m4 0h1m1 0h1h1M107 103h1m99 0h1m34 0h1M199 104h1M201 105h1m104 0h1M193 108h1m28 0h1m181 0h1M194 109h1m1 0h1M293 113h1M196 114h1m1 0h1m3 0h1M196 117h1m129 0h1M307 118h1m299 0h1M34 119h1m542 0h1M200 120h1m149 0h1M298 121h1M200 122h1m377 0h1M587 123h1M196 124h1h1M569 125h1M196 126h1m3 0h1m160 0h1M200 129h1m108 0h1m160 0h1M197 131h1m82 0h1M196 132h1m64 0h1M195 133h1M426 135h1M197 136h1m196 0h1M262 137h1m296 0h1M199 138h1m4 0h1M414 139h1m51 0h1M196 140h1M92 141h1m107 0h1M521 142h1M143 143h1M200 144h1M202 146h1M151 147h1m45 0h1m2 0h1M200 148h1m306 0h1M199 149h1m99 0h1m91 0h1M107 150h1m95 0h1m253 0h1M577 151h1M108 152h1m92 0h1m308 0h1M197 154h1m44 0h1m103 0h1m247 0h1M202 156h1M55 159h1m289 0h1m130 0h1M205 160h1M323 161h1M200 162h1M201 164h1M26 167h1h1M489 170h1M556 172h1M498 173h1M256 174h1M234 176h1m12 0h1M105 178h1m95 0h1M45 179h1m154 0h1M40 181h1m143 0h1m15 0h1m270 0h1M207 183h1m15 0h1M145 184h1M232 185h1M452 187h1m71 0h1M201 189h1M203 190h1m2 0h1M203 191h1M204 192h1M204 193h1m296 0h1m62 0h1M204 194h1m1 0h1m174 0h1M203 195h1h1M31 196h1m167 0h1m4 0h1M56 197h1m143 0h1M361 198h1M235 199h1m47 0h1m40 0h1m269 0h1M124 200h1M183 201h1m20 0h1m297 0h1M170 202h1M201 204h1M164 206h1m42 0h1M207 207h1m129 0h1m200 0h1M204 208h1M208 209h1m59 0h1M207 211h1M205 212h1m280 0h1M203 213h1M92 214h1M204 215h1m383 0h1M207 218h1m363 0h1M120 219h1M121 221h1M349 222h1M345 223h1m229 0h1M335 224h1M202 225h1m3 0h1m263 0h1M167 226h1M202 227h1M530 228h1m33 0h1M335 229h1m181 0h1m5 0h1M209 230h1M30 231h1m175 0h1m366 0h1m30 0h1M204 233h1m5 0h1m373 0h1M70 234h1M447 235h1M204 236h1m277 0h1M208 237h1M429 238h1M182 239h1m93 0h1M224 240h1m80 0h1M208 241h1M206 242h1m132 0h1M206 245h1m72 0h1M74 246h1m127 0h1m5 0h1h1m406 0h1M212 247h1M155 248h1m32 0h1M210 251h1M163 252h1M207 253h1h1m239 0h1M205 254h1m3 0h1m2 0h1m274 0h1m92 0h1M140 255h1m62 0h1m2 0h1m1 0h1M212 257h1M301 259h1M207 260h1m2 0h1M207 261h1m1 0h1M211 262h1M530 263h1m77 0h1M266 264h1m215 0h1M211 266h1h1m390 0h1M208 267h1M210 269h1M162 270h1m111 0h1m131 0h1M325 271h1m192 0h1M206 272h1m3 0h1m100 0h1M224 273h1m11 0h1M262 274h1m103 0h1M254 275h1m55 0h1M285 277h1m2 0h1m22 0h1m84 0h1M169 278h1m138 0h1m196 0h1M214 280h1m147 0h1M211 281h1m148 0h1M205 283h1m292 0h1M556 284h1M508 285h1M307 286h1M207 287h1m222 0h1m146 0h1M209 290h1m2 0h1m1 0h1M213 291h1M207 292h1M222 293h1M211 294h1m385 0h1M212 295h1M109 297h1m389 0h1M208 298h1m5 0h1M215 299h1M396 300h1m189 0h1M189 301h1m17 0h1M213 302h1m101 0h1m298 0h1M43 304h1M214 305h1m399 0h1M85 306h1m336 0h1M343 307h1m14 0h1m133 0h1M211 308h1m325 0h1M213 309h1m326 0h1M213 310h1m331 0h1M450 311h1M210 312h1m2 0h1M211 313h1m252 0h1M514 314h1M212 315h1M213 316h1m47 0h1m45 0h1M213 318h1m53 0h1M217 319h1M212 320h1M209 321h1m3 0h1m1 0h1M211 322h1m5 0h1M48 323h1m168 0h1m339 0h1M119 324h1m93 0h1m45 0h1m100 0h1M485 325h1M276 326h1M444 327h1M220 328h1m356 0h1M209 329h1m175 0h1M283 330h1m162 0h1m1 0h1M116 331h1m97 0h1M217 332h1M214 333h1M27 334h1m181 0h1m4 0h1M316 335h1M213 336h1m2 0h1m216 0h1M153 337h1M215 338h1m56 0h1m196 0h1m18 0h1m92 0h1m4 0h1M209 339h1M81 340h1m117 0h1M213 341h1m1 0h1M115 343h1m158 0h1M333 344h1M214 346h1M347 347h1M213 349h1m3 0h1M214 350h1m3 0h1M346 351h1m173 0h1M216 352h1m290 0h1M219 353h1m358 0h1M582 355h1M348 356h1M527 357h1M169 358h1M211 359h1m259 0h1m102 0h1M212 360h1m195 0h1M214 362h1m265 0h1M74 363h1m449 0h1M98 364h1M162 365h1m390 0h1M216 367h1m174 0h1M218 368h1m133 0h1m238 0h1M213 369h1m1 0h1M489 370h1M216 371h1m150 0h1m206 0h1M46 372h1m231 0h1M408 373h1m154 0h1M142 374h1m75 0h1M327 375h1M108 376h1M217 378h1m10 0h1M119 379h1m96 0h1m374 0h1M217 380h1M219 381h1M322 382h1M218 383h1m1 0h1m206 0h1m157 0h1M217 386h1m195 0h1M232 388h1M177 389h1m2 0h1m34 0h1m38 0h1M38 391h1m112 0h1m62 0h1m36 0h1m11 0h1m7 0h1M213 393h1h1M108 394h1m108 0h1M601 395h1M60 396h1M558 397h1M545 398h1M520 399h1" stroke="#0000cc"/>
</g>
<path d="M19 200h1v171h-1zM20 370h600v1h-600zM20 380h600v1h-600zM20 390h600v1h-600z" fill="#909090"/>
<path d="M21 399h1v1h-1zM24 398h1v2h-1zM33 399h1v1h-1zM34 399h1v1h-1zM38 399h1v1h-1zM40 399h1v1h-1zM43 399h1v1h-1zM45 399h1v1h-1zM46 399h1v1h-1zM47 399h1v1h-1zM49 399h1v1h-1zM51 399h1v1h-1zM52 399h1v1h-1zM53 399h1v1h-1zM56 399h1v1h-1zM57 399h1v1h-1zM58 399h1v1h-1zM60 399h1v1h-1zM65 399h1v1h-1zM68 399h1v1h-1zM77 399h1v1h-1zM82 399h1v1h-1zM89 399h1v1h-1zM92 399h1v1h-1zM93 399h1v1h-1zM95 398h1v2h-1zM96 399h1v1h-1zM104 399h1v1h-1zM109 399h1v1h-1zM110 398h1v2h-1zM116 399h1v1h-1zM118 399h1v1h-1zM120 399h1v1h-1zM125 399h1v1h-1zM128 399h1v1h-1zM130 399h1v1h-1zM137 399h1v1h-1zM139 399h1v1h-1zM142 399h1v1h-1zM143 399h1v1h-1zM144 399h1v1h-1zM145 399h1v1h-1zM146 399h1v1h-1zM148 399h1v1h-1zM150 399h1v1h-1zM152 399h1v1h-1zM153 399h1v1h-1zM154 399h1v1h-1zM155 399h1v1h-1zM156 399h1v1h-1zM158 399h1v1h-1zM159 399h1v1h-1zM161 399h1v1h-1zM162 399h1v1h-1zM163 399h1v1h-1zM164 399h1v1h-1zM165 399h1v1h-1zM166 398h1v2h-1zM167 399h1v1h-1zM168 399h1v1h-1zM169 398h1v2h-1zM170 399h1v1h-1zM171 399h1v1h-1zM172 399h1v1h-1zM173 399h1v1h-1zM174 399h1v1h-1zM176 398h1v2h-1zM177 397h1v3h-1zM178 399h1v1h-1zM179 399h1v1h-1zM180 399h1v1h-1zM182 398h1v2h-1zM184 398h1v2h-1zM185 397h1v3h-1zM186 399h1v1h-1zM189 399h1v1h-1zM190 399h1v1h-1zM191 398h1v2h-1zM198 399h1v1h-1zM199 398h1v2h-1zM200 397h1v3h-1zM201 395h1v5h-1zM202 395h1v5h-1zM217 395h1v5h-1zM218 396h1v4h-1zM219 397h1v3h-1zM220 398h1v2h-1zM221 398h1v2h-1zM222 398h1v2h-1zM223 399h1v1h-1zM224 399h1v1h-1zM226 399h1v1h-1zM228 398h1v2h-1zM229 398h1v2h-1zM230 399h1v1h-1zM231 398h1v2h-1zM232 399h1v1h-1zM233 399h1v1h-1zM234 398h1v2h-1zM235 398h1v2h-1zM236 398h1v2h-1zM237 397h1v3h-1zM239 398h1v2h-1zM240 398h1v2h-1zM241 399h1v1h-1zM242 399h1v1h-1zM243 398h1v2h-1zM244 399h1v1h-1zM245 399h1v1h-1zM246 398h1v2h-1zM247 398h1v2h-1zM248 398h1v2h-1zM249 399h1v1h-1zM250 397h1v3h-1zM251 397h1v3h-1zM252 397h1v3h-1zM253 398h1v2h-1zM254 399h1v1h-1zM255 399h1v1h-1zM256 398h1v2h-1zM257 398h1v2h-1zM258 398h1v2h-1zM260 398h1v2h-1zM261 399h1v1h-1zM262 398h1v2h-1zM264 399h1v1h-1zM265 399h1v1h-1zM266 398h1v2h-1zM267 398h1v2h-1zM268 398h1v2h-1zM269 398h1v2h-1zM270 399h1v1h-1zM271 399h1v1h-1zM272 399h1v1h-1zM273 398h1v2h-1zM274 398h1v2h-1zM275 398h1v2h-1zM276 399h1v1h-1zM277 399h1v1h-1zM278 398h1v2h-1zM279 397h1v3h-1zM280 398h1v2h-1zM282 399h1v1h-1zM283 399h1v1h-1zM284 398h1v2h-1zM287 399h1v1h-1zM288 398h1v2h-1zM289 398h1v2h-1zM290 399h1v1h-1zM291 399h1v1h-1zM293 397h1v3h-1zM294 398h1v2h-1zM295 397h1v3h-1zM297 397h1v3h-1zM298 399h1v1h-1zM300 399h1v1h-1zM301 399h1v1h-1zM302 399h1v1h-1zM304 398h1v2h-1zM305 398h1v2h-1zM307 399h1v1h-1zM308 398h1v2h-1zM309 399h1v1h-1zM310 397h1v3h-1zM311 399h1v1h-1zM312 398h1v2h-1zM313 399h1v1h-1zM314 399h1v1h-1zM315 399h1v1h-1zM316 399h1v1h-1zM319 399h1v1h-1zM321 399h1v1h-1zM322 399h1v1h-1zM323 399h1v1h-1zM324 398h1v2h-1zM325 399h1v1h-1zM326 399h1v1h-1zM327 398h1v2h-1zM328 399h1v1h-1zM329 398h1v2h-1zM330 398h1v2h-1zM331 398h1v2h-1zM332 398h1v2h-1zM333 399h1v1h-1zM334 399h1v1h-1zM335 398h1v2h-1zM336 399h1v1h-1zM338 399h1v1h-1zM339 399h1v1h-1zM340 398h1v2h-1zM342 399h1v1h-1zM343 399h1v1h-1zM344 399h1v1h-1zM345 399h1v1h-1zM346 399h1v1h-1zM347 398h1v2h-1zM348 397h1v3h-1zM349 398h1v2h-1zM350 399h1v1h-1zM353 397h1v3h-1zM355 399h1v1h-1zM356 398h1v2h-1zM357 399h1v1h-1zM358 398h1v2h-1zM359 399h1v1h-1zM360 399h1v1h-1zM361 399h1v1h-1zM362 399h1v1h-1zM364 399h1v1h-1zM365 399h1v1h-1zM366 398h1v2h-1zM367 397h1v3h-1zM369 399h1v1h-1zM370 399h1v1h-1zM371 398h1v2h-1zM372 399h1v1h-1zM373 399h1v1h-1zM374 397h1v3h-1zM375 399h1v1h-1zM376 399h1v1h-1zM377 398h1v2h-1zM378 397h1v3h-1zM381 398h1v2h-1zM382 399h1v1h-1zM383 399h1v1h-1zM387 399h1v1h-1zM388 398h1v2h-1zM389 398h1v2h-1zM390 398h1v2h-1zM391 397h1v3h-1zM392 398h1v2h-1zM393 398h1v2h-1zM394 399h1v1h-1zM396 399h1v1h-1zM397 398h1v2h-1zM398 398h1v2h-1zM399 397h1v3h-1zM400 399h1v1h-1zM401 399h1v1h-1zM402 398h1v2h-1zM403 399h1v1h-1zM404 398h1v2h-1zM407 399h1v1h-1zM408 399h1v1h-1zM409 399h1v1h-1zM410 398h1v2h-1zM412 398h1v2h-1zM413 398h1v2h-1zM417 398h1v2h-1zM418 399h1v1h-1zM419 398h1v2h-1zM420 398h1v2h-1zM421 399h1v1h-1zM422 399h1v1h-1zM424 399h1v1h-1zM425 399h1v1h-1zM426 398h1v2h-1zM428 397h1v3h-1zM429 399h1v1h-1zM430 399h1v1h-1zM432 398h1v2h-1zM433 398h1v2h-1zM435 398h1v2h-1zM436 399h1v1h-1zM437 399h1v1h-1zM438 398h1v2h-1zM439 399h1v1h-1zM441 399h1v1h-1zM442 398h1v2h-1zM443 397h1v3h-1zM445 398h1v2h-1zM446 398h1v2h-1zM447 398h1v2h-1zM448 398h1v2h-1zM449 399h1v1h-1zM451 399h1v1h-1zM452 399h1v1h-1zM454 399h1v1h-1zM455 398h1v2h-1zM456 399h1v1h-1zM458 399h1v1h-1zM459 399h1v1h-1zM460 398h1v2h-1zM461 398h1v2h-1zM462 399h1v1h-1zM463 398h1v2h-1zM464 399h1v1h-1zM465 398h1v2h-1zM466 399h1v1h-1zM468 397h1v3h-1zM469 399h1v1h-1zM473 398h1v2h-1zM474 398h1v2h-1zM475 399h1v1h-1zM476 399h1v1h-1zM477 399h1v1h-1zM478 399h1v1h-1zM479 398h1v2h-1zM481 399h1v1h-1zM482 399h1v1h-1zM484 399h1v1h-1zM485 398h1v2h-1zM486 399h1v1h-1zM487 398h1v2h-1zM488 399h1v1h-1zM489 397h1v3h-1zM490 399h1v1h-1zM491 398h1v2h-1zM492 398h1v2h-1zM493 399h1v1h-1zM494 398h1v2h-1zM495 399h1v1h-1zM497 398h1v2h-1zM498 399h1v1h-1zM499 399h1v1h-1zM500 398h1v2h-1zM501 399h1v1h-1zM504 399h1v1h-1zM505 399h1v1h-1zM507 399h1v1h-1zM508 399h1v1h-1zM509 398h1v2h-1zM510 399h1v1h-1zM511 399h1v1h-1zM513 399h1v1h-1zM514 399h1v1h-1zM516 398h1v2h-1zM517 399h1v1h-1zM518 399h1v1h-1zM519 398h1v2h-1zM520 398h1v2h-1zM521 399h1v1h-1zM522 399h1v1h-1zM523 399h1v1h-1zM525 398h1v2h-1zM528 398h1v2h-1zM529 399h1v1h-1zM531 399h1v1h-1zM532 398h1v2h-1zM533 398h1v2h-1zM534 399h1v1h-1zM535 398h1v2h-1zM537 397h1v3h-1zM538 398h1v2h-1zM539 398h1v2h-1zM540 398h1v2h-1zM541 399h1v1h-1zM542 399h1v1h-1zM543 398h1v2h-1zM544 398h1v2h-1zM545 398h1v2h-1zM546 398h1v2h-1zM547 397h1v3h-1zM548 399h1v1h-1zM551 399h1v1h-1zM552 398h1v2h-1zM553 399h1v1h-1zM554 398h1v2h-1zM556 399h1v1h-1zM557 399h1v1h-1zM558 399h1v1h-1zM559 399h1v1h-1zM560 399h1v1h-1zM562 399h1v1h-1zM563 398h1v2h-1zM565 399h1v1h-1zM567 399h1v1h-1zM568 397h1v3h-1zM569 399h1v1h-1zM570 399h1v1h-1zM571 399h1v1h-1zM572 398h1v2h-1zM574 399h1v1h-1zM575 398h1v2h-1zM576 399h1v1h-1zM577 399h1v1h-1zM578 398h1v2h-1zM579 398h1v2h-1zM580 399h1v1h-1zM581 399h1v1h-1zM582 398h1v2h-1zM584 399h1v1h-1zM585 399h1v1h-1zM586 399h1v1h-1zM587 398h1v2h-1zM588 399h1v1h-1zM589 399h1v1h-1zM590 399h1v1h-1zM591 399h1v1h-1zM592 398h1v2h-1zM593 398h1v2h-1zM594 399h1v1h-1zM595 398h1v2h-1zM596 399h1v1h-1zM597 399h1v1h-1zM598 399h1v1h-1zM599 398h1v2h-1zM600 399h1v1h-1zM601 398h1v2h-1zM602 398h1v2h-1zM603 399h1v1h-1zM604 398h1v2h-1zM605 398h1v2h-1zM606 399h1v1h-1zM607 399h1v1h-1zM608 398h1v2h-1zM609 398h1v2h-1zM610 399h1v1h-1zM611 399h1v1h-1zM612 399h1v1h-1zM613 398h1v2h-1zM614 399h1v1h-1zM615 398h1v2h-1zM616 399h1v1h-1zM617 399h1v1h-1zM618 398h1v2h-1zM619 399h1v1h-1z" fill="#00ffff"/>
<path d="M203 384h1v16h-1zM204 372h1v28h-1zM205 374h1v26h-1zM206 374h1v26h-1zM207 373h1v27h-1zM208 373h1v27h-1zM209 373h1v27h-1zM210 374h1v26h-1zM211 374h1v26h-1zM212 374h1v26h-1zM213 374h1v26h-1zM214 374h1v26h-1zM215 374h1v26h-1z" fill="#ffff00"/>
<path d="M197.00 93L216.89 398" stroke="#ff0068" stroke-width="1.6" fill="none" shape-rendering="geometricPrecision"/>
<g transform="translate(0,0.5)" fill="none" stroke-width="1">
<path d="M198 95h1M195 96h1m2 0h1M196 99h1M198 101h1M198 103h1M196 105h1m2 0h1M196 108h1m2 0h1M196 110h1M199 112h1M199 113h1M197 121h1M197 124h1M200 127h1M200 128h1M198 131h1M198 133h1m1 0h1M200 134h1M198 136h1M201 139h1M198 142h1M198 143h1M201 146h1M199 148h1M199 152h1m2 0h1M202 155h1M202 156h1M202 157h1M199 158h1M200 160h1m1 0h1M200 161h1M202 162h1M200 164h1M203 169h1M203 172h1M200 173h1M203 177h1M201 179h1M201 181h1M201 184h1m2 0h1M204 185h1M204 187h1M201 189h1M204 190h1M202 191h1M204 192h1M204 193h1M204 194h1M202 195h1M202 196h1M205 198h1M202 199h1m2 0h1M202 200h1M205 206h1M203 207h1m1 0h1M203 210h1M205 211h1M206 212h1M203 214h1M203 215h1M206 219h1M204 222h1M204 223h1M206 224h1M206 225h1M206 226h1M204 228h1m2 0h1M204 230h1M207 232h1M204 235h1m2 0h1M205 237h1M207 238h1M205 239h1M205 240h1M208 243h1M205 244h1m2 0h1M205 247h1M205 248h1M208 250h1M208 255h1M206 257h1m1 0h1M206 259h1M209 260h1M209 262h1M209 265h1M206 266h1M207 268h1m1 0h1M207 274h1M207 276h1M207 277h1m2 0h1M207 279h1M208 282h1m1 0h1M208 285h1m1 0h1M208 286h1m1 0h1M208 288h1M211 289h1M211 290h1M208 291h1M208 294h1M208 295h1M211 296h1M211 298h1M209 299h1M211 301h1M212 304h1M212 307h1M210 314h1M210 317h1m1 0h1M210 318h1M210 319h1m2 0h1M213 320h1M213 321h1M210 323h1m2 0h1M213 324h1M210 326h1m2 0h1M210 327h1M213 328h1M211 329h1m1 0h1M213 331h1M213 332h1M213 333h1M214 334h1M214 335h1M211 339h1M212 346h1M212 347h1M212 348h1M212 349h1M215 350h1M212 351h1M215 353h1M212 354h1M215 357h1M215 358h1M215 359h1M215 360h1M213 367h1M213 369h1m2 0h1M213 371h1M216 372h1M216 374h1M216 375h1M216 377h1M217 380h1M217 381h1M217 382h1M217 385h1M218 396h1M218 397h1" stroke="#3018ff"/>
<path d="M196 95h1M197 100h1M196 106h1M197 114h1M197 115h1M198 118h1M197 122h1M198 128h1M198 135h1M199 142h1M199 151h1M201 160h1M201 161h1M202 172h1M201 177h1M201 178h1M202 187h1M202 197h1M202 198h1M203 213h1M204 216h1M204 226h1M205 234h1M205 239h1M206 255h1M207 263h1M207 264h1M207 268h1M207 269h1M209 295h1M210 303h1M211 317h1M210 320h1M211 330h1M213 351h1M213 352h1M213 358h1M213 360h1M215 371h1M215 372h1M215 377h1M215 386h1M216 390h1M215 395h1" stroke="#00ff60"/>
<path d="M196 107h1M198 136h1M200 154h1M202 173h1M202 186h1M202 192h1M205 219h1M205 220h1M207 248h1M207 249h1M207 276h1M207 277h1M209 283h1M209 284h1M208 291h1M208 292h1M210 319h1M211 324h1M211 329h1M211 338h1M212 341h1M212 342h1M212 348h1M213 354h1M213 355h1M213 357h1M215 378h1M215 382h1M215 383h1M215 385h1" stroke="#00c0ff"/>
<path d="M198 117h1M200 163h1M203 204h1M203 212h1M204 225h1M204 228h1M210 309h1M211 316h1M211 323h1M211 337h1M212 347h1M213 364h1M216 389h1" stroke="#ffe000"/>
<path d="M197 114h1M202 185h1M203 193h1M205 225h1M205 235h1M205 237h1M208 274h1M210 301h1M211 319h1M212 334h1M213 341h1M214 354h1M214 363h1M215 370h1M215 378h1M216 394h1" stroke="#ff0020"/>
</g>
<path d="M16 90h2v1h-2zM624 90h2v1h-2zM16 100h2v1h-2zM624 100h2v1h-2zM16 110h2v1h-2zM624 110h2v1h-2zM16 120h2v1h-2zM624 120h2v1h-2zM16 130h2v1h-2zM624 130h4v1h-4zM16 140h2v1h-2zM624 140h2v1h-2zM16 150h2v1h-2zM624 150h2v1h-2zM16 160h2v1h-2zM624 160h2v1h-2zM16 170h2v1h-2zM624 170h2v1h-2zM16 180h2v1h-2zM624 180h4v1h-4zM16 190h2v1h-2zM624 190h2v1h-2zM16 200h2v1h-2zM624 200h2v1h-2zM16 210h2v1h-2zM624 210h2v1h-2zM16 220h2v1h-2zM624 220h2v1h-2zM16 230h2v1h-2zM624 230h4v1h-4zM16 240h2v1h-2zM624 240h2v1h-2zM16 250h2v1h-2zM624 250h2v1h-2zM16 260h2v1h-2zM624 260h2v1h-2zM16 270h2v1h-2zM624 270h2v1h-2zM16 280h2v1h-2zM624 280h4v1h-4zM16 290h2v1h-2zM624 290h2v1h-2zM16 300h2v1h-2zM624 300h2v1h-2zM16 310h2v1h-2zM624 310h2v1h-2zM16 320h2v1h-2zM624 320h2v1h-2zM16 330h2v1h-2zM624 330h4v1h-4zM16 340h2v1h-2zM624 340h2v1h-2zM16 350h2v1h-2zM624 350h2v1h-2zM16 360h2v1h-2zM624 360h2v1h-2zM16 370h2v1h-2zM624 370h2v1h-2zM16 380h2v1h-2zM624 380h4v1h-4zM16 390h2v1h-2zM624 390h2v1h-2zM80 93h1v2h-1zM140 93h1v2h-1zM200 93h1v2h-1zM260 93h1v2h-1zM320 93h1v2h-1zM380 93h1v2h-1zM440 93h1v2h-1zM500 93h1v2h-1zM560 93h1v2h-1zM620 93h1v2h-1z" fill="#ffff00"/>
</svg>
<div id="txt">
<div class="m" style="left:179px;top:4px;width:217px"><span>Observer           :Masaki Kano</span></div>
<div class="m" style="left:179px;top:16px;width:287px"><span>Receiving Location :Shibukawa,Gunma,Japan</span></div>
<div class="m" style="left:179px;top:28px;width:378px"><span>Receiver           :RTL-SDR SDR# 43dB L15 114.1MHz USB</span></div>
<div class="m" style="left:179px;top:40px;width:343px;height:16px"><span>Receiving antenna  :5el Yagi Az 20 for Aomori VOR</span></div>
<div class="m" style="left:19px;top:19px;width:105px;height:16px"><span>UT2510181140.pn</span></div>
<div class="m" style="left:19px;top:39px;width:126px"><span>25.10.18 11:40   1</span></div>
<div class="m" style="left:124px;top:24px;width:42px;background:#000"><span>meteor</span></div>
<div class="dot" style="left:127px;top:24px;width:2px"></div><div class="dot" style="left:130px;top:24px;width:1px"></div><div class="dot" style="left:148px;top:50px;width:3px"></div>
<div class="h" style="left:50px">H R O F F T</div>
<div class="m lb" style="left:57px;top:79px;width:24px"><span>1141</span></div>
<div class="m lb" style="left:117px;top:79px;width:24px"><span>1142</span></div>
<div class="m lb" style="left:177px;top:79px;width:24px"><span>1143</span></div>
<div class="m lb" style="left:237px;top:79px;width:24px"><span>1144</span></div>
<div class="m lb" style="left:297px;top:79px;width:24px"><span>1145</span></div>
<div class="m lb" style="left:357px;top:79px;width:24px"><span>1146</span></div>
<div class="m lb" style="left:417px;top:79px;width:24px"><span>1147</span></div>
<div class="m lb" style="left:477px;top:79px;width:24px"><span>1148</span></div>
<div class="m lb" style="left:537px;top:79px;width:24px"><span>1149</span></div>
<div class="m lb" style="left:597px;top:79px;width:31px"><span>1150</span></div>
<div class="a" style="left:0;top:130px">1.1</div>
<div class="a" style="left:0;top:180px">1.0</div>
<div class="a" style="left:0;top:230px">0.9</div>
<div class="a" style="left:0;top:280px">0.8</div>
<div class="a" style="left:0;top:330px">0.7</div>
<div class="a" style="left:0;top:380px">0.6</div>
<div class="a" style="left:-1px;top:81px">kHz</div>
</div>
</body></html>
